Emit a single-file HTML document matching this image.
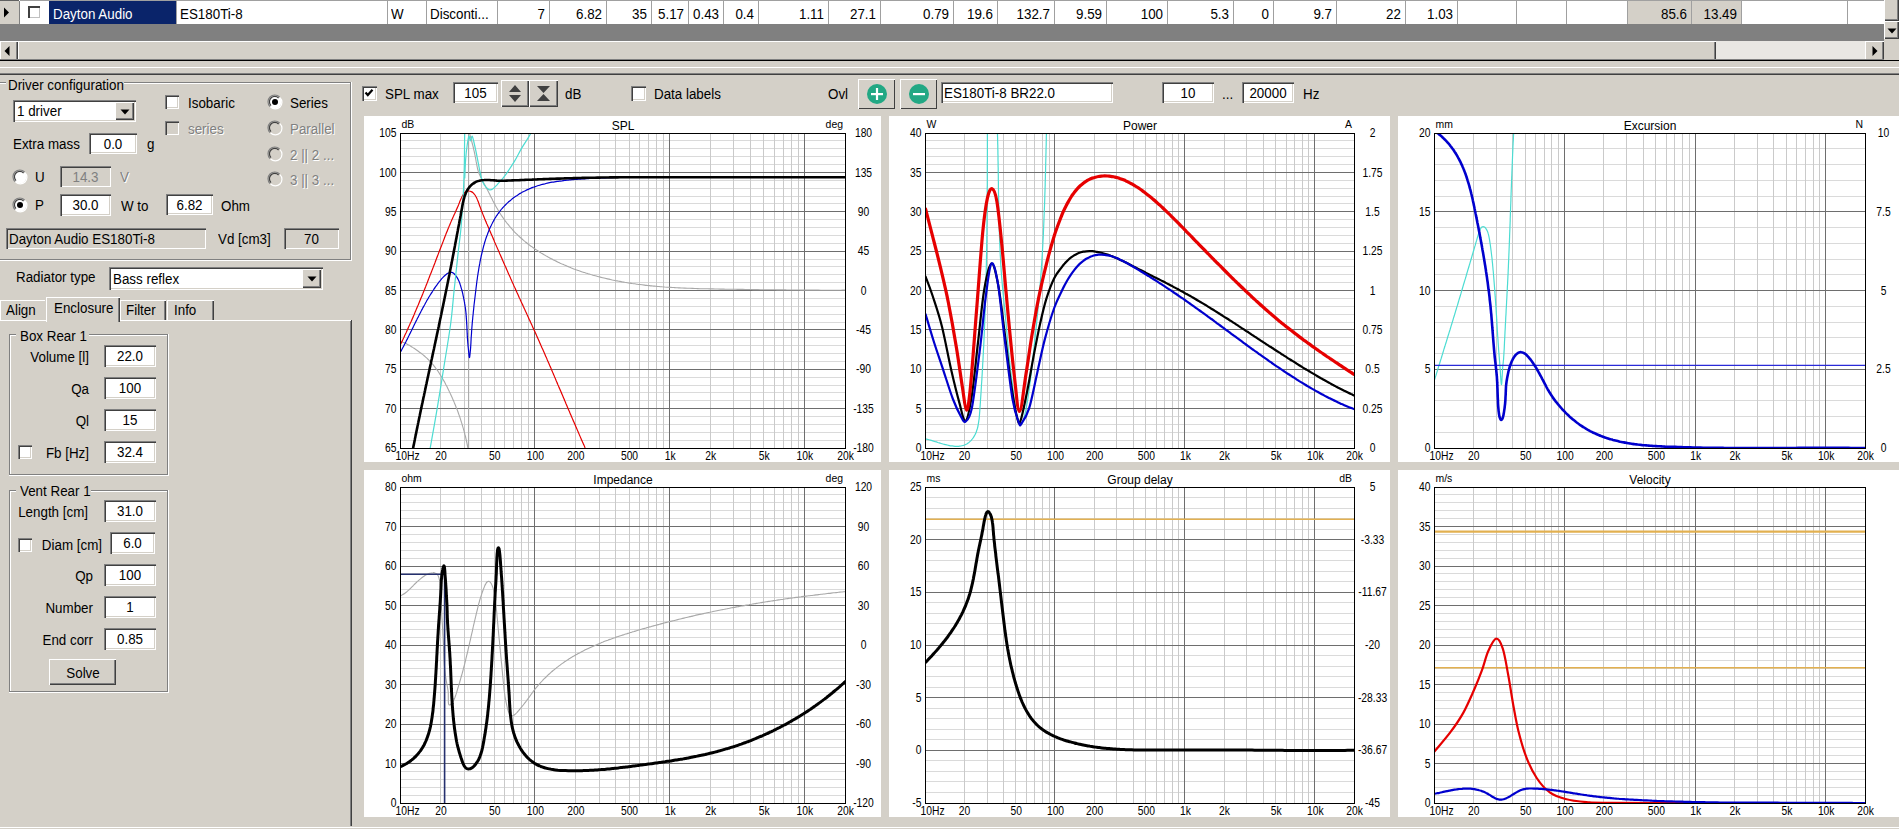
<!DOCTYPE html>
<html><head><meta charset="utf-8"><title>Enclosure</title>
<style>
html,body{margin:0;padding:0;}
body{width:1899px;height:829px;overflow:hidden;position:relative;background:#d4d0c8;font-family:"Liberation Sans",sans-serif;}
.a{position:absolute;box-sizing:border-box;}
.t{position:absolute;white-space:nowrap;font-family:"Liberation Sans",sans-serif;}
svg.a{overflow:visible;}
</style></head><body>
<div class="a" style="left:0px;top:0px;width:1899px;height:24px;background:#fff;"></div>
<div class="a" style="left:0px;top:0px;width:1884px;height:1px;background:#a0a0a0;"></div>
<div class="a" style="left:0px;top:0px;width:20px;height:24px;background:#d4d0c8;box-shadow: inset 0 1px 0 #fff, inset -1px 0 0 #808080;"></div>
<div class="a" style="left:0px;top:0px;width:19px;height:1px;background:#606060;"></div>
<svg class="a" style="left:3px;top:7px" width="8" height="11"><path d="M1 0.5 L6 5.5 L1 10.5 Z" fill="#000"/></svg>
<div class="a" style="left:28px;top:6px;width:12px;height:12px;background:#fff;box-shadow: inset 2px 2px 0 #404040, inset -1px -1px 0 #c0c0c0;"></div>
<div class="a" style="left:49px;top:1px;width:127px;height:23px;background:#0a246a;"></div>
<div class="t" style="left:53px;transform-origin:0 50%;top:5.70px;font-size:14px;line-height:16.10px;color:#fff;transform:scaleX(0.955);">Dayton Audio</div>
<div class="a" style="left:387px;top:1px;width:1px;height:23px;background:#a0a0a0;"></div>
<div class="t" style="left:180px;transform-origin:0 50%;top:5.70px;font-size:14px;line-height:16.10px;color:#000;transform:scaleX(0.955);">ES180Ti-8</div>
<div class="a" style="left:426px;top:1px;width:1px;height:23px;background:#a0a0a0;"></div>
<div class="t" style="left:391px;transform-origin:0 50%;top:5.70px;font-size:14px;line-height:16.10px;color:#000;transform:scaleX(0.955);">W</div>
<div class="a" style="left:497px;top:1px;width:1px;height:23px;background:#a0a0a0;"></div>
<div class="t" style="left:430px;transform-origin:0 50%;top:5.70px;font-size:14px;line-height:16.10px;color:#000;transform:scaleX(0.955);">Disconti...</div>
<div class="a" style="left:549px;top:1px;width:1px;height:23px;background:#a0a0a0;"></div>
<div class="t" style="left:424.5px;width:120px;text-align:right;transform-origin:100% 50%;top:5.70px;font-size:14px;line-height:16.10px;color:#000;transform:scaleX(0.955);">7</div>
<div class="a" style="left:606px;top:1px;width:1px;height:23px;background:#a0a0a0;"></div>
<div class="t" style="left:481.5px;width:120px;text-align:right;transform-origin:100% 50%;top:5.70px;font-size:14px;line-height:16.10px;color:#000;transform:scaleX(0.955);">6.82</div>
<div class="a" style="left:651px;top:1px;width:1px;height:23px;background:#a0a0a0;"></div>
<div class="t" style="left:526.5px;width:120px;text-align:right;transform-origin:100% 50%;top:5.70px;font-size:14px;line-height:16.10px;color:#000;transform:scaleX(0.955);">35</div>
<div class="a" style="left:688px;top:1px;width:1px;height:23px;background:#a0a0a0;"></div>
<div class="t" style="left:563.5px;width:120px;text-align:right;transform-origin:100% 50%;top:5.70px;font-size:14px;line-height:16.10px;color:#000;transform:scaleX(0.955);">5.17</div>
<div class="a" style="left:723px;top:1px;width:1px;height:23px;background:#a0a0a0;"></div>
<div class="t" style="left:598.5px;width:120px;text-align:right;transform-origin:100% 50%;top:5.70px;font-size:14px;line-height:16.10px;color:#000;transform:scaleX(0.955);">0.43</div>
<div class="a" style="left:758px;top:1px;width:1px;height:23px;background:#a0a0a0;"></div>
<div class="t" style="left:633.5px;width:120px;text-align:right;transform-origin:100% 50%;top:5.70px;font-size:14px;line-height:16.10px;color:#000;transform:scaleX(0.955);">0.4</div>
<div class="a" style="left:828px;top:1px;width:1px;height:23px;background:#a0a0a0;"></div>
<div class="t" style="left:703.5px;width:120px;text-align:right;transform-origin:100% 50%;top:5.70px;font-size:14px;line-height:16.10px;color:#000;transform:scaleX(0.955);">1.11</div>
<div class="a" style="left:880px;top:1px;width:1px;height:23px;background:#a0a0a0;"></div>
<div class="t" style="left:755.5px;width:120px;text-align:right;transform-origin:100% 50%;top:5.70px;font-size:14px;line-height:16.10px;color:#000;transform:scaleX(0.955);">27.1</div>
<div class="a" style="left:953px;top:1px;width:1px;height:23px;background:#a0a0a0;"></div>
<div class="t" style="left:828.5px;width:120px;text-align:right;transform-origin:100% 50%;top:5.70px;font-size:14px;line-height:16.10px;color:#000;transform:scaleX(0.955);">0.79</div>
<div class="a" style="left:997px;top:1px;width:1px;height:23px;background:#a0a0a0;"></div>
<div class="t" style="left:872.5px;width:120px;text-align:right;transform-origin:100% 50%;top:5.70px;font-size:14px;line-height:16.10px;color:#000;transform:scaleX(0.955);">19.6</div>
<div class="a" style="left:1054px;top:1px;width:1px;height:23px;background:#a0a0a0;"></div>
<div class="t" style="left:929.5px;width:120px;text-align:right;transform-origin:100% 50%;top:5.70px;font-size:14px;line-height:16.10px;color:#000;transform:scaleX(0.955);">132.7</div>
<div class="a" style="left:1106px;top:1px;width:1px;height:23px;background:#a0a0a0;"></div>
<div class="t" style="left:981.5px;width:120px;text-align:right;transform-origin:100% 50%;top:5.70px;font-size:14px;line-height:16.10px;color:#000;transform:scaleX(0.955);">9.59</div>
<div class="a" style="left:1167px;top:1px;width:1px;height:23px;background:#a0a0a0;"></div>
<div class="t" style="left:1042.5px;width:120px;text-align:right;transform-origin:100% 50%;top:5.70px;font-size:14px;line-height:16.10px;color:#000;transform:scaleX(0.955);">100</div>
<div class="a" style="left:1233px;top:1px;width:1px;height:23px;background:#a0a0a0;"></div>
<div class="t" style="left:1108.5px;width:120px;text-align:right;transform-origin:100% 50%;top:5.70px;font-size:14px;line-height:16.10px;color:#000;transform:scaleX(0.955);">5.3</div>
<div class="a" style="left:1273px;top:1px;width:1px;height:23px;background:#a0a0a0;"></div>
<div class="t" style="left:1148.5px;width:120px;text-align:right;transform-origin:100% 50%;top:5.70px;font-size:14px;line-height:16.10px;color:#000;transform:scaleX(0.955);">0</div>
<div class="a" style="left:1336px;top:1px;width:1px;height:23px;background:#a0a0a0;"></div>
<div class="t" style="left:1211.5px;width:120px;text-align:right;transform-origin:100% 50%;top:5.70px;font-size:14px;line-height:16.10px;color:#000;transform:scaleX(0.955);">9.7</div>
<div class="a" style="left:1405px;top:1px;width:1px;height:23px;background:#a0a0a0;"></div>
<div class="t" style="left:1280.5px;width:120px;text-align:right;transform-origin:100% 50%;top:5.70px;font-size:14px;line-height:16.10px;color:#000;transform:scaleX(0.955);">22</div>
<div class="a" style="left:1457px;top:1px;width:1px;height:23px;background:#a0a0a0;"></div>
<div class="t" style="left:1332.5px;width:120px;text-align:right;transform-origin:100% 50%;top:5.70px;font-size:14px;line-height:16.10px;color:#000;transform:scaleX(0.955);">1.03</div>
<div class="a" style="left:1516px;top:1px;width:1px;height:23px;background:#a0a0a0;"></div>
<div class="a" style="left:1566px;top:1px;width:1px;height:23px;background:#a0a0a0;"></div>
<div class="a" style="left:1627px;top:1px;width:1px;height:23px;background:#a0a0a0;"></div>
<div class="a" style="left:1628px;top:1px;width:63px;height:23px;background:#d4d0c8;"></div>
<div class="a" style="left:1691px;top:1px;width:1px;height:23px;background:#a0a0a0;"></div>
<div class="t" style="left:1566.5px;width:120px;text-align:right;transform-origin:100% 50%;top:5.70px;font-size:14px;line-height:16.10px;color:#000;transform:scaleX(0.955);">85.6</div>
<div class="a" style="left:1692px;top:1px;width:49px;height:23px;background:#d4d0c8;"></div>
<div class="a" style="left:1741px;top:1px;width:1px;height:23px;background:#a0a0a0;"></div>
<div class="t" style="left:1616.5px;width:120px;text-align:right;transform-origin:100% 50%;top:5.70px;font-size:14px;line-height:16.10px;color:#000;transform:scaleX(0.955);">13.49</div>
<div class="a" style="left:1847px;top:1px;width:1px;height:23px;background:#a0a0a0;"></div>
<div class="a" style="left:1884px;top:1px;width:1px;height:23px;background:#a0a0a0;"></div>
<div class="a" style="left:176px;top:1px;width:1px;height:23px;background:#a0a0a0;"></div>
<div class="a" style="left:0px;top:24px;width:1884px;height:17px;background:#808080;"></div>
<div class="a" style="left:1884px;top:0px;width:15px;height:41px;background:#d4d0c8;"></div>
<div class="a" style="left:1884px;top:-2px;width:15px;height:23px;background:#d4d0c8;box-shadow: inset 1px 1px 0 #fff, inset -1px -1px 0 #404040, inset -2px -2px 0 #808080;"></div>
<div class="a" style="left:1884px;top:21px;width:15px;height:18px;background:#d4d0c8;box-shadow: inset 1px 1px 0 #fff, inset -1px -1px 0 #404040, inset -2px -2px 0 #808080;"></div>
<svg class="a" style="left:1887px;top:28px" width="10" height="6"><path d="M0.5 0.5 L9.5 0.5 L5 5.5 Z" fill="#000"/></svg>
<div class="a" style="left:0px;top:41px;width:1884px;height:20px;background:#d4d0c8;"></div>
<div class="a" style="left:0px;top:41px;width:18px;height:20px;background:#d4d0c8;box-shadow: inset 1px 1px 0 #fff, inset -1px -1px 0 #404040, inset -2px -2px 0 #808080;"></div>
<svg class="a" style="left:4px;top:46px" width="6" height="10"><path d="M5.5 0 L0.5 5 L5.5 10 Z" fill="#000"/></svg>
<div class="a" style="left:18px;top:41px;width:1698px;height:20px;background:#d4d0c8;box-shadow: inset 1px 1px 0 #fff, inset -1px -1px 0 #404040, inset -2px -2px 0 #808080;"></div>
<div class="a" style="left:1716px;top:41px;width:149px;height:19px;background-color:#e9e7e3;"></div>
<div class="a" style="left:1865px;top:41px;width:19px;height:20px;background:#d4d0c8;box-shadow: inset 1px 1px 0 #fff, inset -1px -1px 0 #404040, inset -2px -2px 0 #808080;"></div>
<svg class="a" style="left:1872px;top:46px" width="6" height="10"><path d="M0.5 0 L5.5 5 L0.5 10 Z" fill="#000"/></svg>
<div class="a" style="left:1884px;top:41px;width:15px;height:20px;background:#d4d0c8;"></div>
<div class="a" style="left:0px;top:60px;width:1899px;height:1px;background:#000;"></div>
<div class="a" style="left:0px;top:59px;width:1884px;height:1px;background:#808080;"></div>
<div class="a" style="left:0px;top:67px;width:1899px;height:1px;background:#fff;"></div>
<div class="a" style="left:0px;top:73px;width:1899px;height:1px;background:#808080;"></div>
<div class="a" style="left:0px;top:74px;width:1899px;height:1px;background:#404040;"></div>
<div class="a" style="left:-3px;top:82px;width:354px;height:178px;border:1px solid #808080;"></div>
<div class="a" style="left:-2px;top:83px;width:352px;height:1px;background:#fff;"></div>
<div class="a" style="left:-2px;top:83px;width:1px;height:176px;background:#fff;"></div>
<div class="a" style="left:-3px;top:260px;width:355px;height:1px;background:#fff;"></div>
<div class="a" style="left:351px;top:82px;width:1px;height:179px;background:#fff;"></div>
<div class="a" style="left:6px;top:78px;width:118px;height:10px;background:#d4d0c8;"></div>
<div class="t" style="left:8px;transform-origin:0 50%;top:76.70px;font-size:14px;line-height:16.10px;color:#000;transform:scaleX(0.955);">Driver configuration</div>
<div class="a" style="left:13px;top:100px;width:123px;height:22px;background:#fff;box-shadow: inset 1px 1px 0 #808080, inset 2px 2px 0 #404040, inset -1px -1px 0 #fff, inset -2px -2px 0 #d4d0c8;"></div>
<div class="t" style="left:17px;transform-origin:0 50%;top:103.30px;font-size:14px;line-height:16.10px;color:#000;transform:scaleX(0.955);">1 driver</div>
<div class="a" style="left:115px;top:102px;width:19px;height:18px;background:#d4d0c8;box-shadow: inset 1px 1px 0 #fff, inset -1px -1px 0 #404040, inset -2px -2px 0 #808080;"></div>
<svg class="a" style="left:119.5px;top:108.5px" width="10" height="6"><path d="M0.5 0.5 L9.5 0.5 L5 5.5 Z" fill="#000"/></svg>
<div class="t" style="left:13px;transform-origin:0 50%;top:136.20px;font-size:14px;line-height:16.10px;color:#000;transform:scaleX(0.955);">Extra mass</div>
<div class="a" style="left:89px;top:133px;width:48px;height:21px;background:#fff;box-shadow: inset 1px 1px 0 #808080, inset 2px 2px 0 #404040, inset -1px -1px 0 #fff, inset -2px -2px 0 #d4d0c8;"></div>
<div class="t" style="left:89.0px;width:48px;text-align:center;transform-origin:50% 50%;top:135.80px;font-size:14px;line-height:16.10px;color:#000;transform:scaleX(0.955);">0.0</div>
<div class="t" style="left:147px;transform-origin:0 50%;top:136.20px;font-size:14px;line-height:16.10px;color:#000;transform:scaleX(0.955);">g</div>
<div class="a" style="left:165px;top:95px;width:14px;height:14px;background:#fff;box-shadow: inset 1px 1px 0 #808080, inset 2px 2px 0 #404040, inset -1px -1px 0 #fff, inset -2px -2px 0 #d4d0c8;"></div>
<div class="t" style="left:188px;transform-origin:0 50%;top:95.20px;font-size:14px;line-height:16.10px;color:#000;transform:scaleX(0.955);">Isobaric</div>
<div class="a" style="left:165px;top:121px;width:14px;height:14px;background:#d4d0c8;box-shadow: inset 1px 1px 0 #808080, inset 2px 2px 0 #404040, inset -1px -1px 0 #fff, inset -2px -2px 0 #d4d0c8;"></div>
<div class="t" style="left:189px;transform-origin:0 50%;top:122.20px;font-size:14px;line-height:16.10px;color:#fff;transform:scaleX(0.955);">series</div>
<div class="t" style="left:188px;transform-origin:0 50%;top:121.20px;font-size:14px;line-height:16.10px;color:#808080;transform:scaleX(0.955);">series</div>
<svg class="a" style="left:267.2px;top:94px" width="16" height="16"><circle cx="8" cy="8" r="6.5" fill="#fff"/><path d="M3 12.6 A6.6 6.6 0 0 1 12.6 3" stroke="#808080" stroke-width="1.2" fill="none"/><path d="M4 11.6 A5.2 5.2 0 0 1 11.6 4" stroke="#404040" stroke-width="1.2" fill="none"/><path d="M13 3.6 A6.6 6.6 0 0 1 3.6 13" stroke="#fff" stroke-width="1.2" fill="none"/><circle cx="8" cy="8" r="3" fill="#000"/></svg>
<div class="t" style="left:290px;transform-origin:0 50%;top:94.50px;font-size:14px;line-height:16.10px;color:#000;transform:scaleX(0.955);">Series</div>
<svg class="a" style="left:267.2px;top:120px" width="16" height="16"><circle cx="8" cy="8" r="6.5" fill="#d4d0c8"/><path d="M3 12.6 A6.6 6.6 0 0 1 12.6 3" stroke="#808080" stroke-width="1.2" fill="none"/><path d="M4 11.6 A5.2 5.2 0 0 1 11.6 4" stroke="#404040" stroke-width="1.2" fill="none"/><path d="M13 3.6 A6.6 6.6 0 0 1 3.6 13" stroke="#fff" stroke-width="1.2" fill="none"/></svg>
<div class="t" style="left:291px;transform-origin:0 50%;top:121.70px;font-size:14px;line-height:16.10px;color:#fff;transform:scaleX(0.955);">Parallel</div>
<div class="t" style="left:290px;transform-origin:0 50%;top:120.70px;font-size:14px;line-height:16.10px;color:#808080;transform:scaleX(0.955);">Parallel</div>
<svg class="a" style="left:267.2px;top:145.9px" width="16" height="16"><circle cx="8" cy="8" r="6.5" fill="#d4d0c8"/><path d="M3 12.6 A6.6 6.6 0 0 1 12.6 3" stroke="#808080" stroke-width="1.2" fill="none"/><path d="M4 11.6 A5.2 5.2 0 0 1 11.6 4" stroke="#404040" stroke-width="1.2" fill="none"/><path d="M13 3.6 A6.6 6.6 0 0 1 3.6 13" stroke="#fff" stroke-width="1.2" fill="none"/></svg>
<div class="t" style="left:291px;transform-origin:0 50%;top:147.60px;font-size:14px;line-height:16.10px;color:#fff;transform:scaleX(0.955);">2 || 2 ...</div>
<div class="t" style="left:290px;transform-origin:0 50%;top:146.60px;font-size:14px;line-height:16.10px;color:#808080;transform:scaleX(0.955);">2 || 2 ...</div>
<svg class="a" style="left:267.2px;top:171.3px" width="16" height="16"><circle cx="8" cy="8" r="6.5" fill="#d4d0c8"/><path d="M3 12.6 A6.6 6.6 0 0 1 12.6 3" stroke="#808080" stroke-width="1.2" fill="none"/><path d="M4 11.6 A5.2 5.2 0 0 1 11.6 4" stroke="#404040" stroke-width="1.2" fill="none"/><path d="M13 3.6 A6.6 6.6 0 0 1 3.6 13" stroke="#fff" stroke-width="1.2" fill="none"/></svg>
<div class="t" style="left:291px;transform-origin:0 50%;top:173.00px;font-size:14px;line-height:16.10px;color:#fff;transform:scaleX(0.955);">3 || 3 ...</div>
<div class="t" style="left:290px;transform-origin:0 50%;top:172.00px;font-size:14px;line-height:16.10px;color:#808080;transform:scaleX(0.955);">3 || 3 ...</div>
<svg class="a" style="left:12px;top:169px" width="16" height="16"><circle cx="8" cy="8" r="6.5" fill="#fff"/><path d="M3 12.6 A6.6 6.6 0 0 1 12.6 3" stroke="#808080" stroke-width="1.2" fill="none"/><path d="M4 11.6 A5.2 5.2 0 0 1 11.6 4" stroke="#404040" stroke-width="1.2" fill="none"/><path d="M13 3.6 A6.6 6.6 0 0 1 3.6 13" stroke="#fff" stroke-width="1.2" fill="none"/></svg>
<div class="t" style="left:35px;transform-origin:0 50%;top:169.40px;font-size:14px;line-height:16.10px;color:#000;transform:scaleX(0.955);">U</div>
<div class="a" style="left:60px;top:166px;width:51px;height:21px;background:#d4d0c8;box-shadow: inset 1px 1px 0 #808080, inset 2px 2px 0 #404040, inset -1px -1px 0 #fff, inset -2px -2px 0 #d4d0c8;"></div>
<div class="t" style="left:60.0px;width:51px;text-align:center;transform-origin:50% 50%;top:168.80px;font-size:14px;line-height:16.10px;color:#808080;transform:scaleX(0.955);">14.3</div>
<div class="t" style="left:121px;transform-origin:0 50%;top:170.20px;font-size:14px;line-height:16.10px;color:#fff;transform:scaleX(0.955);">V</div>
<div class="t" style="left:120px;transform-origin:0 50%;top:169.20px;font-size:14px;line-height:16.10px;color:#808080;transform:scaleX(0.955);">V</div>
<svg class="a" style="left:12px;top:196.6px" width="16" height="16"><circle cx="8" cy="8" r="6.5" fill="#fff"/><path d="M3 12.6 A6.6 6.6 0 0 1 12.6 3" stroke="#808080" stroke-width="1.2" fill="none"/><path d="M4 11.6 A5.2 5.2 0 0 1 11.6 4" stroke="#404040" stroke-width="1.2" fill="none"/><path d="M13 3.6 A6.6 6.6 0 0 1 3.6 13" stroke="#fff" stroke-width="1.2" fill="none"/><circle cx="8" cy="8" r="3" fill="#000"/></svg>
<div class="t" style="left:35px;transform-origin:0 50%;top:197.20px;font-size:14px;line-height:16.10px;color:#000;transform:scaleX(0.955);">P</div>
<div class="a" style="left:60px;top:194px;width:51px;height:22px;background:#fff;box-shadow: inset 1px 1px 0 #808080, inset 2px 2px 0 #404040, inset -1px -1px 0 #fff, inset -2px -2px 0 #d4d0c8;"></div>
<div class="t" style="left:60.0px;width:51px;text-align:center;transform-origin:50% 50%;top:197.30px;font-size:14px;line-height:16.10px;color:#000;transform:scaleX(0.955);">30.0</div>
<div class="t" style="left:120.5px;transform-origin:0 50%;top:197.70px;font-size:14px;line-height:16.10px;color:#000;transform:scaleX(0.955);">W to</div>
<div class="a" style="left:166px;top:194px;width:47px;height:21px;background:#fff;box-shadow: inset 1px 1px 0 #808080, inset 2px 2px 0 #404040, inset -1px -1px 0 #fff, inset -2px -2px 0 #d4d0c8;"></div>
<div class="t" style="left:166.0px;width:47px;text-align:center;transform-origin:50% 50%;top:196.80px;font-size:14px;line-height:16.10px;color:#000;transform:scaleX(0.955);">6.82</div>
<div class="t" style="left:220.5px;transform-origin:0 50%;top:197.70px;font-size:14px;line-height:16.10px;color:#000;transform:scaleX(0.955);">Ohm</div>
<div class="a" style="left:6px;top:228px;width:200px;height:21px;background:#d4d0c8;box-shadow: inset 1px 1px 0 #808080, inset 2px 2px 0 #404040, inset -1px -1px 0 #fff, inset -2px -2px 0 #d4d0c8;"></div>
<div class="t" style="left:9px;transform-origin:0 50%;top:230.80px;font-size:14px;line-height:16.10px;color:#000;transform:scaleX(0.955);">Dayton Audio ES180Ti-8</div>
<div class="t" style="left:217.5px;transform-origin:0 50%;top:231.20px;font-size:14px;line-height:16.10px;color:#000;transform:scaleX(0.955);">Vd [cm3]</div>
<div class="a" style="left:284px;top:228px;width:55px;height:21px;background:#d4d0c8;box-shadow: inset 1px 1px 0 #808080, inset 2px 2px 0 #404040, inset -1px -1px 0 #fff, inset -2px -2px 0 #d4d0c8;"></div>
<div class="t" style="left:284.0px;width:55px;text-align:center;transform-origin:50% 50%;top:230.80px;font-size:14px;line-height:16.10px;color:#000;transform:scaleX(0.955);">70</div>
<div class="t" style="left:15.5px;transform-origin:0 50%;top:269.20px;font-size:14px;line-height:16.10px;color:#000;transform:scaleX(0.955);">Radiator type</div>
<div class="a" style="left:109px;top:267px;width:214px;height:23px;background:#fff;box-shadow: inset 1px 1px 0 #808080, inset 2px 2px 0 #404040, inset -1px -1px 0 #fff, inset -2px -2px 0 #d4d0c8;"></div>
<div class="t" style="left:113px;transform-origin:0 50%;top:270.80px;font-size:14px;line-height:16.10px;color:#000;transform:scaleX(0.955);">Bass reflex</div>
<div class="a" style="left:302px;top:269px;width:19px;height:19px;background:#d4d0c8;box-shadow: inset 1px 1px 0 #fff, inset -1px -1px 0 #404040, inset -2px -2px 0 #808080;"></div>
<svg class="a" style="left:306.5px;top:276.0px" width="10" height="6"><path d="M0.5 0.5 L9.5 0.5 L5 5.5 Z" fill="#000"/></svg>
<div class="a" style="left:0px;top:320px;width:351px;height:1px;background:#fff;"></div>
<div class="a" style="left:351px;top:320px;width:1px;height:506px;background:#404040;"></div>
<div class="a" style="left:350px;top:321px;width:1px;height:505px;background:#808080;"></div>
<div class="a" style="left:0px;top:300px;width:45px;height:20px;background:#d4d0c8;box-shadow: inset 1px 1px 0 #fff;"></div>
<div class="t" style="left:5.5px;transform-origin:0 50%;top:301.70px;font-size:14px;line-height:16.10px;color:#000;transform:scaleX(0.955);">Align</div>
<div class="a" style="left:120px;top:300px;width:46px;height:20px;background:#d4d0c8;box-shadow: inset 1px 1px 0 #fff, inset -1px 0 0 #404040, inset -2px 0 0 #808080;"></div>
<div class="t" style="left:125.5px;transform-origin:0 50%;top:301.70px;font-size:14px;line-height:16.10px;color:#000;transform:scaleX(0.955);">Filter</div>
<div class="a" style="left:167px;top:300px;width:47px;height:20px;background:#d4d0c8;box-shadow: inset 1px 1px 0 #fff, inset -1px 0 0 #404040, inset -2px 0 0 #808080;"></div>
<div class="t" style="left:173.5px;transform-origin:0 50%;top:301.70px;font-size:14px;line-height:16.10px;color:#000;transform:scaleX(0.955);">Info</div>
<div class="a" style="left:46px;top:297px;width:74px;height:25px;background:#d4d0c8;box-shadow: inset 1px 1px 0 #fff, inset -1px 0 0 #404040, inset -2px 0 0 #808080;"></div>
<div class="t" style="left:53.5px;transform-origin:0 50%;top:299.70px;font-size:14px;line-height:16.10px;color:#000;transform:scaleX(0.955);">Enclosure</div>
<div class="a" style="left:9px;top:334px;width:159px;height:141px;border:1px solid #808080;"></div>
<div class="a" style="left:10px;top:335px;width:157px;height:1px;background:#fff;"></div>
<div class="a" style="left:10px;top:335px;width:1px;height:139px;background:#fff;"></div>
<div class="a" style="left:9px;top:475px;width:160px;height:1px;background:#fff;"></div>
<div class="a" style="left:168px;top:334px;width:1px;height:142px;background:#fff;"></div>
<div class="a" style="left:16px;top:330px;width:73px;height:10px;background:#d4d0c8;"></div>
<div class="t" style="left:20.3px;transform-origin:0 50%;top:328.20px;font-size:14px;line-height:16.10px;color:#000;transform:scaleX(0.955);">Box Rear 1</div>
<div class="a" style="left:104px;top:345px;width:52px;height:22px;background:#fff;box-shadow: inset 1px 1px 0 #808080, inset 2px 2px 0 #404040, inset -1px -1px 0 #fff, inset -2px -2px 0 #d4d0c8;"></div>
<div class="t" style="left:104.0px;width:52px;text-align:center;transform-origin:50% 50%;top:348.30px;font-size:14px;line-height:16.10px;color:#000;transform:scaleX(0.955);">22.0</div>
<div class="t" style="left:9px;width:80px;text-align:right;transform-origin:100% 50%;top:349.20px;font-size:14px;line-height:16.10px;color:#000;transform:scaleX(0.955);">Volume [l]</div>
<div class="a" style="left:104px;top:377px;width:52px;height:22px;background:#fff;box-shadow: inset 1px 1px 0 #808080, inset 2px 2px 0 #404040, inset -1px -1px 0 #fff, inset -2px -2px 0 #d4d0c8;"></div>
<div class="t" style="left:104.0px;width:52px;text-align:center;transform-origin:50% 50%;top:380.30px;font-size:14px;line-height:16.10px;color:#000;transform:scaleX(0.955);">100</div>
<div class="t" style="left:9px;width:80px;text-align:right;transform-origin:100% 50%;top:381.20px;font-size:14px;line-height:16.10px;color:#000;transform:scaleX(0.955);">Qa</div>
<div class="a" style="left:104px;top:409px;width:52px;height:22px;background:#fff;box-shadow: inset 1px 1px 0 #808080, inset 2px 2px 0 #404040, inset -1px -1px 0 #fff, inset -2px -2px 0 #d4d0c8;"></div>
<div class="t" style="left:104.0px;width:52px;text-align:center;transform-origin:50% 50%;top:412.30px;font-size:14px;line-height:16.10px;color:#000;transform:scaleX(0.955);">15</div>
<div class="t" style="left:9px;width:80px;text-align:right;transform-origin:100% 50%;top:413.20px;font-size:14px;line-height:16.10px;color:#000;transform:scaleX(0.955);">Ql</div>
<div class="a" style="left:104px;top:441px;width:52px;height:22px;background:#fff;box-shadow: inset 1px 1px 0 #808080, inset 2px 2px 0 #404040, inset -1px -1px 0 #fff, inset -2px -2px 0 #d4d0c8;"></div>
<div class="t" style="left:104.0px;width:52px;text-align:center;transform-origin:50% 50%;top:444.30px;font-size:14px;line-height:16.10px;color:#000;transform:scaleX(0.955);">32.4</div>
<div class="t" style="left:9px;width:80px;text-align:right;transform-origin:100% 50%;top:445.20px;font-size:14px;line-height:16.10px;color:#000;transform:scaleX(0.955);">Fb [Hz]</div>
<div class="a" style="left:18px;top:444.5px;width:14px;height:14px;background:#fff;box-shadow: inset 1px 1px 0 #808080, inset 2px 2px 0 #404040, inset -1px -1px 0 #fff, inset -2px -2px 0 #d4d0c8;"></div>
<div class="a" style="left:9px;top:490px;width:159px;height:202px;border:1px solid #808080;"></div>
<div class="a" style="left:10px;top:491px;width:157px;height:1px;background:#fff;"></div>
<div class="a" style="left:10px;top:491px;width:1px;height:200px;background:#fff;"></div>
<div class="a" style="left:9px;top:692px;width:160px;height:1px;background:#fff;"></div>
<div class="a" style="left:168px;top:490px;width:1px;height:203px;background:#fff;"></div>
<div class="a" style="left:16px;top:486px;width:75px;height:10px;background:#d4d0c8;"></div>
<div class="t" style="left:20px;transform-origin:0 50%;top:483.20px;font-size:14px;line-height:16.10px;color:#000;transform:scaleX(0.955);">Vent Rear 1</div>
<div class="a" style="left:104px;top:500px;width:52px;height:22px;background:#fff;box-shadow: inset 1px 1px 0 #808080, inset 2px 2px 0 #404040, inset -1px -1px 0 #fff, inset -2px -2px 0 #d4d0c8;"></div>
<div class="t" style="left:104.0px;width:52px;text-align:center;transform-origin:50% 50%;top:503.30px;font-size:14px;line-height:16.10px;color:#000;transform:scaleX(0.955);">31.0</div>
<div class="t" style="left:7.5px;width:80px;text-align:right;transform-origin:100% 50%;top:503.70px;font-size:14px;line-height:16.10px;color:#000;transform:scaleX(0.955);">Length [cm]</div>
<div class="a" style="left:18px;top:537.5px;width:14px;height:14px;background:#fff;box-shadow: inset 1px 1px 0 #808080, inset 2px 2px 0 #404040, inset -1px -1px 0 #fff, inset -2px -2px 0 #d4d0c8;"></div>
<div class="a" style="left:110px;top:532px;width:45px;height:22px;background:#fff;box-shadow: inset 1px 1px 0 #808080, inset 2px 2px 0 #404040, inset -1px -1px 0 #fff, inset -2px -2px 0 #d4d0c8;"></div>
<div class="t" style="left:110.0px;width:45px;text-align:center;transform-origin:50% 50%;top:535.30px;font-size:14px;line-height:16.10px;color:#000;transform:scaleX(0.955);">6.0</div>
<div class="t" style="left:21.5px;width:80px;text-align:right;transform-origin:100% 50%;top:536.70px;font-size:14px;line-height:16.10px;color:#000;transform:scaleX(0.955);">Diam [cm]</div>
<div class="a" style="left:104px;top:564px;width:52px;height:22px;background:#fff;box-shadow: inset 1px 1px 0 #808080, inset 2px 2px 0 #404040, inset -1px -1px 0 #fff, inset -2px -2px 0 #d4d0c8;"></div>
<div class="t" style="left:104.0px;width:52px;text-align:center;transform-origin:50% 50%;top:567.30px;font-size:14px;line-height:16.10px;color:#000;transform:scaleX(0.955);">100</div>
<div class="t" style="left:12.5px;width:80px;text-align:right;transform-origin:100% 50%;top:567.50px;font-size:14px;line-height:16.10px;color:#000;transform:scaleX(0.955);">Qp</div>
<div class="a" style="left:104px;top:596px;width:52px;height:22px;background:#fff;box-shadow: inset 1px 1px 0 #808080, inset 2px 2px 0 #404040, inset -1px -1px 0 #fff, inset -2px -2px 0 #d4d0c8;"></div>
<div class="t" style="left:104.0px;width:52px;text-align:center;transform-origin:50% 50%;top:599.30px;font-size:14px;line-height:16.10px;color:#000;transform:scaleX(0.955);">1</div>
<div class="t" style="left:12.5px;width:80px;text-align:right;transform-origin:100% 50%;top:599.50px;font-size:14px;line-height:16.10px;color:#000;transform:scaleX(0.955);">Number</div>
<div class="a" style="left:104px;top:628px;width:52px;height:22px;background:#fff;box-shadow: inset 1px 1px 0 #808080, inset 2px 2px 0 #404040, inset -1px -1px 0 #fff, inset -2px -2px 0 #d4d0c8;"></div>
<div class="t" style="left:104.0px;width:52px;text-align:center;transform-origin:50% 50%;top:631.30px;font-size:14px;line-height:16.10px;color:#000;transform:scaleX(0.955);">0.85</div>
<div class="t" style="left:12.5px;width:80px;text-align:right;transform-origin:100% 50%;top:631.50px;font-size:14px;line-height:16.10px;color:#000;transform:scaleX(0.955);">End corr</div>
<div class="a" style="left:49px;top:659px;width:67px;height:26px;background:#d4d0c8;box-shadow: inset 1px 1px 0 #fff, inset -1px -1px 0 #404040, inset -2px -2px 0 #808080;"></div>
<div class="t" style="left:52.5px;width:60px;text-align:center;transform-origin:50% 50%;top:665.20px;font-size:14px;line-height:16.10px;color:#000;transform:scaleX(0.955);">Solve</div>
<div class="a" style="left:0px;top:827px;width:1899px;height:1px;background:#fff;"></div>
<div class="a" style="left:361.5px;top:85.5px;width:15px;height:15px;background:#fff;box-shadow: inset 1px 1px 0 #808080, inset 2px 2px 0 #404040, inset -1px -1px 0 #fff, inset -2px -2px 0 #d4d0c8;"></div>
<svg class="a" style="left:361.5px;top:85.5px" width="15" height="15"><path d="M3.5 6.5 L5.8 9 L10.5 3.8" stroke="#000" stroke-width="2.2" fill="none"/></svg>
<div class="t" style="left:384.5px;transform-origin:0 50%;top:86.20px;font-size:14px;line-height:16.10px;color:#000;transform:scaleX(0.955);">SPL max</div>
<div class="a" style="left:453px;top:82px;width:45px;height:21px;background:#fff;box-shadow: inset 1px 1px 0 #808080, inset 2px 2px 0 #404040, inset -1px -1px 0 #fff, inset -2px -2px 0 #d4d0c8;"></div>
<div class="t" style="left:453.0px;width:45px;text-align:center;transform-origin:50% 50%;top:84.80px;font-size:14px;line-height:16.10px;color:#000;transform:scaleX(0.955);">105</div>
<div class="a" style="left:501px;top:80px;width:28px;height:27px;background:#d4d0c8;box-shadow: inset 1px 1px 0 #fff, inset -1px -1px 0 #404040, inset -2px -2px 0 #808080;"></div>
<svg class="a" style="left:501px;top:80px" width="28" height="27"><path d="M8 12 L14 5 L20 12 Z M8 15 L20 15 L14 22 Z" fill="#404040"/></svg>
<div class="a" style="left:529px;top:80px;width:29px;height:27px;background:#d4d0c8;box-shadow: inset 1px 1px 0 #fff, inset -1px -1px 0 #404040, inset -2px -2px 0 #808080;"></div>
<svg class="a" style="left:529px;top:80px" width="29" height="27"><path d="M8 6 L21 6 L14.5 13 Z M14.5 14 L21 21 L8 21 Z" fill="#404040"/></svg>
<div class="t" style="left:564.5px;transform-origin:0 50%;top:86.20px;font-size:14px;line-height:16.10px;color:#000;transform:scaleX(0.955);">dB</div>
<div class="a" style="left:630.5px;top:85.5px;width:15px;height:15px;background:#fff;box-shadow: inset 1px 1px 0 #808080, inset 2px 2px 0 #404040, inset -1px -1px 0 #fff, inset -2px -2px 0 #d4d0c8;"></div>
<div class="t" style="left:653.5px;transform-origin:0 50%;top:86.20px;font-size:14px;line-height:16.10px;color:#000;transform:scaleX(0.955);">Data labels</div>
<div class="t" style="left:828px;transform-origin:0 50%;top:85.70px;font-size:14px;line-height:16.10px;color:#000;transform:scaleX(0.955);">Ovl</div>
<div class="a" style="left:858px;top:79px;width:37px;height:30px;background:#d4d0c8;box-shadow: inset 1px 1px 0 #fff, inset -1px -1px 0 #404040;"></div>
<svg class="a" style="left:858px;top:79px" width="37" height="30"><circle cx="19" cy="15" r="10" fill="#22a884"/><rect x="13" y="14" width="12" height="2.2" fill="#fff"/><rect x="17.9" y="9" width="2.2" height="12" fill="#fff"/></svg>
<div class="a" style="left:900px;top:79px;width:37px;height:30px;background:#d4d0c8;box-shadow: inset 1px 1px 0 #fff, inset -1px -1px 0 #404040;"></div>
<svg class="a" style="left:900px;top:79px" width="37" height="30"><circle cx="19" cy="15" r="10" fill="#22a884"/><rect x="13" y="14" width="12" height="2.2" fill="#fff"/></svg>
<div class="a" style="left:941px;top:82px;width:172px;height:21px;background:#fff;box-shadow: inset 1px 1px 0 #808080, inset 2px 2px 0 #404040, inset -1px -1px 0 #fff, inset -2px -2px 0 #d4d0c8;"></div>
<div class="t" style="left:944px;transform-origin:0 50%;top:84.80px;font-size:14px;line-height:16.10px;color:#000;transform:scaleX(0.955);">ES180Ti-8 BR22.0</div>
<div class="a" style="left:1162px;top:82px;width:52px;height:21px;background:#fff;box-shadow: inset 1px 1px 0 #808080, inset 2px 2px 0 #404040, inset -1px -1px 0 #fff, inset -2px -2px 0 #d4d0c8;"></div>
<div class="t" style="left:1162.0px;width:52px;text-align:center;transform-origin:50% 50%;top:84.80px;font-size:14px;line-height:16.10px;color:#000;transform:scaleX(0.955);">10</div>
<div class="t" style="left:1221.5px;transform-origin:0 50%;top:86.20px;font-size:14px;line-height:16.10px;color:#000;transform:scaleX(0.955);">...</div>
<div class="a" style="left:1242px;top:82px;width:52px;height:21px;background:#fff;box-shadow: inset 1px 1px 0 #808080, inset 2px 2px 0 #404040, inset -1px -1px 0 #fff, inset -2px -2px 0 #d4d0c8;"></div>
<div class="t" style="left:1242.0px;width:52px;text-align:center;transform-origin:50% 50%;top:84.80px;font-size:14px;line-height:16.10px;color:#000;transform:scaleX(0.955);">20000</div>
<div class="t" style="left:1303px;transform-origin:0 50%;top:86.20px;font-size:14px;line-height:16.10px;color:#000;transform:scaleX(0.955);">Hz</div>

<svg class="a" style="left:0;top:0" width="1899" height="829" font-family="Liberation Sans, sans-serif">
<rect x="364" y="116" width="517" height="346" fill="#fff"/>
<rect x="364" y="470" width="517" height="347" fill="#fff"/>
<rect x="889" y="116" width="501" height="346" fill="#fff"/>
<rect x="889" y="470" width="501" height="347" fill="#fff"/>
<rect x="1398" y="116" width="501" height="346" fill="#fff"/>
<rect x="1398" y="470" width="501" height="347" fill="#fff"/>
<line x1="401" y1="440.5" x2="845" y2="440.5" stroke="#dadada" stroke-width="1"/>
<line x1="401" y1="432.5" x2="845" y2="432.5" stroke="#dadada" stroke-width="1"/>
<line x1="401" y1="424.5" x2="845" y2="424.5" stroke="#dadada" stroke-width="1"/>
<line x1="401" y1="416.5" x2="845" y2="416.5" stroke="#dadada" stroke-width="1"/>
<line x1="401" y1="400.5" x2="845" y2="400.5" stroke="#dadada" stroke-width="1"/>
<line x1="401" y1="392.5" x2="845" y2="392.5" stroke="#dadada" stroke-width="1"/>
<line x1="401" y1="385.5" x2="845" y2="385.5" stroke="#dadada" stroke-width="1"/>
<line x1="401" y1="377.5" x2="845" y2="377.5" stroke="#dadada" stroke-width="1"/>
<line x1="401" y1="361.5" x2="845" y2="361.5" stroke="#dadada" stroke-width="1"/>
<line x1="401" y1="353.5" x2="845" y2="353.5" stroke="#dadada" stroke-width="1"/>
<line x1="401" y1="345.5" x2="845" y2="345.5" stroke="#dadada" stroke-width="1"/>
<line x1="401" y1="337.5" x2="845" y2="337.5" stroke="#dadada" stroke-width="1"/>
<line x1="401" y1="322.5" x2="845" y2="322.5" stroke="#dadada" stroke-width="1"/>
<line x1="401" y1="314.5" x2="845" y2="314.5" stroke="#dadada" stroke-width="1"/>
<line x1="401" y1="306.5" x2="845" y2="306.5" stroke="#dadada" stroke-width="1"/>
<line x1="401" y1="298.5" x2="845" y2="298.5" stroke="#dadada" stroke-width="1"/>
<line x1="401" y1="282.5" x2="845" y2="282.5" stroke="#dadada" stroke-width="1"/>
<line x1="401" y1="274.5" x2="845" y2="274.5" stroke="#dadada" stroke-width="1"/>
<line x1="401" y1="266.5" x2="845" y2="266.5" stroke="#dadada" stroke-width="1"/>
<line x1="401" y1="259.5" x2="845" y2="259.5" stroke="#dadada" stroke-width="1"/>
<line x1="401" y1="243.5" x2="845" y2="243.5" stroke="#dadada" stroke-width="1"/>
<line x1="401" y1="235.5" x2="845" y2="235.5" stroke="#dadada" stroke-width="1"/>
<line x1="401" y1="227.5" x2="845" y2="227.5" stroke="#dadada" stroke-width="1"/>
<line x1="401" y1="219.5" x2="845" y2="219.5" stroke="#dadada" stroke-width="1"/>
<line x1="401" y1="203.5" x2="845" y2="203.5" stroke="#dadada" stroke-width="1"/>
<line x1="401" y1="196.5" x2="845" y2="196.5" stroke="#dadada" stroke-width="1"/>
<line x1="401" y1="188.5" x2="845" y2="188.5" stroke="#dadada" stroke-width="1"/>
<line x1="401" y1="180.5" x2="845" y2="180.5" stroke="#dadada" stroke-width="1"/>
<line x1="401" y1="164.5" x2="845" y2="164.5" stroke="#dadada" stroke-width="1"/>
<line x1="401" y1="156.5" x2="845" y2="156.5" stroke="#dadada" stroke-width="1"/>
<line x1="401" y1="148.5" x2="845" y2="148.5" stroke="#dadada" stroke-width="1"/>
<line x1="401" y1="140.5" x2="845" y2="140.5" stroke="#dadada" stroke-width="1"/>
<line x1="440.5" y1="134" x2="440.5" y2="448" stroke="#cacaca" stroke-width="1"/>
<line x1="464.5" y1="134" x2="464.5" y2="448" stroke="#cacaca" stroke-width="1"/>
<line x1="481.5" y1="134" x2="481.5" y2="448" stroke="#cacaca" stroke-width="1"/>
<line x1="494.5" y1="134" x2="494.5" y2="448" stroke="#cacaca" stroke-width="1"/>
<line x1="504.5" y1="134" x2="504.5" y2="448" stroke="#cacaca" stroke-width="1"/>
<line x1="513.5" y1="134" x2="513.5" y2="448" stroke="#cacaca" stroke-width="1"/>
<line x1="521.5" y1="134" x2="521.5" y2="448" stroke="#cacaca" stroke-width="1"/>
<line x1="528.5" y1="134" x2="528.5" y2="448" stroke="#cacaca" stroke-width="1"/>
<line x1="575.5" y1="134" x2="575.5" y2="448" stroke="#cacaca" stroke-width="1"/>
<line x1="599.5" y1="134" x2="599.5" y2="448" stroke="#cacaca" stroke-width="1"/>
<line x1="615.5" y1="134" x2="615.5" y2="448" stroke="#cacaca" stroke-width="1"/>
<line x1="629.5" y1="134" x2="629.5" y2="448" stroke="#cacaca" stroke-width="1"/>
<line x1="639.5" y1="134" x2="639.5" y2="448" stroke="#cacaca" stroke-width="1"/>
<line x1="648.5" y1="134" x2="648.5" y2="448" stroke="#cacaca" stroke-width="1"/>
<line x1="656.5" y1="134" x2="656.5" y2="448" stroke="#cacaca" stroke-width="1"/>
<line x1="663.5" y1="134" x2="663.5" y2="448" stroke="#cacaca" stroke-width="1"/>
<line x1="710.5" y1="134" x2="710.5" y2="448" stroke="#cacaca" stroke-width="1"/>
<line x1="733.5" y1="134" x2="733.5" y2="448" stroke="#cacaca" stroke-width="1"/>
<line x1="750.5" y1="134" x2="750.5" y2="448" stroke="#cacaca" stroke-width="1"/>
<line x1="763.5" y1="134" x2="763.5" y2="448" stroke="#cacaca" stroke-width="1"/>
<line x1="774.5" y1="134" x2="774.5" y2="448" stroke="#cacaca" stroke-width="1"/>
<line x1="783.5" y1="134" x2="783.5" y2="448" stroke="#cacaca" stroke-width="1"/>
<line x1="791.5" y1="134" x2="791.5" y2="448" stroke="#cacaca" stroke-width="1"/>
<line x1="798.5" y1="134" x2="798.5" y2="448" stroke="#cacaca" stroke-width="1"/>
<line x1="401" y1="408.5" x2="845" y2="408.5" stroke="#6e6e6e" stroke-width="1"/>
<line x1="401" y1="369.5" x2="845" y2="369.5" stroke="#6e6e6e" stroke-width="1"/>
<line x1="401" y1="329.5" x2="845" y2="329.5" stroke="#6e6e6e" stroke-width="1"/>
<line x1="401" y1="290.5" x2="845" y2="290.5" stroke="#6e6e6e" stroke-width="1"/>
<line x1="401" y1="251.5" x2="845" y2="251.5" stroke="#6e6e6e" stroke-width="1"/>
<line x1="401" y1="211.5" x2="845" y2="211.5" stroke="#6e6e6e" stroke-width="1"/>
<line x1="401" y1="172.5" x2="845" y2="172.5" stroke="#6e6e6e" stroke-width="1"/>
<line x1="534.5" y1="134" x2="534.5" y2="448" stroke="#6e6e6e" stroke-width="1"/>
<line x1="669.5" y1="134" x2="669.5" y2="448" stroke="#6e6e6e" stroke-width="1"/>
<line x1="804.5" y1="134" x2="804.5" y2="448" stroke="#6e6e6e" stroke-width="1"/>
<clipPath id="clip00"><rect x="401" y="134" width="444" height="314"/></clipPath>
<g clip-path="url(#clip00)">
<path d="M400.6,341.3 C401.0,341.5 402.2,341.9 402.9,342.3 C403.7,342.6 404.5,342.9 405.2,343.3 C406.0,343.6 406.7,344.0 407.5,344.4 C408.2,344.8 409.0,345.2 409.7,345.6 C410.4,346.0 411.2,346.5 411.9,346.9 C412.6,347.4 413.4,347.8 414.1,348.3 C414.8,348.8 415.5,349.2 416.2,349.7 C416.9,350.2 417.6,350.7 418.3,351.2 C419.0,351.7 419.7,352.2 420.4,352.8 C421.1,353.3 421.8,353.8 422.4,354.4 C423.1,354.9 423.8,355.5 424.4,356.0 C425.1,356.6 425.7,357.2 426.3,357.7 C427.0,358.3 427.6,358.9 428.2,359.5 C428.8,360.1 429.4,360.7 430.0,361.3 C430.6,362.0 431.1,362.6 431.7,363.2 C432.3,363.9 432.8,364.5 433.4,365.2 C433.9,365.8 434.4,366.5 434.9,367.1 C435.5,367.8 436.0,368.5 436.5,369.2 C437.0,369.9 437.5,370.5 438.0,371.2 C438.4,371.9 438.9,372.6 439.4,373.4 C439.8,374.1 440.3,374.8 440.7,375.5 C441.2,376.2 441.6,376.9 442.1,377.7 C442.5,378.4 442.9,379.1 443.3,379.9 C443.8,380.6 444.2,381.4 444.6,382.1 C445.0,382.9 445.4,383.6 445.8,384.4 C446.2,385.1 446.6,385.9 447.0,386.6 C447.3,387.4 447.7,388.2 448.1,388.9 C448.5,389.7 448.9,390.5 449.2,391.2 C449.6,392.0 450.0,392.8 450.3,393.5 C450.7,394.3 451.0,395.1 451.4,395.9 C451.7,396.7 452.1,397.4 452.4,398.2 C452.8,399.0 453.1,399.8 453.4,400.6 C453.8,401.4 454.1,402.1 454.4,402.9 C454.8,403.7 455.1,404.5 455.4,405.3 C455.7,406.1 456.0,406.9 456.3,407.7 C456.7,408.5 457.0,409.3 457.3,410.1 C457.6,410.9 457.9,411.7 458.2,412.5 C458.4,413.3 458.7,414.1 459.0,414.9 C459.3,415.7 459.6,416.5 459.9,417.3 C460.1,418.1 460.4,418.9 460.7,419.8 C460.9,420.6 461.2,421.4 461.4,422.2 C461.7,423.0 462.0,423.8 462.2,424.6 C462.4,425.5 462.7,426.3 462.9,427.1 C463.2,427.9 463.4,428.7 463.6,429.6 C463.9,430.4 464.1,431.2 464.3,432.0 C464.5,432.8 464.7,433.7 464.9,434.5 C465.2,435.3 465.4,436.1 465.6,437.0 C465.8,437.8 466.0,438.6 466.1,439.5 C466.3,440.3 466.5,441.1 466.7,442.0 C466.9,442.8 467.1,443.6 467.2,444.5 C467.4,445.3 467.6,446.1 467.7,447.0 C467.9,447.8 468.1,448.6 468.2,449.5 C468.4,450.3 468.6,451.6 468.7,452.0" stroke="#a8a8a8" stroke-width="1.1" fill="none" stroke-linejoin="round" stroke-linecap="round"/>
<path d="M468.6,452.0 L468.6,130.0" stroke="#a8a8a8" stroke-width="1.1" fill="none" stroke-linejoin="round" stroke-linecap="round"/>
<path d="M468.6,130.0 C468.7,130.4 469.1,131.6 469.3,132.4 C469.5,133.2 469.7,134.0 470.0,134.9 C470.2,135.7 470.4,136.5 470.6,137.3 C470.9,138.1 471.1,138.9 471.3,139.7 C471.5,140.5 471.7,141.3 471.9,142.1 C472.1,142.9 472.3,143.8 472.6,144.6 C472.8,145.4 473.0,146.2 473.2,147.0 C473.4,147.8 473.6,148.6 473.7,149.4 C473.9,150.3 474.1,151.1 474.3,151.9 C474.5,152.7 474.7,153.5 474.8,154.4 C475.0,155.2 475.2,156.0 475.3,156.9 C475.5,157.7 475.6,158.5 475.8,159.4 C475.9,160.2 476.1,161.0 476.2,161.9 C476.4,162.7 476.5,163.5 476.7,164.4 C476.8,165.2 477.0,166.0 477.2,166.9 C477.3,167.7 477.5,168.5 477.7,169.3 C478.0,170.1 478.2,170.9 478.4,171.7 C478.7,172.5 479.0,173.3 479.3,174.1 C479.6,174.8 479.9,175.6 480.3,176.3 C480.6,177.1 481.0,177.8 481.4,178.6 C481.7,179.3 482.1,180.1 482.5,180.8 C482.9,181.5 483.3,182.3 483.7,183.0 C484.1,183.7 484.6,184.5 485.0,185.2 C485.4,185.9 485.8,186.7 486.1,187.4 C486.5,188.1 486.9,188.9 487.3,189.6 C487.7,190.4 488.1,191.1 488.5,191.9 C488.8,192.6 489.2,193.4 489.6,194.1 C490.0,194.9 490.4,195.6 490.7,196.4 C491.1,197.1 491.5,197.9 491.9,198.6 C492.3,199.4 492.6,200.1 493.0,200.9 C493.4,201.6 493.8,202.4 494.2,203.1 C494.6,203.9 495.0,204.6 495.4,205.4 C495.8,206.1 496.2,206.8 496.6,207.6 C497.0,208.3 497.4,209.0 497.9,209.8 C498.3,210.5 498.7,211.2 499.2,211.9 C499.6,212.6 500.0,213.3 500.5,214.0 C501.0,214.8 501.4,215.5 501.9,216.1 C502.4,216.8 502.8,217.5 503.3,218.2 C503.8,218.9 504.3,219.6 504.8,220.3 C505.3,220.9 505.8,221.6 506.3,222.3 C506.8,222.9 507.3,223.6 507.8,224.2 C508.4,224.9 508.9,225.5 509.4,226.2 C510.0,226.8 510.5,227.5 511.1,228.1 C511.6,228.7 512.2,229.3 512.7,230.0 C513.3,230.6 513.9,231.2 514.4,231.8 C515.0,232.4 515.6,233.0 516.2,233.6 C516.8,234.2 517.4,234.7 518.0,235.3 C518.6,235.9 519.2,236.5 519.8,237.0 C520.4,237.6 521.0,238.2 521.7,238.7 C522.3,239.3 522.9,239.8 523.6,240.4 C524.2,240.9 524.9,241.4 525.5,242.0 C526.1,242.5 526.8,243.0 527.5,243.5 C528.1,244.0 528.8,244.6 529.5,245.1 C530.1,245.6 530.8,246.1 531.5,246.6 C532.2,247.0 532.8,247.5 533.5,248.0 C534.2,248.5 534.9,249.0 535.6,249.4 C536.3,249.9 537.0,250.4 537.7,250.8 C538.4,251.3 539.1,251.8 539.8,252.2 C540.5,252.6 541.3,253.1 542.0,253.5 C542.7,254.0 543.4,254.4 544.1,254.8 C544.9,255.2 545.6,255.7 546.3,256.1 C547.1,256.5 547.8,256.9 548.5,257.3 C549.3,257.7 550.0,258.1 550.8,258.5 C551.5,258.9 552.3,259.3 553.0,259.7 C553.8,260.1 554.5,260.4 555.3,260.8 C556.0,261.2 556.8,261.6 557.6,261.9 C558.3,262.3 559.1,262.6 559.8,263.0 C560.6,263.4 561.4,263.7 562.1,264.1 C562.9,264.4 563.7,264.7 564.4,265.1 C565.2,265.4 566.0,265.7 566.8,266.1 C567.5,266.4 568.3,266.7 569.1,267.0 C569.9,267.3 570.7,267.6 571.4,268.0 C572.2,268.3 573.0,268.6 573.8,268.9 C574.6,269.2 575.4,269.4 576.1,269.7 C576.9,270.0 577.7,270.3 578.5,270.6 C579.3,270.9 580.1,271.1 580.9,271.4 C581.7,271.7 582.5,272.0 583.3,272.2 C584.1,272.5 584.9,272.7 585.7,273.0 C586.5,273.2 587.3,273.5 588.1,273.7 C588.9,274.0 589.7,274.2 590.5,274.5 C591.3,274.7 592.1,274.9 592.9,275.2 C593.7,275.4 594.5,275.6 595.3,275.8 C596.1,276.1 596.9,276.3 597.7,276.5 C598.5,276.7 599.4,276.9 600.2,277.1 C601.0,277.3 601.8,277.5 602.6,277.7 C603.4,277.9 604.2,278.1 605.1,278.3 C605.9,278.5 606.7,278.7 607.5,278.9 C608.3,279.1 609.1,279.3 610.0,279.4 C610.8,279.6 611.6,279.8 612.4,280.0 C613.2,280.1 614.1,280.3 614.9,280.5 C615.7,280.6 616.5,280.8 617.3,280.9 C618.2,281.1 619.0,281.3 619.8,281.4 C620.6,281.6 621.5,281.7 622.3,281.9 C623.1,282.0 623.9,282.1 624.7,282.3 C625.6,282.4 626.4,282.6 627.2,282.7 C628.1,282.8 628.9,283.0 629.7,283.1 C630.5,283.2 631.4,283.3 632.2,283.5 C633.0,283.6 633.8,283.7 634.7,283.8 C635.5,283.9 636.3,284.1 637.2,284.2 C638.0,284.3 638.8,284.4 639.7,284.5 C640.5,284.6 641.3,284.7 642.1,284.8 C643.0,284.9 643.8,285.0 644.6,285.1 C645.5,285.2 646.3,285.3 647.1,285.4 C648.0,285.5 648.8,285.6 649.6,285.6 C650.5,285.7 651.3,285.8 652.1,285.9 C653.0,286.0 653.8,286.1 654.6,286.1 C655.5,286.2 656.3,286.3 657.2,286.4 C658.0,286.4 658.8,286.5 659.7,286.6 C660.5,286.6 661.3,286.7 662.2,286.8 C663.0,286.8 663.8,286.9 664.7,287.0 C665.5,287.0 666.4,287.1 667.2,287.2 C668.0,287.2 668.9,287.3 669.7,287.3 C670.5,287.4 671.4,287.4 672.2,287.5 C673.1,287.5 673.9,287.6 674.7,287.6 C675.6,287.7 676.4,287.7 677.3,287.8 C678.1,287.8 678.9,287.9 679.8,287.9 C680.6,287.9 681.5,288.0 682.3,288.0 C683.1,288.1 684.0,288.1 684.8,288.1 C685.7,288.2 686.5,288.2 687.3,288.2 C688.2,288.3 689.0,288.3 689.9,288.3 C690.7,288.4 691.5,288.4 692.4,288.4 C693.2,288.5 694.1,288.5 694.9,288.5 C695.8,288.5 696.6,288.6 697.4,288.6 C698.3,288.6 699.1,288.6 700.0,288.7 C700.8,288.7 701.6,288.7 702.5,288.7 C703.3,288.7 704.2,288.8 705.0,288.8 C705.9,288.8 706.7,288.8 707.5,288.8 C708.4,288.9 709.2,288.9 710.1,288.9 C710.9,288.9 711.7,288.9 712.6,288.9 C713.4,289.0 714.3,289.0 715.1,289.0 C716.0,289.0 716.8,289.0 717.6,289.0 C718.5,289.1 719.3,289.1 720.2,289.1 C721.0,289.1 721.8,289.1 722.7,289.1 C723.5,289.1 724.4,289.2 725.2,289.2 C726.0,289.2 726.9,289.2 727.7,289.2 C728.6,289.2 729.4,289.2 730.2,289.2 C731.1,289.3 731.9,289.3 732.8,289.3 C733.6,289.3 734.4,289.3 735.3,289.3 C736.1,289.3 737.0,289.3 737.8,289.4 C738.6,289.4 739.5,289.4 740.3,289.4 C741.2,289.4 742.0,289.4 742.8,289.4 C743.7,289.4 744.5,289.4 745.3,289.5 C746.2,289.5 747.0,289.5 747.9,289.5 C748.7,289.5 749.5,289.5 750.4,289.5 C751.2,289.5 752.1,289.6 752.9,289.6 C753.7,289.6 754.6,289.6 755.4,289.6 C756.2,289.6 757.1,289.6 757.9,289.6 C758.8,289.6 759.6,289.6 760.4,289.7 C761.3,289.7 762.1,289.7 762.9,289.7 C763.8,289.7 764.6,289.7 765.5,289.7 C766.3,289.7 767.1,289.7 768.0,289.8 C768.8,289.8 769.6,289.8 770.5,289.8 C771.3,289.8 772.2,289.8 773.0,289.8 C773.8,289.8 774.7,289.8 775.5,289.8 C776.3,289.8 777.2,289.9 778.0,289.9 C778.9,289.9 779.7,289.9 780.5,289.9 C781.4,289.9 782.2,289.9 783.0,289.9 C783.9,289.9 784.7,289.9 785.6,289.9 C786.4,289.9 787.2,290.0 788.1,290.0 C788.9,290.0 789.7,290.0 790.6,290.0 C791.4,290.0 792.3,290.0 793.1,290.0 C793.9,290.0 794.8,290.0 795.6,290.0 C796.4,290.0 797.3,290.0 798.1,290.0 C799.0,290.0 799.8,290.1 800.6,290.1 C801.5,290.1 802.3,290.1 803.2,290.1 C804.0,290.1 804.8,290.1 805.7,290.1 C806.5,290.1 807.3,290.1 808.2,290.1 C809.0,290.1 809.9,290.1 810.7,290.1 C811.5,290.1 812.4,290.1 813.2,290.1 C814.1,290.1 814.9,290.1 815.7,290.1 C816.6,290.1 817.4,290.1 818.3,290.1 C819.1,290.1 819.9,290.1 820.8,290.2 C821.6,290.2 822.5,290.2 823.3,290.2 C824.1,290.2 825.0,290.2 825.8,290.2 C826.7,290.2 827.5,290.2 828.3,290.2 C829.2,290.2 830.0,290.2 830.9,290.2 C831.7,290.2 832.6,290.2 833.4,290.2 C834.2,290.2 835.1,290.2 835.9,290.2 C836.8,290.2 837.6,290.2 838.4,290.2 C839.3,290.2 840.1,290.2 841.0,290.2 C841.8,290.2 842.7,290.1 843.5,290.1 C844.4,290.1 845.6,290.1 846.0,290.1" stroke="#a8a8a8" stroke-width="1.1" fill="none" stroke-linejoin="round" stroke-linecap="round"/>
<path d="M396.2,353.1 C396.4,352.8 397.0,351.6 397.3,350.9 C397.7,350.1 398.1,349.4 398.5,348.6 C398.8,347.9 399.2,347.1 399.6,346.3 C400.0,345.6 400.3,344.8 400.7,344.1 C401.1,343.3 401.4,342.6 401.8,341.8 C402.2,341.0 402.5,340.3 402.9,339.5 C403.2,338.8 403.6,338.0 404.0,337.2 C404.3,336.5 404.7,335.7 405.0,334.9 C405.4,334.2 405.7,333.4 406.1,332.7 C406.4,331.9 406.8,331.1 407.1,330.4 C407.5,329.6 407.8,328.8 408.2,328.1 C408.5,327.3 408.9,326.5 409.2,325.8 C409.6,325.0 409.9,324.2 410.2,323.5 C410.6,322.7 410.9,321.9 411.3,321.2 C411.6,320.4 411.9,319.6 412.3,318.9 C412.6,318.1 412.9,317.3 413.3,316.6 C413.6,315.8 413.9,315.0 414.3,314.3 C414.6,313.5 414.9,312.7 415.2,311.9 C415.6,311.2 415.9,310.4 416.2,309.6 C416.5,308.9 416.9,308.1 417.2,307.3 C417.5,306.5 417.8,305.8 418.2,305.0 C418.5,304.2 418.8,303.4 419.1,302.7 C419.5,301.9 419.8,301.1 420.1,300.3 C420.4,299.6 420.7,298.8 421.0,298.0 C421.4,297.2 421.7,296.5 422.0,295.7 C422.3,294.9 422.6,294.1 422.9,293.4 C423.2,292.6 423.6,291.8 423.9,291.0 C424.2,290.2 424.5,289.5 424.8,288.7 C425.1,287.9 425.4,287.1 425.7,286.4 C426.0,285.6 426.4,284.8 426.7,284.0 C427.0,283.2 427.3,282.5 427.6,281.7 C427.9,280.9 428.2,280.1 428.5,279.3 C428.8,278.5 429.1,277.8 429.4,277.0 C429.7,276.2 430.0,275.4 430.3,274.6 C430.7,273.8 431.0,273.1 431.3,272.3 C431.6,271.5 431.9,270.7 432.2,269.9 C432.5,269.1 432.8,268.4 433.1,267.6 C433.4,266.8 433.7,266.0 434.0,265.2 C434.3,264.4 434.6,263.6 434.9,262.9 C435.2,262.1 435.5,261.3 435.8,260.5 C436.1,259.7 436.4,258.9 436.7,258.1 C437.0,257.4 437.3,256.6 437.6,255.8 C437.9,255.0 438.2,254.2 438.5,253.4 C438.8,252.6 439.1,251.8 439.4,251.0 C439.7,250.3 440.0,249.5 440.3,248.7 C440.6,247.9 441.0,247.1 441.3,246.3 C441.6,245.5 441.9,244.7 442.2,243.9 C442.5,243.1 442.8,242.4 443.1,241.6 C443.4,240.8 443.7,240.0 444.0,239.2 C444.3,238.4 444.6,237.6 444.9,236.8 C445.2,236.0 445.5,235.2 445.8,234.5 C446.1,233.7 446.4,232.9 446.8,232.1 C447.1,231.3 447.4,230.6 447.7,229.8 C448.0,229.0 448.3,228.2 448.6,227.5 C448.9,226.7 449.3,225.9 449.6,225.2 C449.9,224.4 450.2,223.6 450.5,222.9 C450.9,222.1 451.2,221.4 451.5,220.6 C451.8,219.9 452.2,219.1 452.5,218.4 C452.8,217.7 453.1,216.9 453.5,216.2 C453.8,215.5 454.1,214.7 454.5,214.0 C454.8,213.3 455.2,212.5 455.5,211.8 C455.8,211.0 456.2,210.3 456.5,209.5 C456.9,208.8 457.2,208.0 457.5,207.2 C457.9,206.4 458.2,205.6 458.6,204.7 C458.9,203.9 459.3,203.0 459.6,202.1 C460.0,201.2 460.3,200.3 460.7,199.4 C461.1,198.5 461.5,197.6 462.0,196.7 C462.5,195.9 462.9,195.0 463.5,194.2 C464.0,193.5 464.6,192.8 465.2,192.2 C465.8,191.7 466.4,191.4 467.1,191.2 C467.8,191.0 468.5,190.9 469.1,191.0 C469.8,191.1 470.5,191.3 471.2,191.6 C471.8,191.9 472.5,192.3 473.1,192.8 C473.6,193.3 474.2,193.9 474.7,194.6 C475.2,195.2 475.6,196.0 476.0,196.7 C476.5,197.5 476.8,198.3 477.2,199.2 C477.6,200.0 477.9,200.9 478.3,201.8 C478.6,202.7 478.9,203.6 479.2,204.5 C479.5,205.4 479.9,206.3 480.2,207.1 C480.5,208.0 480.8,208.9 481.1,209.7 C481.4,210.5 481.8,211.4 482.1,212.2 C482.4,213.0 482.7,213.8 483.0,214.6 C483.3,215.4 483.7,216.2 484.0,217.0 C484.3,217.8 484.6,218.5 484.9,219.3 C485.2,220.1 485.6,220.8 485.9,221.6 C486.2,222.3 486.5,223.1 486.8,223.8 C487.2,224.6 487.5,225.3 487.8,226.1 C488.1,226.8 488.4,227.6 488.8,228.3 C489.1,229.1 489.4,229.8 489.7,230.6 C490.1,231.3 490.4,232.1 490.7,232.8 C491.0,233.6 491.4,234.3 491.7,235.1 C492.0,235.8 492.3,236.6 492.7,237.3 C493.0,238.1 493.3,238.9 493.7,239.6 C494.0,240.4 494.3,241.1 494.6,241.9 C495.0,242.7 495.3,243.4 495.6,244.2 C496.0,245.0 496.3,245.7 496.6,246.5 C497.0,247.3 497.3,248.0 497.6,248.8 C498.0,249.6 498.3,250.3 498.6,251.1 C499.0,251.9 499.3,252.6 499.6,253.4 C500.0,254.2 500.3,254.9 500.7,255.7 C501.0,256.5 501.3,257.3 501.7,258.0 C502.0,258.8 502.3,259.6 502.7,260.4 C503.0,261.1 503.4,261.9 503.7,262.7 C504.0,263.5 504.4,264.2 504.7,265.0 C505.1,265.8 505.4,266.6 505.8,267.3 C506.1,268.1 506.4,268.9 506.8,269.7 C507.1,270.4 507.5,271.2 507.8,272.0 C508.1,272.8 508.5,273.5 508.8,274.3 C509.2,275.1 509.5,275.9 509.9,276.6 C510.2,277.4 510.6,278.2 510.9,279.0 C511.2,279.7 511.6,280.5 511.9,281.3 C512.3,282.1 512.6,282.8 513.0,283.6 C513.3,284.4 513.7,285.1 514.0,285.9 C514.4,286.7 514.7,287.5 515.1,288.2 C515.4,289.0 515.8,289.8 516.1,290.5 C516.4,291.3 516.8,292.1 517.1,292.8 C517.5,293.6 517.8,294.4 518.2,295.1 C518.5,295.9 518.9,296.7 519.2,297.4 C519.6,298.2 519.9,299.0 520.3,299.7 C520.6,300.5 521.0,301.3 521.3,302.0 C521.7,302.8 522.0,303.6 522.4,304.3 C522.7,305.1 523.1,305.9 523.4,306.6 C523.8,307.4 524.1,308.1 524.5,308.9 C524.8,309.7 525.2,310.4 525.5,311.2 C525.9,312.0 526.2,312.7 526.6,313.5 C526.9,314.2 527.2,315.0 527.6,315.8 C527.9,316.5 528.3,317.3 528.6,318.1 C529.0,318.8 529.3,319.6 529.7,320.3 C530.0,321.1 530.4,321.9 530.7,322.6 C531.1,323.4 531.4,324.2 531.8,324.9 C532.1,325.7 532.5,326.4 532.8,327.2 C533.1,328.0 533.5,328.7 533.8,329.5 C534.2,330.2 534.5,331.0 534.9,331.8 C535.2,332.5 535.6,333.3 535.9,334.1 C536.2,334.8 536.6,335.6 536.9,336.4 C537.3,337.1 537.6,337.9 538.0,338.6 C538.3,339.4 538.6,340.2 539.0,340.9 C539.3,341.7 539.7,342.5 540.0,343.2 C540.3,344.0 540.7,344.8 541.0,345.5 C541.4,346.3 541.7,347.1 542.0,347.8 C542.4,348.6 542.7,349.4 543.1,350.1 C543.4,350.9 543.7,351.7 544.1,352.4 C544.4,353.2 544.7,354.0 545.1,354.8 C545.4,355.5 545.7,356.3 546.1,357.1 C546.4,357.8 546.8,358.6 547.1,359.4 C547.4,360.1 547.8,360.9 548.1,361.7 C548.4,362.5 548.8,363.2 549.1,364.0 C549.4,364.8 549.8,365.5 550.1,366.3 C550.4,367.1 550.8,367.9 551.1,368.6 C551.4,369.4 551.7,370.2 552.1,371.0 C552.4,371.7 552.7,372.5 553.1,373.3 C553.4,374.0 553.7,374.8 554.1,375.6 C554.4,376.4 554.7,377.1 555.1,377.9 C555.4,378.7 555.7,379.5 556.0,380.2 C556.4,381.0 556.7,381.8 557.0,382.6 C557.4,383.3 557.7,384.1 558.0,384.9 C558.4,385.7 558.7,386.4 559.0,387.2 C559.3,388.0 559.7,388.8 560.0,389.5 C560.3,390.3 560.7,391.1 561.0,391.8 C561.3,392.6 561.6,393.4 562.0,394.2 C562.3,394.9 562.6,395.7 563.0,396.5 C563.3,397.3 563.6,398.0 564.0,398.8 C564.3,399.6 564.6,400.4 564.9,401.1 C565.3,401.9 565.6,402.7 565.9,403.5 C566.3,404.2 566.6,405.0 566.9,405.8 C567.2,406.6 567.6,407.3 567.9,408.1 C568.2,408.9 568.6,409.7 568.9,410.4 C569.2,411.2 569.6,412.0 569.9,412.8 C570.2,413.5 570.5,414.3 570.9,415.1 C571.2,415.8 571.5,416.6 571.9,417.4 C572.2,418.2 572.5,418.9 572.9,419.7 C573.2,420.5 573.5,421.3 573.9,422.0 C574.2,422.8 574.5,423.6 574.9,424.3 C575.2,425.1 575.5,425.9 575.9,426.7 C576.2,427.4 576.5,428.2 576.9,429.0 C577.2,429.7 577.5,430.5 577.9,431.3 C578.2,432.0 578.5,432.8 578.9,433.6 C579.2,434.4 579.5,435.1 579.9,435.9 C580.2,436.7 580.5,437.4 580.9,438.2 C581.2,439.0 581.5,439.7 581.9,440.5 C582.2,441.3 582.6,442.0 582.9,442.8 C583.2,443.6 583.6,444.3 583.9,445.1 C584.3,445.9 584.6,446.6 584.9,447.4 C585.3,448.2 585.6,448.9 586.0,449.7 C586.3,450.5 586.8,451.6 587.0,452.0" stroke="#e60000" stroke-width="1.2" fill="none" stroke-linejoin="round" stroke-linecap="round"/>
<path d="M395.9,359.9 C396.2,359.6 396.8,358.5 397.2,357.8 C397.6,357.1 398.1,356.3 398.5,355.6 C398.9,354.9 399.3,354.2 399.7,353.4 C400.1,352.7 400.5,352.0 400.9,351.3 C401.3,350.5 401.7,349.8 402.1,349.0 C402.5,348.3 402.9,347.6 403.3,346.8 C403.7,346.1 404.0,345.3 404.4,344.6 C404.8,343.9 405.2,343.1 405.6,342.4 C406.0,341.6 406.3,340.9 406.7,340.1 C407.1,339.4 407.5,338.6 407.8,337.9 C408.2,337.1 408.6,336.4 409.0,335.6 C409.3,334.9 409.7,334.1 410.1,333.4 C410.5,332.6 410.8,331.8 411.2,331.1 C411.6,330.3 411.9,329.6 412.3,328.8 C412.7,328.1 413.0,327.3 413.4,326.6 C413.8,325.8 414.2,325.0 414.5,324.3 C414.9,323.5 415.3,322.8 415.6,322.0 C416.0,321.3 416.4,320.5 416.8,319.8 C417.1,319.0 417.5,318.3 417.9,317.5 C418.3,316.8 418.6,316.0 419.0,315.3 C419.4,314.5 419.8,313.8 420.2,313.0 C420.6,312.3 420.9,311.5 421.3,310.8 C421.7,310.0 422.1,309.3 422.5,308.6 C422.9,307.8 423.3,307.1 423.7,306.4 C424.1,305.6 424.5,304.9 424.9,304.2 C425.3,303.4 425.7,302.7 426.1,302.0 C426.5,301.2 426.9,300.5 427.3,299.8 C427.8,299.1 428.2,298.3 428.6,297.6 C429.0,296.9 429.5,296.2 429.9,295.5 C430.3,294.8 430.8,294.1 431.2,293.4 C431.7,292.7 432.1,292.0 432.6,291.3 C433.0,290.6 433.5,289.9 433.9,289.2 C434.4,288.5 434.9,287.8 435.3,287.1 C435.8,286.4 436.3,285.8 436.8,285.1 C437.2,284.4 437.7,283.7 438.2,283.1 C438.7,282.4 439.2,281.7 439.8,281.1 C440.3,280.4 440.9,279.8 441.4,279.1 C442.0,278.5 442.6,277.8 443.2,277.2 C443.9,276.5 444.5,275.9 445.2,275.3 C445.9,274.7 446.6,274.1 447.3,273.6 C448.0,273.2 448.8,272.8 449.5,272.6 C450.2,272.4 450.9,272.3 451.6,272.4 C452.3,272.5 453.0,272.9 453.6,273.3 C454.2,273.8 454.8,274.5 455.4,275.1 C456.0,275.8 456.5,276.6 457.0,277.4 C457.5,278.2 457.9,279.0 458.3,279.8 C458.7,280.6 459.0,281.4 459.4,282.1 C459.7,282.9 459.9,283.7 460.2,284.5 C460.5,285.2 460.7,286.0 460.9,286.8 C461.1,287.6 461.3,288.3 461.6,289.1 C461.8,289.9 462.0,290.7 462.2,291.5 C462.4,292.3 462.6,293.1 462.8,293.9 C463.0,294.8 463.1,295.6 463.3,296.4 C463.5,297.2 463.7,298.0 463.8,298.9 C464.0,299.7 464.2,300.5 464.3,301.4 C464.5,302.2 464.6,303.0 464.7,303.9 C464.9,304.7 465.0,305.5 465.1,306.4 C465.3,307.2 465.4,308.0 465.5,308.9 C465.6,309.7 465.7,310.5 465.8,311.4 C465.9,312.2 466.0,313.1 466.0,313.9 C466.1,314.7 466.2,315.6 466.2,316.4 C466.3,317.2 466.4,318.1 466.4,318.9 C466.5,319.7 466.5,320.6 466.6,321.4 C466.6,322.2 466.7,323.1 466.7,323.9 C466.8,324.7 466.8,325.6 466.9,326.4 C466.9,327.2 466.9,328.1 467.0,328.9 C467.0,329.7 467.1,330.6 467.1,331.4 C467.1,332.2 467.2,333.1 467.2,333.9 C467.3,334.7 467.3,335.6 467.3,336.4 C467.4,337.2 467.4,338.1 467.5,338.9 C467.6,339.7 467.6,340.6 467.7,341.4 C467.7,342.2 467.8,343.1 467.9,343.9 C468.0,344.7 468.0,345.5 468.1,346.4 C468.2,347.3 468.3,348.1 468.4,349.1 C468.5,350.1 468.6,351.2 468.7,352.2 C468.8,353.2 468.9,354.4 469.0,355.3 C469.1,356.1 469.2,357.0 469.3,357.3 C469.4,357.6 469.5,357.6 469.6,357.3 C469.7,356.9 469.8,356.1 469.9,355.2 C470.0,354.4 470.1,353.2 470.2,352.2 C470.3,351.1 470.4,350.1 470.5,349.1 C470.6,348.1 470.7,347.2 470.7,346.2 C470.8,345.3 470.8,344.5 470.9,343.6 C470.9,342.8 471.0,341.9 471.0,341.1 C471.1,340.3 471.1,339.5 471.1,338.6 C471.2,337.8 471.2,337.0 471.3,336.2 C471.3,335.3 471.4,334.5 471.5,333.7 C471.5,332.9 471.6,332.0 471.6,331.2 C471.7,330.4 471.7,329.5 471.8,328.7 C471.9,327.9 471.9,327.1 472.0,326.2 C472.1,325.4 472.1,324.6 472.2,323.7 C472.3,322.9 472.4,322.1 472.4,321.2 C472.5,320.4 472.6,319.6 472.7,318.7 C472.7,317.9 472.8,317.1 472.9,316.2 C473.0,315.4 473.1,314.6 473.2,313.7 C473.2,312.9 473.3,312.0 473.4,311.2 C473.5,310.4 473.6,309.5 473.7,308.7 C473.8,307.9 473.9,307.0 473.9,306.2 C474.0,305.4 474.1,304.5 474.2,303.7 C474.3,302.9 474.4,302.0 474.5,301.2 C474.6,300.4 474.7,299.5 474.8,298.7 C474.9,297.8 475.0,297.0 475.1,296.2 C475.2,295.3 475.3,294.5 475.4,293.7 C475.5,292.8 475.6,292.0 475.7,291.2 C475.8,290.3 475.9,289.5 476.0,288.7 C476.1,287.8 476.2,287.0 476.3,286.2 C476.4,285.4 476.5,284.5 476.6,283.7 C476.7,282.9 476.8,282.0 476.9,281.2 C477.1,280.4 477.2,279.5 477.3,278.7 C477.4,277.9 477.5,277.1 477.6,276.2 C477.8,275.4 477.9,274.6 478.0,273.8 C478.1,272.9 478.3,272.1 478.4,271.3 C478.5,270.5 478.7,269.6 478.8,268.8 C478.9,268.0 479.1,267.2 479.2,266.3 C479.4,265.5 479.5,264.7 479.7,263.9 C479.8,263.0 480.0,262.2 480.1,261.4 C480.3,260.6 480.5,259.8 480.6,258.9 C480.8,258.1 481.0,257.3 481.1,256.5 C481.3,255.7 481.5,254.8 481.7,254.0 C481.9,253.2 482.1,252.4 482.3,251.6 C482.5,250.8 482.7,249.9 482.9,249.1 C483.1,248.3 483.3,247.5 483.5,246.7 C483.7,245.9 483.9,245.1 484.2,244.2 C484.4,243.4 484.6,242.6 484.9,241.8 C485.1,241.0 485.4,240.2 485.6,239.4 C485.9,238.6 486.2,237.8 486.4,237.0 C486.7,236.2 487.0,235.4 487.3,234.7 C487.6,233.9 487.9,233.1 488.2,232.3 C488.5,231.5 488.8,230.8 489.1,230.0 C489.5,229.2 489.8,228.4 490.1,227.7 C490.5,226.9 490.8,226.2 491.2,225.4 C491.5,224.7 491.9,223.9 492.3,223.2 C492.7,222.4 493.1,221.7 493.5,221.0 C493.9,220.3 494.3,219.5 494.7,218.8 C495.1,218.1 495.6,217.4 496.0,216.7 C496.5,216.0 496.9,215.3 497.4,214.6 C497.9,213.9 498.4,213.3 498.8,212.6 C499.3,211.9 499.8,211.3 500.4,210.6 C500.9,209.9 501.4,209.3 502.0,208.7 C502.5,208.0 503.1,207.4 503.6,206.8 C504.2,206.2 504.8,205.6 505.4,205.0 C506.0,204.4 506.6,203.8 507.2,203.2 C507.8,202.6 508.4,202.1 509.0,201.5 C509.7,200.9 510.3,200.4 511.0,199.9 C511.6,199.3 512.3,198.8 512.9,198.3 C513.6,197.8 514.3,197.3 515.0,196.8 C515.7,196.3 516.4,195.8 517.1,195.4 C517.8,194.9 518.5,194.5 519.2,194.0 C519.9,193.6 520.7,193.2 521.4,192.8 C522.1,192.3 522.9,191.9 523.6,191.5 C524.4,191.2 525.1,190.8 525.9,190.4 C526.6,190.0 527.4,189.7 528.2,189.4 C528.9,189.0 529.7,188.7 530.5,188.4 C531.2,188.0 532.0,187.7 532.8,187.4 C533.6,187.1 534.4,186.9 535.2,186.6 C536.0,186.3 536.7,186.1 537.5,185.8 C538.3,185.5 539.1,185.3 539.9,185.1 C540.7,184.8 541.5,184.6 542.3,184.4 C543.1,184.2 543.9,184.0 544.8,183.8 C545.6,183.6 546.4,183.4 547.2,183.2 C548.0,183.0 548.8,182.9 549.6,182.7 C550.5,182.6 551.3,182.4 552.1,182.2 C552.9,182.1 553.7,182.0 554.6,181.8 C555.4,181.7 556.2,181.6 557.0,181.4 C557.9,181.3 558.7,181.2 559.5,181.1 C560.4,181.0 561.2,180.9 562.0,180.8 C562.9,180.6 563.7,180.6 564.5,180.5 C565.4,180.4 566.2,180.3 567.0,180.2 C567.9,180.1 568.7,180.0 569.5,179.9 C570.4,179.9 571.2,179.8 572.0,179.7 C572.9,179.6 573.7,179.6 574.6,179.5 C575.4,179.4 576.2,179.4 577.1,179.3 C577.9,179.2 578.7,179.2 579.6,179.1 C580.4,179.1 581.2,179.0 582.1,178.9 C582.9,178.9 583.8,178.8 584.6,178.8 C585.4,178.7 586.3,178.7 587.1,178.6 C587.9,178.6 588.8,178.5 589.6,178.5 C590.5,178.4 591.3,178.4 592.1,178.3 C593.0,178.3 593.8,178.3 594.6,178.2 C595.5,178.2 596.3,178.1 597.2,178.1 C598.0,178.1 598.8,178.0 599.7,178.0 C600.5,178.0 601.3,177.9 602.2,177.9 C603.0,177.9 603.9,177.8 604.7,177.8 C605.5,177.8 606.4,177.8 607.2,177.7 C608.0,177.7 608.9,177.7 609.7,177.7 C610.6,177.6 611.4,177.6 612.2,177.6 C613.1,177.6 613.9,177.6 614.7,177.5 C615.6,177.5 616.4,177.5 617.3,177.5 C618.1,177.5 618.9,177.5 619.8,177.4 C620.6,177.4 621.4,177.4 622.3,177.4 C623.1,177.4 624.0,177.4 624.8,177.4 C625.6,177.4 626.5,177.4 627.3,177.3 C628.1,177.3 629.0,177.3 629.8,177.3 C630.7,177.3 631.5,177.3 632.3,177.3 C633.2,177.3 634.0,177.3 634.8,177.3 C635.7,177.3 636.5,177.3 637.4,177.3 C638.2,177.3 639.0,177.3 639.9,177.3 C640.7,177.3 641.5,177.3 642.4,177.3 C643.2,177.3 644.1,177.3 644.9,177.3 C645.7,177.3 646.6,177.3 647.4,177.3 C648.2,177.3 649.1,177.3 649.9,177.3 C650.8,177.3 651.6,177.3 652.4,177.3 C653.3,177.3 654.1,177.3 655.0,177.3 C655.8,177.3 656.6,177.3 657.5,177.3 C658.3,177.3 659.1,177.3 660.0,177.3 C660.8,177.3 661.7,177.3 662.5,177.3 C663.3,177.3 664.2,177.3 665.0,177.3 C665.8,177.3 666.7,177.3 667.5,177.3 C668.4,177.3 669.2,177.3 670.0,177.3 C670.9,177.3 671.7,177.3 672.5,177.3 C673.4,177.3 674.2,177.3 675.1,177.3 C675.9,177.3 676.7,177.3 677.6,177.3 C678.4,177.3 679.2,177.3 680.1,177.3 C680.9,177.3 681.8,177.3 682.6,177.3 C683.4,177.3 684.3,177.3 685.1,177.3 C686.0,177.3 686.8,177.3 687.6,177.3 C688.5,177.3 689.3,177.3 690.1,177.3 C691.0,177.3 691.8,177.3 692.7,177.3 C693.5,177.3 694.3,177.3 695.2,177.3 C696.0,177.3 696.8,177.3 697.7,177.3 C698.5,177.3 699.4,177.3 700.2,177.3 C701.0,177.3 701.9,177.3 702.7,177.3 C703.5,177.3 704.4,177.3 705.2,177.3 C706.1,177.3 706.9,177.3 707.7,177.3 C708.6,177.3 709.4,177.3 710.3,177.3 C711.1,177.3 711.9,177.3 712.8,177.3 C713.6,177.3 714.4,177.3 715.3,177.3 C716.1,177.3 717.0,177.3 717.8,177.3 C718.6,177.3 719.5,177.3 720.3,177.2 C721.1,177.2 722.0,177.2 722.8,177.2 C723.7,177.2 724.5,177.2 725.3,177.2 C726.2,177.2 727.0,177.2 727.9,177.2 C728.7,177.2 729.5,177.2 730.4,177.2 C731.2,177.2 732.0,177.2 732.9,177.2 C733.7,177.2 734.6,177.2 735.4,177.2 C736.2,177.2 737.1,177.2 737.9,177.2 C738.7,177.2 739.6,177.2 740.4,177.2 C741.3,177.2 742.1,177.2 742.9,177.2 C743.8,177.2 744.6,177.2 745.4,177.2 C746.3,177.2 747.1,177.2 748.0,177.2 C748.8,177.2 749.6,177.2 750.5,177.2 C751.3,177.2 752.2,177.2 753.0,177.2 C753.8,177.2 754.7,177.2 755.5,177.2 C756.3,177.2 757.2,177.2 758.0,177.2 C758.9,177.2 759.7,177.2 760.5,177.2 C761.4,177.2 762.2,177.2 763.0,177.2 C763.9,177.2 764.7,177.2 765.6,177.2 C766.4,177.2 767.2,177.2 768.1,177.2 C768.9,177.2 769.7,177.2 770.6,177.2 C771.4,177.2 772.3,177.2 773.1,177.2 C773.9,177.2 774.8,177.2 775.6,177.2 C776.5,177.2 777.3,177.2 778.1,177.2 C779.0,177.2 779.8,177.2 780.6,177.2 C781.5,177.2 782.3,177.2 783.2,177.2 C784.0,177.2 784.8,177.2 785.7,177.2 C786.5,177.2 787.3,177.2 788.2,177.2 C789.0,177.2 789.9,177.2 790.7,177.2 C791.5,177.2 792.4,177.2 793.2,177.2 C794.1,177.2 794.9,177.2 795.7,177.2 C796.6,177.2 797.4,177.2 798.2,177.2 C799.1,177.2 799.9,177.2 800.8,177.2 C801.6,177.2 802.4,177.2 803.3,177.2 C804.1,177.2 804.9,177.2 805.8,177.2 C806.6,177.2 807.5,177.2 808.3,177.2 C809.1,177.2 810.0,177.2 810.8,177.2 C811.6,177.2 812.5,177.2 813.3,177.2 C814.2,177.2 815.0,177.2 815.8,177.2 C816.7,177.2 817.5,177.2 818.3,177.2 C819.2,177.2 820.0,177.2 820.9,177.2 C821.7,177.2 822.5,177.2 823.4,177.2 C824.2,177.2 825.1,177.2 825.9,177.2 C826.7,177.2 827.6,177.2 828.4,177.2 C829.2,177.2 830.1,177.2 830.9,177.2 C831.8,177.2 832.6,177.2 833.4,177.2 C834.3,177.2 835.1,177.2 835.9,177.2 C836.8,177.2 837.6,177.2 838.5,177.2 C839.3,177.2 840.1,177.2 841.0,177.2 C841.8,177.2 842.6,177.2 843.5,177.2 C844.3,177.2 845.6,177.2 846.0,177.2" stroke="#0000cd" stroke-width="1.2" fill="none" stroke-linejoin="round" stroke-linecap="round"/>
<path d="M429.3,452.0 C429.4,451.4 428.8,455.9 430.1,448.6 C431.4,441.3 435.0,421.5 437.2,408.3 C439.4,395.1 441.3,383.3 443.5,369.4 C445.7,355.5 448.7,338.1 450.5,325.0 C452.3,311.9 452.8,302.8 454.1,290.5 C455.4,278.2 457.2,261.4 458.3,251.3 C459.4,241.2 460.0,238.6 460.8,230.0 C461.6,221.4 462.4,210.0 463.0,200.0 C463.6,190.0 463.9,180.0 464.2,170.0 C464.5,160.0 464.5,147.0 464.6,140.0 C464.7,133.0 464.7,130.0 464.7,128.0" stroke="#4cdcd2" stroke-width="1.2" fill="none" stroke-linejoin="round" stroke-linecap="round"/>
<path d="M464.8,178.0 C464.9,175.0 465.2,165.5 465.6,160.0 C466.0,154.5 466.6,149.0 467.2,145.0 C467.8,141.0 468.4,136.9 468.9,136.2 C469.4,135.5 469.9,141.0 470.4,141.0 C470.9,141.0 471.4,136.4 471.9,136.2 C472.4,136.0 472.6,137.0 473.4,140.0 C474.2,143.0 475.2,147.9 476.5,154.0 C477.8,160.1 479.7,171.3 481.0,176.5 C482.3,181.7 482.9,182.8 484.3,185.0 C485.7,187.2 487.7,189.0 489.1,189.7 C490.5,190.4 491.3,190.0 492.7,189.1 C494.1,188.2 495.5,186.5 497.5,184.3 C499.5,182.1 502.0,179.6 504.8,175.8 C507.6,172.0 511.6,166.0 514.4,161.4 C517.2,156.8 519.1,152.5 521.7,148.1 C524.3,143.7 528.5,137.8 530.0,134.8 C531.5,131.8 530.8,130.8 531.0,130.0" stroke="#4cdcd2" stroke-width="1.2" fill="none" stroke-linejoin="round" stroke-linecap="round"/>
<path d="M412.3,452.0 C412.4,451.6 412.7,450.3 412.8,449.5 C413.0,448.7 413.2,447.9 413.3,447.1 C413.5,446.3 413.6,445.4 413.8,444.6 C414.0,443.8 414.1,443.0 414.3,442.2 C414.5,441.4 414.6,440.5 414.8,439.7 C414.9,438.9 415.1,438.1 415.3,437.3 C415.4,436.4 415.6,435.6 415.8,434.8 C415.9,434.0 416.1,433.2 416.3,432.4 C416.4,431.5 416.6,430.7 416.8,429.9 C416.9,429.1 417.1,428.3 417.3,427.4 C417.4,426.6 417.6,425.8 417.8,425.0 C417.9,424.2 418.1,423.3 418.3,422.5 C418.4,421.7 418.6,420.9 418.8,420.1 C419.0,419.3 419.1,418.4 419.3,417.6 C419.5,416.8 419.6,416.0 419.8,415.2 C420.0,414.3 420.2,413.5 420.3,412.7 C420.5,411.9 420.7,411.1 420.8,410.2 C421.0,409.4 421.2,408.6 421.4,407.8 C421.5,407.0 421.7,406.1 421.9,405.3 C422.0,404.5 422.2,403.7 422.4,402.9 C422.6,402.0 422.7,401.2 422.9,400.4 C423.1,399.6 423.3,398.8 423.4,397.9 C423.6,397.1 423.8,396.3 424.0,395.5 C424.1,394.7 424.3,393.8 424.5,393.0 C424.6,392.2 424.8,391.4 425.0,390.6 C425.2,389.7 425.3,388.9 425.5,388.1 C425.7,387.3 425.9,386.5 426.0,385.6 C426.2,384.8 426.4,384.0 426.6,383.2 C426.7,382.3 426.9,381.5 427.1,380.7 C427.3,379.9 427.5,379.1 427.6,378.2 C427.8,377.4 428.0,376.6 428.2,375.8 C428.3,375.0 428.5,374.1 428.7,373.3 C428.9,372.5 429.0,371.7 429.2,370.9 C429.4,370.0 429.6,369.2 429.7,368.4 C429.9,367.6 430.1,366.8 430.3,365.9 C430.4,365.1 430.6,364.3 430.8,363.5 C431.0,362.6 431.1,361.8 431.3,361.0 C431.5,360.2 431.7,359.4 431.9,358.5 C432.0,357.7 432.2,356.9 432.4,356.1 C432.6,355.3 432.7,354.4 432.9,353.6 C433.1,352.8 433.3,352.0 433.4,351.2 C433.6,350.3 433.8,349.5 434.0,348.7 C434.1,347.9 434.3,347.1 434.5,346.2 C434.7,345.4 434.8,344.6 435.0,343.8 C435.2,343.0 435.4,342.1 435.5,341.3 C435.7,340.5 435.9,339.7 436.1,338.9 C436.2,338.0 436.4,337.2 436.6,336.4 C436.8,335.6 436.9,334.8 437.1,333.9 C437.3,333.1 437.5,332.3 437.6,331.5 C437.8,330.7 438.0,329.8 438.2,329.0 C438.3,328.2 438.5,327.4 438.7,326.6 C438.9,325.7 439.0,324.9 439.2,324.1 C439.4,323.3 439.6,322.5 439.7,321.6 C439.9,320.8 440.1,320.0 440.2,319.2 C440.4,318.4 440.6,317.5 440.8,316.7 C440.9,315.9 441.1,315.1 441.3,314.3 C441.5,313.4 441.6,312.6 441.8,311.8 C442.0,311.0 442.1,310.2 442.3,309.3 C442.5,308.5 442.6,307.7 442.8,306.9 C443.0,306.1 443.2,305.3 443.3,304.4 C443.5,303.6 443.7,302.8 443.8,302.0 C444.0,301.2 444.2,300.3 444.3,299.5 C444.5,298.7 444.7,297.9 444.8,297.1 C445.0,296.3 445.2,295.4 445.3,294.6 C445.5,293.8 445.7,293.0 445.8,292.2 C446.0,291.4 446.2,290.5 446.3,289.7 C446.5,288.9 446.7,288.1 446.8,287.3 C447.0,286.5 447.2,285.6 447.3,284.8 C447.5,284.0 447.7,283.2 447.8,282.4 C448.0,281.6 448.1,280.7 448.3,279.9 C448.5,279.1 448.6,278.3 448.8,277.5 C449.0,276.7 449.1,275.8 449.3,275.0 C449.4,274.2 449.6,273.4 449.8,272.6 C449.9,271.8 450.1,270.9 450.2,270.1 C450.4,269.3 450.6,268.5 450.7,267.7 C450.9,266.9 451.0,266.0 451.2,265.2 C451.4,264.4 451.5,263.6 451.7,262.8 C451.8,261.9 452.0,261.1 452.2,260.3 C452.3,259.5 452.5,258.7 452.6,257.9 C452.8,257.0 452.9,256.2 453.1,255.4 C453.3,254.6 453.4,253.8 453.6,252.9 C453.7,252.1 453.9,251.3 454.0,250.5 C454.2,249.7 454.4,248.8 454.5,248.0 C454.7,247.2 454.8,246.4 455.0,245.5 C455.1,244.7 455.3,243.9 455.4,243.1 C455.6,242.2 455.8,241.4 455.9,240.6 C456.1,239.8 456.2,238.9 456.4,238.1 C456.5,237.3 456.7,236.5 456.8,235.6 C457.0,234.8 457.2,234.0 457.3,233.2 C457.5,232.3 457.6,231.5 457.8,230.7 C457.9,229.8 458.1,229.0 458.2,228.2 C458.4,227.3 458.6,226.5 458.7,225.7 C458.9,224.9 459.0,224.0 459.2,223.2 C459.3,222.4 459.5,221.5 459.6,220.7 C459.8,219.8 459.9,219.0 460.1,218.2 C460.3,217.3 460.4,216.5 460.6,215.7 C460.7,214.8 460.9,214.0 461.0,213.1 C461.2,212.3 461.3,211.4 461.5,210.6 C461.7,209.8 461.8,208.9 462.0,208.1 C462.1,207.2 462.3,206.4 462.4,205.5 C462.6,204.7 462.8,203.8 462.9,203.0 C463.1,202.2 463.3,201.3 463.5,200.5 C463.7,199.7 463.9,198.9 464.1,198.1 C464.3,197.2 464.6,196.4 464.8,195.7 C465.1,194.9 465.4,194.1 465.7,193.4 C466.0,192.6 466.4,191.9 466.7,191.2 C467.1,190.4 467.5,189.7 468.0,189.1 C468.4,188.4 468.9,187.8 469.4,187.1 C469.9,186.5 470.5,185.9 471.0,185.4 C471.6,184.8 472.2,184.3 472.9,183.8 C473.5,183.3 474.2,182.9 474.9,182.5 C475.5,182.1 476.3,181.7 477.0,181.4 C477.7,181.1 478.5,180.9 479.3,180.7 C480.0,180.5 480.8,180.3 481.6,180.2 C482.4,180.1 483.2,180.0 484.1,180.0 C484.9,179.9 485.7,179.9 486.6,180.0 C487.4,180.0 488.3,180.0 489.1,180.0 C490.0,180.1 490.8,180.2 491.7,180.2 C492.6,180.3 493.4,180.3 494.3,180.4 C495.2,180.5 496.0,180.5 496.9,180.6 C497.7,180.6 498.6,180.6 499.4,180.7 C500.3,180.7 501.1,180.7 502.0,180.7 C502.8,180.7 503.7,180.7 504.5,180.7 C505.3,180.6 506.2,180.6 507.0,180.6 C507.8,180.6 508.7,180.5 509.5,180.5 C510.3,180.5 511.2,180.4 512.0,180.4 C512.8,180.4 513.6,180.3 514.5,180.3 C515.3,180.3 516.1,180.2 517.0,180.2 C517.8,180.1 518.6,180.1 519.5,180.1 C520.3,180.0 521.1,180.0 522.0,180.0 C522.8,179.9 523.6,179.9 524.5,179.9 C525.3,179.8 526.1,179.8 527.0,179.8 C527.8,179.7 528.6,179.7 529.5,179.7 C530.3,179.6 531.1,179.6 532.0,179.6 C532.8,179.5 533.6,179.5 534.5,179.5 C535.3,179.4 536.2,179.4 537.0,179.4 C537.8,179.3 538.7,179.3 539.5,179.3 C540.3,179.2 541.2,179.2 542.0,179.2 C542.8,179.2 543.7,179.1 544.5,179.1 C545.3,179.1 546.2,179.0 547.0,179.0 C547.9,179.0 548.7,178.9 549.5,178.9 C550.4,178.9 551.2,178.8 552.0,178.8 C552.9,178.8 553.7,178.8 554.6,178.7 C555.4,178.7 556.2,178.7 557.1,178.6 C557.9,178.6 558.7,178.6 559.6,178.6 C560.4,178.5 561.2,178.5 562.1,178.5 C562.9,178.5 563.8,178.4 564.6,178.4 C565.4,178.4 566.3,178.4 567.1,178.3 C568.0,178.3 568.8,178.3 569.6,178.3 C570.5,178.2 571.3,178.2 572.1,178.2 C573.0,178.2 573.8,178.1 574.7,178.1 C575.5,178.1 576.3,178.1 577.2,178.0 C578.0,178.0 578.8,178.0 579.7,178.0 C580.5,178.0 581.4,177.9 582.2,177.9 C583.0,177.9 583.9,177.9 584.7,177.9 C585.5,177.8 586.4,177.8 587.2,177.8 C588.1,177.8 588.9,177.8 589.7,177.7 C590.6,177.7 591.4,177.7 592.3,177.7 C593.1,177.7 593.9,177.7 594.8,177.7 C595.6,177.6 596.4,177.6 597.3,177.6 C598.1,177.6 599.0,177.6 599.8,177.6 C600.6,177.6 601.5,177.5 602.3,177.5 C603.1,177.5 604.0,177.5 604.8,177.5 C605.7,177.5 606.5,177.5 607.3,177.5 C608.2,177.5 609.0,177.4 609.8,177.4 C610.7,177.4 611.5,177.4 612.4,177.4 C613.2,177.4 614.0,177.4 614.9,177.4 C615.7,177.4 616.5,177.4 617.4,177.4 C618.2,177.4 619.1,177.4 619.9,177.3 C620.7,177.3 621.6,177.3 622.4,177.3 C623.2,177.3 624.1,177.3 624.9,177.3 C625.8,177.3 626.6,177.3 627.4,177.3 C628.3,177.3 629.1,177.3 629.9,177.3 C630.8,177.3 631.6,177.3 632.5,177.3 C633.3,177.3 634.1,177.3 635.0,177.3 C635.8,177.3 636.6,177.3 637.5,177.3 C638.3,177.3 639.2,177.3 640.0,177.3 C640.8,177.3 641.7,177.3 642.5,177.3 C643.3,177.3 644.2,177.3 645.0,177.3 C645.9,177.3 646.7,177.3 647.5,177.3 C648.4,177.3 649.2,177.3 650.0,177.3 C650.9,177.3 651.7,177.3 652.6,177.3 C653.4,177.3 654.2,177.3 655.1,177.3 C655.9,177.3 656.7,177.3 657.6,177.3 C658.4,177.3 659.2,177.3 660.1,177.3 C660.9,177.3 661.8,177.3 662.6,177.3 C663.4,177.3 664.3,177.3 665.1,177.3 C665.9,177.3 666.8,177.3 667.6,177.3 C668.5,177.3 669.3,177.3 670.1,177.3 C671.0,177.3 671.8,177.3 672.6,177.3 C673.5,177.3 674.3,177.3 675.2,177.3 C676.0,177.3 676.8,177.3 677.7,177.3 C678.5,177.3 679.3,177.3 680.2,177.3 C681.0,177.3 681.9,177.3 682.7,177.3 C683.5,177.3 684.4,177.3 685.2,177.3 C686.0,177.3 686.9,177.3 687.7,177.3 C688.6,177.3 689.4,177.3 690.2,177.3 C691.1,177.3 691.9,177.3 692.7,177.3 C693.6,177.3 694.4,177.3 695.3,177.3 C696.1,177.3 696.9,177.3 697.8,177.3 C698.6,177.3 699.4,177.3 700.3,177.3 C701.1,177.3 701.9,177.3 702.8,177.3 C703.6,177.3 704.5,177.3 705.3,177.3 C706.1,177.3 707.0,177.3 707.8,177.3 C708.6,177.2 709.5,177.2 710.3,177.2 C711.2,177.2 712.0,177.2 712.8,177.2 C713.7,177.2 714.5,177.2 715.3,177.2 C716.2,177.2 717.0,177.2 717.9,177.2 C718.7,177.2 719.5,177.2 720.4,177.2 C721.2,177.2 722.1,177.2 722.9,177.2 C723.7,177.2 724.6,177.2 725.4,177.2 C726.2,177.2 727.1,177.2 727.9,177.2 C728.8,177.2 729.6,177.2 730.4,177.2 C731.3,177.2 732.1,177.2 732.9,177.2 C733.8,177.2 734.6,177.2 735.5,177.2 C736.3,177.2 737.1,177.2 738.0,177.2 C738.8,177.2 739.6,177.2 740.5,177.2 C741.3,177.2 742.2,177.2 743.0,177.2 C743.8,177.2 744.7,177.2 745.5,177.2 C746.3,177.2 747.2,177.2 748.0,177.2 C748.9,177.2 749.7,177.2 750.5,177.2 C751.4,177.2 752.2,177.2 753.0,177.2 C753.9,177.2 754.7,177.2 755.6,177.2 C756.4,177.2 757.2,177.2 758.1,177.2 C758.9,177.2 759.7,177.2 760.6,177.2 C761.4,177.2 762.3,177.2 763.1,177.2 C763.9,177.2 764.8,177.2 765.6,177.2 C766.4,177.2 767.3,177.2 768.1,177.2 C769.0,177.2 769.8,177.2 770.6,177.2 C771.5,177.2 772.3,177.2 773.1,177.2 C774.0,177.2 774.8,177.2 775.7,177.2 C776.5,177.2 777.3,177.2 778.2,177.2 C779.0,177.2 779.8,177.2 780.7,177.2 C781.5,177.2 782.4,177.2 783.2,177.2 C784.0,177.2 784.9,177.2 785.7,177.2 C786.5,177.2 787.4,177.2 788.2,177.2 C789.1,177.2 789.9,177.2 790.7,177.2 C791.6,177.2 792.4,177.2 793.2,177.2 C794.1,177.2 794.9,177.2 795.8,177.2 C796.6,177.2 797.4,177.2 798.3,177.2 C799.1,177.2 799.9,177.2 800.8,177.2 C801.6,177.2 802.5,177.2 803.3,177.2 C804.1,177.2 805.0,177.2 805.8,177.2 C806.6,177.2 807.5,177.2 808.3,177.2 C809.2,177.2 810.0,177.2 810.8,177.2 C811.7,177.2 812.5,177.2 813.3,177.2 C814.2,177.2 815.0,177.2 815.9,177.2 C816.7,177.2 817.5,177.2 818.4,177.2 C819.2,177.2 820.0,177.2 820.9,177.2 C821.7,177.2 822.6,177.2 823.4,177.2 C824.2,177.2 825.1,177.2 825.9,177.2 C826.7,177.2 827.6,177.2 828.4,177.2 C829.3,177.2 830.1,177.2 830.9,177.2 C831.8,177.2 832.6,177.2 833.4,177.2 C834.3,177.2 835.1,177.2 835.9,177.2 C836.8,177.2 837.6,177.2 838.5,177.2 C839.3,177.2 840.1,177.2 841.0,177.2 C841.8,177.2 842.6,177.2 843.5,177.2 C844.3,177.2 845.6,177.2 846.0,177.2" stroke="#000000" stroke-width="2.6" fill="none" stroke-linejoin="round" stroke-linecap="round"/>
</g>
<rect x="400.5" y="133.5" width="445" height="315" fill="none" stroke="#000" stroke-width="1"/>
<text transform="translate(396.5,452.1) scale(0.86,1)" text-anchor="end" font-size="12" fill="#000">65</text>
<text transform="translate(396.5,412.7) scale(0.86,1)" text-anchor="end" font-size="12" fill="#000">70</text>
<text transform="translate(396.5,373.4) scale(0.86,1)" text-anchor="end" font-size="12" fill="#000">75</text>
<text transform="translate(396.5,334.0) scale(0.86,1)" text-anchor="end" font-size="12" fill="#000">80</text>
<text transform="translate(396.5,294.6) scale(0.86,1)" text-anchor="end" font-size="12" fill="#000">85</text>
<text transform="translate(396.5,255.2) scale(0.86,1)" text-anchor="end" font-size="12" fill="#000">90</text>
<text transform="translate(396.5,215.8) scale(0.86,1)" text-anchor="end" font-size="12" fill="#000">95</text>
<text transform="translate(396.5,176.5) scale(0.86,1)" text-anchor="end" font-size="12" fill="#000">100</text>
<text transform="translate(396.5,137.1) scale(0.86,1)" text-anchor="end" font-size="12" fill="#000">105</text>
<text transform="translate(863.5,137.1) scale(0.86,1)" text-anchor="middle" font-size="12" fill="#000">180</text>
<text transform="translate(863.5,176.5) scale(0.86,1)" text-anchor="middle" font-size="12" fill="#000">135</text>
<text transform="translate(863.5,215.8) scale(0.86,1)" text-anchor="middle" font-size="12" fill="#000">90</text>
<text transform="translate(863.5,255.2) scale(0.86,1)" text-anchor="middle" font-size="12" fill="#000">45</text>
<text transform="translate(863.5,294.6) scale(0.86,1)" text-anchor="middle" font-size="12" fill="#000">0</text>
<text transform="translate(863.5,334.0) scale(0.86,1)" text-anchor="middle" font-size="12" fill="#000">-45</text>
<text transform="translate(863.5,373.4) scale(0.86,1)" text-anchor="middle" font-size="12" fill="#000">-90</text>
<text transform="translate(863.5,412.7) scale(0.86,1)" text-anchor="middle" font-size="12" fill="#000">-135</text>
<text transform="translate(863.5,452.1) scale(0.86,1)" text-anchor="middle" font-size="12" fill="#000">-180</text>
<text transform="translate(441.1,459.5) scale(0.86,1)" text-anchor="middle" font-size="12" fill="#000">20</text>
<text transform="translate(494.7,459.5) scale(0.86,1)" text-anchor="middle" font-size="12" fill="#000">50</text>
<text transform="translate(535.3,459.5) scale(0.86,1)" text-anchor="middle" font-size="12" fill="#000">100</text>
<text transform="translate(575.9,459.5) scale(0.86,1)" text-anchor="middle" font-size="12" fill="#000">200</text>
<text transform="translate(629.5,459.5) scale(0.86,1)" text-anchor="middle" font-size="12" fill="#000">500</text>
<text transform="translate(670.1,459.5) scale(0.86,1)" text-anchor="middle" font-size="12" fill="#000">1k</text>
<text transform="translate(710.7,459.5) scale(0.86,1)" text-anchor="middle" font-size="12" fill="#000">2k</text>
<text transform="translate(764.3,459.5) scale(0.86,1)" text-anchor="middle" font-size="12" fill="#000">5k</text>
<text transform="translate(804.9,459.5) scale(0.86,1)" text-anchor="middle" font-size="12" fill="#000">10k</text>
<text transform="translate(845.5,459.5) scale(0.86,1)" text-anchor="middle" font-size="12" fill="#000">20k</text>
<text transform="translate(395.5,459.5) scale(0.86,1)" text-anchor="start" font-size="12" fill="#000">10Hz</text>
<text x="623.0" y="129.6" text-anchor="middle" font-size="12" fill="#000">SPL</text>
<text transform="translate(401.5,128.2) scale(0.95,1)" font-size="11" fill="#000">dB</text>
<text transform="translate(843,128.2) scale(0.95,1)" text-anchor="end" font-size="11" fill="#000">deg</text>
<line x1="926" y1="440.5" x2="1354" y2="440.5" stroke="#dadada" stroke-width="1"/>
<line x1="926" y1="432.5" x2="1354" y2="432.5" stroke="#dadada" stroke-width="1"/>
<line x1="926" y1="424.5" x2="1354" y2="424.5" stroke="#dadada" stroke-width="1"/>
<line x1="926" y1="416.5" x2="1354" y2="416.5" stroke="#dadada" stroke-width="1"/>
<line x1="926" y1="400.5" x2="1354" y2="400.5" stroke="#dadada" stroke-width="1"/>
<line x1="926" y1="392.5" x2="1354" y2="392.5" stroke="#dadada" stroke-width="1"/>
<line x1="926" y1="385.5" x2="1354" y2="385.5" stroke="#dadada" stroke-width="1"/>
<line x1="926" y1="377.5" x2="1354" y2="377.5" stroke="#dadada" stroke-width="1"/>
<line x1="926" y1="361.5" x2="1354" y2="361.5" stroke="#dadada" stroke-width="1"/>
<line x1="926" y1="353.5" x2="1354" y2="353.5" stroke="#dadada" stroke-width="1"/>
<line x1="926" y1="345.5" x2="1354" y2="345.5" stroke="#dadada" stroke-width="1"/>
<line x1="926" y1="337.5" x2="1354" y2="337.5" stroke="#dadada" stroke-width="1"/>
<line x1="926" y1="322.5" x2="1354" y2="322.5" stroke="#dadada" stroke-width="1"/>
<line x1="926" y1="314.5" x2="1354" y2="314.5" stroke="#dadada" stroke-width="1"/>
<line x1="926" y1="306.5" x2="1354" y2="306.5" stroke="#dadada" stroke-width="1"/>
<line x1="926" y1="298.5" x2="1354" y2="298.5" stroke="#dadada" stroke-width="1"/>
<line x1="926" y1="282.5" x2="1354" y2="282.5" stroke="#dadada" stroke-width="1"/>
<line x1="926" y1="274.5" x2="1354" y2="274.5" stroke="#dadada" stroke-width="1"/>
<line x1="926" y1="266.5" x2="1354" y2="266.5" stroke="#dadada" stroke-width="1"/>
<line x1="926" y1="259.5" x2="1354" y2="259.5" stroke="#dadada" stroke-width="1"/>
<line x1="926" y1="243.5" x2="1354" y2="243.5" stroke="#dadada" stroke-width="1"/>
<line x1="926" y1="235.5" x2="1354" y2="235.5" stroke="#dadada" stroke-width="1"/>
<line x1="926" y1="227.5" x2="1354" y2="227.5" stroke="#dadada" stroke-width="1"/>
<line x1="926" y1="219.5" x2="1354" y2="219.5" stroke="#dadada" stroke-width="1"/>
<line x1="926" y1="203.5" x2="1354" y2="203.5" stroke="#dadada" stroke-width="1"/>
<line x1="926" y1="196.5" x2="1354" y2="196.5" stroke="#dadada" stroke-width="1"/>
<line x1="926" y1="188.5" x2="1354" y2="188.5" stroke="#dadada" stroke-width="1"/>
<line x1="926" y1="180.5" x2="1354" y2="180.5" stroke="#dadada" stroke-width="1"/>
<line x1="926" y1="164.5" x2="1354" y2="164.5" stroke="#dadada" stroke-width="1"/>
<line x1="926" y1="156.5" x2="1354" y2="156.5" stroke="#dadada" stroke-width="1"/>
<line x1="926" y1="148.5" x2="1354" y2="148.5" stroke="#dadada" stroke-width="1"/>
<line x1="926" y1="140.5" x2="1354" y2="140.5" stroke="#dadada" stroke-width="1"/>
<line x1="964.5" y1="134" x2="964.5" y2="448" stroke="#cacaca" stroke-width="1"/>
<line x1="987.5" y1="134" x2="987.5" y2="448" stroke="#cacaca" stroke-width="1"/>
<line x1="1003.5" y1="134" x2="1003.5" y2="448" stroke="#cacaca" stroke-width="1"/>
<line x1="1015.5" y1="134" x2="1015.5" y2="448" stroke="#cacaca" stroke-width="1"/>
<line x1="1026.5" y1="134" x2="1026.5" y2="448" stroke="#cacaca" stroke-width="1"/>
<line x1="1034.5" y1="134" x2="1034.5" y2="448" stroke="#cacaca" stroke-width="1"/>
<line x1="1042.5" y1="134" x2="1042.5" y2="448" stroke="#cacaca" stroke-width="1"/>
<line x1="1049.5" y1="134" x2="1049.5" y2="448" stroke="#cacaca" stroke-width="1"/>
<line x1="1094.5" y1="134" x2="1094.5" y2="448" stroke="#cacaca" stroke-width="1"/>
<line x1="1116.5" y1="134" x2="1116.5" y2="448" stroke="#cacaca" stroke-width="1"/>
<line x1="1133.5" y1="134" x2="1133.5" y2="448" stroke="#cacaca" stroke-width="1"/>
<line x1="1145.5" y1="134" x2="1145.5" y2="448" stroke="#cacaca" stroke-width="1"/>
<line x1="1156.5" y1="134" x2="1156.5" y2="448" stroke="#cacaca" stroke-width="1"/>
<line x1="1164.5" y1="134" x2="1164.5" y2="448" stroke="#cacaca" stroke-width="1"/>
<line x1="1172.5" y1="134" x2="1172.5" y2="448" stroke="#cacaca" stroke-width="1"/>
<line x1="1178.5" y1="134" x2="1178.5" y2="448" stroke="#cacaca" stroke-width="1"/>
<line x1="1224.5" y1="134" x2="1224.5" y2="448" stroke="#cacaca" stroke-width="1"/>
<line x1="1246.5" y1="134" x2="1246.5" y2="448" stroke="#cacaca" stroke-width="1"/>
<line x1="1263.5" y1="134" x2="1263.5" y2="448" stroke="#cacaca" stroke-width="1"/>
<line x1="1275.5" y1="134" x2="1275.5" y2="448" stroke="#cacaca" stroke-width="1"/>
<line x1="1286.5" y1="134" x2="1286.5" y2="448" stroke="#cacaca" stroke-width="1"/>
<line x1="1294.5" y1="134" x2="1294.5" y2="448" stroke="#cacaca" stroke-width="1"/>
<line x1="1302.5" y1="134" x2="1302.5" y2="448" stroke="#cacaca" stroke-width="1"/>
<line x1="1308.5" y1="134" x2="1308.5" y2="448" stroke="#cacaca" stroke-width="1"/>
<line x1="926" y1="408.5" x2="1354" y2="408.5" stroke="#6e6e6e" stroke-width="1"/>
<line x1="926" y1="369.5" x2="1354" y2="369.5" stroke="#6e6e6e" stroke-width="1"/>
<line x1="926" y1="329.5" x2="1354" y2="329.5" stroke="#6e6e6e" stroke-width="1"/>
<line x1="926" y1="290.5" x2="1354" y2="290.5" stroke="#6e6e6e" stroke-width="1"/>
<line x1="926" y1="251.5" x2="1354" y2="251.5" stroke="#6e6e6e" stroke-width="1"/>
<line x1="926" y1="211.5" x2="1354" y2="211.5" stroke="#6e6e6e" stroke-width="1"/>
<line x1="926" y1="172.5" x2="1354" y2="172.5" stroke="#6e6e6e" stroke-width="1"/>
<line x1="1054.5" y1="134" x2="1054.5" y2="448" stroke="#6e6e6e" stroke-width="1"/>
<line x1="1184.5" y1="134" x2="1184.5" y2="448" stroke="#6e6e6e" stroke-width="1"/>
<line x1="1314.5" y1="134" x2="1314.5" y2="448" stroke="#6e6e6e" stroke-width="1"/>
<clipPath id="clip10"><rect x="926" y="134" width="428" height="314"/></clipPath>
<g clip-path="url(#clip10)">
<path d="M925.9,439.0 C926.3,439.1 927.3,439.3 928.1,439.5 C928.8,439.7 929.6,440.0 930.4,440.2 C931.1,440.4 932.0,440.7 932.8,440.9 C933.6,441.1 934.4,441.4 935.3,441.7 C936.1,441.9 937.0,442.2 937.8,442.5 C938.7,442.7 939.6,443.0 940.4,443.2 C941.3,443.5 942.2,443.8 943.1,444.0 C944.0,444.2 944.8,444.5 945.7,444.7 C946.6,444.9 947.5,445.1 948.4,445.3 C949.3,445.5 950.1,445.6 951.0,445.8 C951.9,445.9 952.7,446.0 953.6,446.1 C954.4,446.2 955.3,446.3 956.1,446.3 C956.9,446.3 957.8,446.3 958.6,446.3 C959.4,446.2 960.1,446.1 960.9,446.0 C961.7,445.9 962.4,445.7 963.1,445.5 C963.8,445.3 964.5,445.0 965.2,444.7 C965.9,444.4 966.5,444.1 967.2,443.7 C967.8,443.3 968.4,442.8 969.0,442.4 C969.6,441.9 970.1,441.4 970.7,440.9 C971.2,440.3 971.7,439.8 972.2,439.2 C972.6,438.6 973.1,437.9 973.5,437.3 C974.0,436.6 974.4,436.0 974.7,435.3 C975.1,434.6 975.4,433.8 975.8,433.1 C976.1,432.4 976.4,431.6 976.6,430.8 C976.9,430.1 977.1,429.3 977.4,428.5 C977.6,427.7 977.8,426.8 978.0,426.0 C978.1,425.2 978.3,424.4 978.4,423.5 C978.6,422.7 978.7,421.8 978.8,420.9 C979.0,420.1 979.1,419.2 979.2,418.3 C979.2,417.4 979.3,416.6 979.4,415.7 C979.5,414.8 979.6,413.9 979.6,413.0 C979.7,412.1 979.8,411.2 979.8,410.4 C979.9,409.5 979.9,408.6 980.0,407.7 C980.1,406.8 980.1,405.9 980.2,405.1 C980.2,404.2 980.3,403.3 980.4,402.4 C980.4,401.6 980.5,400.7 980.5,399.8 C980.6,398.9 980.7,398.1 980.7,397.2 C980.8,396.3 980.8,395.5 980.9,394.6 C980.9,393.7 981.0,392.9 981.1,392.0 C981.1,391.1 981.2,390.3 981.2,389.4 C981.3,388.6 981.3,387.7 981.4,386.8 C981.4,386.0 981.5,385.1 981.5,384.3 C981.6,383.4 981.7,382.6 981.7,381.7 C981.8,380.9 981.8,380.0 981.9,379.2 C981.9,378.3 982.0,377.5 982.0,376.6 C982.1,375.8 982.1,374.9 982.2,374.1 C982.2,373.2 982.3,372.4 982.3,371.5 C982.4,370.7 982.4,369.8 982.5,369.0 C982.5,368.2 982.6,367.3 982.6,366.5 C982.6,365.6 982.7,364.8 982.7,364.0 C982.8,363.1 982.8,362.3 982.9,361.4 C982.9,360.6 983.0,359.8 983.0,358.9 C983.1,358.1 983.1,357.3 983.1,356.4 C983.2,355.6 983.2,354.8 983.3,353.9 C983.3,353.1 983.4,352.3 983.4,351.4 C983.4,350.6 983.5,349.8 983.5,348.9 C983.6,348.1 983.6,347.3 983.7,346.4 C983.7,345.6 983.7,344.8 983.8,344.0 C983.8,343.1 983.9,342.3 983.9,341.5 C983.9,340.6 984.0,339.8 984.0,339.0 C984.0,338.1 984.1,337.3 984.1,336.5 C984.2,335.7 984.2,334.8 984.2,334.0 C984.3,333.2 984.3,332.3 984.3,331.5 C984.4,330.7 984.4,329.9 984.4,329.0 C984.5,328.2 984.5,327.4 984.5,326.5 C984.6,325.7 984.6,324.9 984.6,324.1 C984.7,323.2 984.7,322.4 984.7,321.6 C984.8,320.7 984.8,319.9 984.8,319.1 C984.9,318.2 984.9,317.4 984.9,316.6 C985.0,315.8 985.0,314.9 985.0,314.1 C985.1,313.3 985.1,312.4 985.1,311.6 C985.1,310.8 985.2,309.9 985.2,309.1 C985.2,308.3 985.3,307.4 985.3,306.6 C985.3,305.8 985.3,304.9 985.4,304.1 C985.4,303.3 985.4,302.4 985.4,301.6 C985.5,300.8 985.5,299.9 985.5,299.1 C985.5,298.2 985.6,297.4 985.6,296.6 C985.6,295.7 985.6,294.9 985.7,294.1 C985.7,293.2 985.7,292.4 985.7,291.5 C985.8,290.7 985.8,289.9 985.8,289.0 C985.8,288.2 985.9,287.4 985.9,286.5 C985.9,285.7 985.9,284.8 985.9,284.0 C986.0,283.2 986.0,282.3 986.0,281.5 C986.0,280.6 986.0,279.8 986.1,279.0 C986.1,278.1 986.1,277.3 986.1,276.4 C986.1,275.6 986.2,274.8 986.2,273.9 C986.2,273.1 986.2,272.2 986.2,271.4 C986.3,270.6 986.3,269.7 986.3,268.9 C986.3,268.0 986.3,267.2 986.3,266.3 C986.4,265.5 986.4,264.7 986.4,263.8 C986.4,263.0 986.4,262.1 986.4,261.3 C986.5,260.4 986.5,259.6 986.5,258.8 C986.5,257.9 986.5,257.1 986.5,256.2 C986.5,255.4 986.6,254.5 986.6,253.7 C986.6,252.8 986.6,252.0 986.6,251.2 C986.6,250.3 986.6,249.5 986.7,248.6 C986.7,247.8 986.7,246.9 986.7,246.1 C986.7,245.2 986.7,244.4 986.7,243.6 C986.7,242.7 986.8,241.9 986.8,241.0 C986.8,240.2 986.8,239.3 986.8,238.5 C986.8,237.6 986.8,236.8 986.8,236.0 C986.8,235.1 986.8,234.3 986.9,233.4 C986.9,232.6 986.9,231.7 986.9,230.9 C986.9,230.0 986.9,229.2 986.9,228.4 C986.9,227.5 986.9,226.7 986.9,225.8 C987.0,225.0 987.0,224.1 987.0,223.3 C987.0,222.4 987.0,221.6 987.0,220.7 C987.0,219.9 987.0,219.1 987.0,218.2 C987.0,217.4 987.0,216.5 987.0,215.7 C987.1,214.8 987.1,214.0 987.1,213.1 C987.1,212.3 987.1,211.5 987.1,210.6 C987.1,209.8 987.1,208.9 987.1,208.1 C987.1,207.2 987.1,206.4 987.1,205.5 C987.1,204.7 987.1,203.9 987.1,203.0 C987.2,202.2 987.2,201.3 987.2,200.5 C987.2,199.6 987.2,198.8 987.2,198.0 C987.2,197.1 987.2,196.3 987.2,195.4 C987.2,194.6 987.2,193.7 987.2,192.9 C987.2,192.0 987.2,191.2 987.2,190.4 C987.2,189.5 987.2,188.7 987.2,187.8 C987.2,187.0 987.3,186.2 987.3,185.3 C987.3,184.5 987.3,183.6 987.3,182.8 C987.3,181.9 987.3,181.1 987.3,180.3 C987.3,179.4 987.3,178.6 987.3,177.7 C987.3,176.9 987.3,176.1 987.3,175.2 C987.3,174.4 987.3,173.5 987.3,172.7 C987.3,171.9 987.3,171.0 987.3,170.2 C987.3,169.3 987.3,168.5 987.3,167.7 C987.3,166.8 987.3,166.0 987.3,165.2 C987.3,164.3 987.3,163.5 987.3,162.6 C987.4,161.8 987.4,161.0 987.4,160.1 C987.4,159.3 987.4,158.5 987.4,157.6 C987.4,156.8 987.4,156.0 987.4,155.1 C987.4,154.3 987.4,153.4 987.4,152.6 C987.4,151.8 987.4,150.9 987.4,150.1 C987.4,149.3 987.4,148.4 987.4,147.6 C987.4,146.8 987.4,145.9 987.4,145.1 C987.4,144.3 987.4,143.4 987.4,142.6 C987.4,141.8 987.4,140.9 987.4,140.1 C987.4,139.3 987.4,138.5 987.4,137.6 C987.4,136.8 987.4,136.0 987.4,135.1 C987.4,134.3 987.4,133.5 987.4,132.7 C987.4,131.8 987.4,130.6 987.4,130.2" stroke="#4cdcd2" stroke-width="1.2" fill="none" stroke-linejoin="round" stroke-linecap="round"/>
<path d="M997.4,130.0 C997.4,130.4 997.4,131.7 997.4,132.5 C997.5,133.4 997.5,134.2 997.5,135.0 C997.5,135.9 997.5,136.7 997.6,137.6 C997.6,138.4 997.6,139.2 997.6,140.1 C997.7,140.9 997.7,141.8 997.7,142.6 C997.7,143.5 997.7,144.3 997.8,145.1 C997.8,146.0 997.8,146.8 997.8,147.7 C997.8,148.5 997.8,149.3 997.9,150.2 C997.9,151.0 997.9,151.9 997.9,152.7 C997.9,153.5 997.9,154.4 998.0,155.2 C998.0,156.0 998.0,156.9 998.0,157.7 C998.0,158.6 998.0,159.4 998.0,160.2 C998.1,161.1 998.1,161.9 998.1,162.8 C998.1,163.6 998.1,164.4 998.1,165.3 C998.1,166.1 998.1,166.9 998.2,167.8 C998.2,168.6 998.2,169.5 998.2,170.3 C998.2,171.1 998.2,172.0 998.2,172.8 C998.2,173.6 998.3,174.5 998.3,175.3 C998.3,176.2 998.3,177.0 998.3,177.8 C998.3,178.7 998.3,179.5 998.3,180.3 C998.4,181.2 998.4,182.0 998.4,182.9 C998.4,183.7 998.4,184.5 998.4,185.4 C998.4,186.2 998.4,187.0 998.4,187.9 C998.5,188.7 998.5,189.6 998.5,190.4 C998.5,191.2 998.5,192.1 998.5,192.9 C998.5,193.7 998.5,194.6 998.6,195.4 C998.6,196.3 998.6,197.1 998.6,197.9 C998.6,198.8 998.6,199.6 998.6,200.5 C998.7,201.3 998.7,202.1 998.7,203.0 C998.7,203.8 998.7,204.6 998.7,205.5 C998.7,206.3 998.8,207.2 998.8,208.0 C998.8,208.8 998.8,209.7 998.8,210.5 C998.8,211.4 998.9,212.2 998.9,213.0 C998.9,213.9 998.9,214.7 998.9,215.6 C998.9,216.4 999.0,217.3 999.0,218.1 C999.0,218.9 999.0,219.8 999.0,220.6 C999.1,221.5 999.1,222.3 999.1,223.1 C999.1,224.0 999.1,224.8 999.2,225.7 C999.2,226.5 999.2,227.3 999.2,228.2 C999.3,229.0 999.3,229.9 999.3,230.7 C999.3,231.6 999.4,232.4 999.4,233.2 C999.4,234.1 999.4,234.9 999.5,235.8 C999.5,236.6 999.5,237.4 999.6,238.3 C999.6,239.1 999.6,240.0 999.6,240.8 C999.7,241.6 999.7,242.5 999.7,243.3 C999.8,244.2 999.8,245.0 999.9,245.8 C999.9,246.7 999.9,247.5 1000.0,248.4 C1000.0,249.2 1000.0,250.0 1000.1,250.9 C1000.1,251.7 1000.2,252.6 1000.2,253.4 C1000.2,254.2 1000.3,255.1 1000.3,255.9 C1000.4,256.8 1000.4,257.6 1000.5,258.4 C1000.5,259.3 1000.5,260.1 1000.6,261.0 C1000.6,261.8 1000.7,262.6 1000.7,263.5 C1000.8,264.3 1000.8,265.1 1000.9,266.0 C1001.0,266.8 1001.0,267.6 1001.1,268.5 C1001.1,269.3 1001.2,270.1 1001.2,271.0 C1001.3,271.8 1001.4,272.7 1001.4,273.5 C1001.5,274.3 1001.5,275.2 1001.6,276.0 C1001.7,276.8 1001.7,277.7 1001.8,278.5 C1001.9,279.3 1001.9,280.1 1002.0,281.0 C1002.1,281.8 1002.1,282.6 1002.2,283.5 C1002.3,284.3 1002.4,285.1 1002.4,286.0 C1002.5,286.8 1002.6,287.6 1002.7,288.4 C1002.7,289.3 1002.8,290.1 1002.9,290.9 C1003.0,291.8 1003.0,292.6 1003.1,293.4 C1003.2,294.3 1003.3,295.1 1003.4,295.9 C1003.4,296.7 1003.5,297.6 1003.6,298.4 C1003.7,299.2 1003.8,300.1 1003.9,300.9 C1003.9,301.7 1004.0,302.6 1004.1,303.4 C1004.2,304.2 1004.3,305.1 1004.4,305.9 C1004.4,306.7 1004.5,307.6 1004.6,308.4 C1004.7,309.2 1004.8,310.1 1004.9,310.9 C1004.9,311.8 1005.0,312.6 1005.1,313.4 C1005.2,314.3 1005.3,315.1 1005.3,316.0 C1005.4,316.8 1005.5,317.7 1005.6,318.5 C1005.7,319.3 1005.7,320.2 1005.8,321.0 C1005.9,321.9 1006.0,322.7 1006.1,323.6 C1006.1,324.5 1006.2,325.3 1006.3,326.2 C1006.4,327.0 1006.4,327.9 1006.5,328.7 C1006.6,329.6 1006.7,330.4 1006.7,331.3 C1006.8,332.1 1006.9,333.0 1007.0,333.8 C1007.0,334.7 1007.1,335.6 1007.2,336.4 C1007.2,337.3 1007.3,338.1 1007.4,339.0 C1007.5,339.8 1007.5,340.7 1007.6,341.5 C1007.7,342.4 1007.8,343.2 1007.8,344.0 C1007.9,344.9 1008.0,345.7 1008.1,346.6 C1008.2,347.4 1008.2,348.2 1008.3,349.1 C1008.4,349.9 1008.5,350.7 1008.6,351.6 C1008.6,352.4 1008.7,353.2 1008.8,354.1 C1008.9,354.9 1009.0,355.7 1009.1,356.5 C1009.1,357.3 1009.2,358.1 1009.3,358.9 C1009.4,359.8 1009.5,360.6 1009.6,361.4 C1009.7,362.2 1009.8,363.0 1009.9,363.8 C1010.0,364.6 1010.1,365.4 1010.1,366.2 C1010.2,367.0 1010.3,367.7 1010.4,368.5 C1010.5,369.3 1010.6,370.1 1010.7,370.9 C1010.8,371.7 1010.9,372.5 1011.0,373.3 C1011.1,374.1 1011.2,374.9 1011.3,375.8 C1011.4,376.6 1011.5,377.4 1011.6,378.2 C1011.7,379.0 1011.9,379.8 1012.0,380.7 C1012.1,381.5 1012.2,382.3 1012.3,383.1 C1012.4,384.0 1012.5,384.8 1012.6,385.7 C1012.7,386.5 1012.8,387.4 1012.9,388.2 C1013.0,389.1 1013.1,390.0 1013.2,390.9 C1013.3,391.7 1013.4,392.6 1013.5,393.5 C1013.6,394.4 1013.7,395.3 1013.8,396.3 C1014.0,397.2 1014.1,398.1 1014.2,399.1 C1014.3,400.0 1014.4,400.9 1014.5,401.9 C1014.6,402.8 1014.7,403.8 1014.9,404.7 C1015.0,405.7 1015.1,406.6 1015.3,407.6 C1015.4,408.5 1015.6,409.5 1015.7,410.4 C1015.9,411.3 1016.0,412.3 1016.2,413.2 C1016.4,414.1 1016.6,415.1 1016.8,416.0 C1017.0,416.9 1017.2,417.8 1017.5,418.6 C1017.7,419.5 1017.9,420.3 1018.2,421.0 C1018.4,421.8 1018.7,422.5 1019.0,423.0 C1019.2,423.6 1019.5,424.0 1019.8,424.3 C1020.1,424.6 1020.4,424.8 1020.6,424.8 C1020.9,424.8 1021.2,424.6 1021.5,424.3 C1021.7,424.0 1022.0,423.6 1022.3,423.0 C1022.5,422.5 1022.8,421.8 1023.1,421.1 C1023.3,420.3 1023.6,419.5 1023.8,418.6 C1024.1,417.7 1024.3,416.7 1024.6,415.8 C1024.8,414.8 1025.0,413.8 1025.2,412.8 C1025.5,411.8 1025.7,410.8 1025.9,409.8 C1026.1,408.8 1026.2,407.9 1026.4,406.9 C1026.6,406.0 1026.8,405.0 1026.9,404.1 C1027.1,403.2 1027.3,402.3 1027.4,401.4 C1027.6,400.5 1027.7,399.6 1027.8,398.7 C1028.0,397.8 1028.1,397.0 1028.2,396.1 C1028.3,395.2 1028.5,394.4 1028.6,393.5 C1028.7,392.7 1028.8,391.8 1028.9,391.0 C1029.1,390.1 1029.2,389.3 1029.3,388.4 C1029.4,387.6 1029.5,386.7 1029.6,385.9 C1029.7,385.1 1029.8,384.2 1029.9,383.4 C1030.1,382.5 1030.2,381.7 1030.3,380.9 C1030.4,380.0 1030.5,379.2 1030.6,378.4 C1030.7,377.5 1030.8,376.7 1030.9,375.9 C1031.0,375.0 1031.1,374.2 1031.2,373.4 C1031.3,372.5 1031.4,371.7 1031.5,370.9 C1031.6,370.1 1031.7,369.2 1031.7,368.4 C1031.8,367.6 1031.9,366.8 1032.0,365.9 C1032.1,365.1 1032.2,364.3 1032.3,363.5 C1032.4,362.6 1032.5,361.8 1032.6,361.0 C1032.7,360.2 1032.8,359.3 1032.9,358.5 C1032.9,357.7 1033.0,356.9 1033.1,356.0 C1033.2,355.2 1033.3,354.4 1033.4,353.5 C1033.5,352.7 1033.6,351.9 1033.7,351.1 C1033.8,350.2 1033.8,349.4 1033.9,348.6 C1034.0,347.8 1034.1,346.9 1034.2,346.1 C1034.3,345.3 1034.4,344.4 1034.5,343.6 C1034.6,342.8 1034.6,342.0 1034.7,341.1 C1034.8,340.3 1034.9,339.5 1035.0,338.6 C1035.1,337.8 1035.2,337.0 1035.3,336.1 C1035.3,335.3 1035.4,334.5 1035.5,333.6 C1035.6,332.8 1035.7,332.0 1035.8,331.1 C1035.9,330.3 1036.0,329.5 1036.0,328.6 C1036.1,327.8 1036.2,327.0 1036.3,326.1 C1036.4,325.3 1036.5,324.5 1036.6,323.6 C1036.6,322.8 1036.7,322.0 1036.8,321.1 C1036.9,320.3 1037.0,319.5 1037.1,318.6 C1037.1,317.8 1037.2,317.0 1037.3,316.1 C1037.4,315.3 1037.5,314.4 1037.6,313.6 C1037.6,312.8 1037.7,311.9 1037.8,311.1 C1037.9,310.3 1038.0,309.4 1038.0,308.6 C1038.1,307.7 1038.2,306.9 1038.3,306.1 C1038.4,305.2 1038.4,304.4 1038.5,303.6 C1038.6,302.7 1038.7,301.9 1038.7,301.0 C1038.8,300.2 1038.9,299.4 1039.0,298.5 C1039.0,297.7 1039.1,296.8 1039.2,296.0 C1039.3,295.2 1039.3,294.3 1039.4,293.5 C1039.5,292.7 1039.6,291.8 1039.6,291.0 C1039.7,290.1 1039.8,289.3 1039.8,288.5 C1039.9,287.6 1040.0,286.8 1040.1,285.9 C1040.1,285.1 1040.2,284.3 1040.3,283.4 C1040.3,282.6 1040.4,281.8 1040.5,280.9 C1040.5,280.1 1040.6,279.2 1040.6,278.4 C1040.7,277.6 1040.8,276.7 1040.8,275.9 C1040.9,275.0 1041.0,274.2 1041.0,273.4 C1041.1,272.5 1041.1,271.7 1041.2,270.9 C1041.3,270.0 1041.3,269.2 1041.4,268.3 C1041.4,267.5 1041.5,266.7 1041.5,265.8 C1041.6,265.0 1041.7,264.1 1041.7,263.3 C1041.8,262.5 1041.8,261.6 1041.9,260.8 C1041.9,260.0 1042.0,259.1 1042.0,258.3 C1042.1,257.4 1042.1,256.6 1042.2,255.8 C1042.2,254.9 1042.3,254.1 1042.3,253.3 C1042.4,252.4 1042.4,251.6 1042.5,250.7 C1042.5,249.9 1042.6,249.1 1042.6,248.2 C1042.7,247.4 1042.7,246.6 1042.8,245.7 C1042.8,244.9 1042.8,244.0 1042.9,243.2 C1042.9,242.4 1043.0,241.5 1043.0,240.7 C1043.1,239.9 1043.1,239.0 1043.2,238.2 C1043.2,237.3 1043.2,236.5 1043.3,235.7 C1043.3,234.8 1043.4,234.0 1043.4,233.2 C1043.4,232.3 1043.5,231.5 1043.5,230.6 C1043.5,229.8 1043.6,229.0 1043.6,228.1 C1043.7,227.3 1043.7,226.5 1043.7,225.6 C1043.8,224.8 1043.8,223.9 1043.8,223.1 C1043.9,222.3 1043.9,221.4 1043.9,220.6 C1044.0,219.8 1044.0,218.9 1044.0,218.1 C1044.1,217.2 1044.1,216.4 1044.1,215.6 C1044.2,214.7 1044.2,213.9 1044.2,213.1 C1044.3,212.2 1044.3,211.4 1044.3,210.5 C1044.4,209.7 1044.4,208.9 1044.4,208.0 C1044.5,207.2 1044.5,206.4 1044.5,205.5 C1044.5,204.7 1044.6,203.8 1044.6,203.0 C1044.6,202.2 1044.7,201.3 1044.7,200.5 C1044.7,199.7 1044.7,198.8 1044.8,198.0 C1044.8,197.1 1044.8,196.3 1044.8,195.5 C1044.9,194.6 1044.9,193.8 1044.9,193.0 C1045.0,192.1 1045.0,191.3 1045.0,190.4 C1045.0,189.6 1045.1,188.8 1045.1,187.9 C1045.1,187.1 1045.1,186.2 1045.2,185.4 C1045.2,184.6 1045.2,183.7 1045.2,182.9 C1045.2,182.1 1045.3,181.2 1045.3,180.4 C1045.3,179.5 1045.3,178.7 1045.4,177.9 C1045.4,177.0 1045.4,176.2 1045.4,175.3 C1045.4,174.5 1045.5,173.7 1045.5,172.8 C1045.5,172.0 1045.5,171.2 1045.6,170.3 C1045.6,169.5 1045.6,168.6 1045.6,167.8 C1045.6,167.0 1045.7,166.1 1045.7,165.3 C1045.7,164.4 1045.7,163.6 1045.7,162.8 C1045.8,161.9 1045.8,161.1 1045.8,160.2 C1045.8,159.4 1045.8,158.6 1045.9,157.7 C1045.9,156.9 1045.9,156.0 1045.9,155.2 C1045.9,154.4 1046.0,153.5 1046.0,152.7 C1046.0,151.8 1046.0,151.0 1046.0,150.2 C1046.1,149.3 1046.1,148.5 1046.1,147.6 C1046.1,146.8 1046.1,146.0 1046.2,145.1 C1046.2,144.3 1046.2,143.4 1046.2,142.6 C1046.2,141.7 1046.3,140.9 1046.3,140.1 C1046.3,139.2 1046.3,138.4 1046.3,137.5 C1046.3,136.7 1046.4,135.9 1046.4,135.0 C1046.4,134.2 1046.4,133.3 1046.4,132.5 C1046.5,131.7 1046.5,130.4 1046.5,130.0" stroke="#4cdcd2" stroke-width="1.2" fill="none" stroke-linejoin="round" stroke-linecap="round"/>
<path d="M925.6,276.7 C926.8,279.8 929.8,287.1 932.5,295.5 C935.2,303.9 938.9,314.2 942.0,326.8 C945.1,339.4 948.5,358.2 951.4,370.8 C954.3,383.4 956.9,393.8 959.2,402.1 C961.6,410.5 963.4,421.9 965.5,420.9 C967.6,419.8 969.7,408.9 971.8,395.8 C973.9,382.7 975.9,360.3 978.0,342.5 C980.1,324.7 982.0,302.4 984.3,289.2 C986.5,276.0 989.1,264.0 991.5,263.5 C993.9,263.0 996.2,274.5 998.4,286.1 C1000.6,297.7 1002.6,316.9 1004.7,333.1 C1006.8,349.3 1008.9,369.2 1011.0,383.3 C1013.1,397.4 1015.6,411.6 1017.2,417.8 C1018.8,424.0 1018.9,425.2 1020.6,420.5 C1022.3,415.8 1025.3,400.5 1027.5,389.6 C1029.7,378.7 1031.7,366.1 1033.8,355.1 C1035.9,344.1 1038.0,333.1 1040.1,323.7 C1042.2,314.3 1044.1,306.2 1046.4,298.6 C1048.8,291.0 1051.6,283.5 1054.2,278.2 C1056.8,272.9 1060.2,269.4 1062.0,266.8 C1063.8,264.3 1064.0,264.3 1065.0,263.1 C1066.1,262.0 1067.1,261.0 1068.1,260.0 C1069.1,259.1 1070.1,258.2 1071.1,257.4 C1072.1,256.6 1073.2,256.0 1074.2,255.3 C1075.2,254.7 1076.2,254.2 1077.2,253.7 C1078.2,253.3 1079.2,252.9 1080.2,252.5 C1081.3,252.2 1082.3,251.9 1083.3,251.7 C1084.3,251.5 1085.3,251.4 1086.3,251.3 C1087.3,251.2 1088.4,251.1 1089.4,251.1 C1090.4,251.1 1091.4,251.2 1092.4,251.2 C1093.4,251.3 1094.4,251.4 1095.5,251.6 C1096.5,251.7 1097.5,251.9 1098.5,252.1 C1099.5,252.3 1100.5,252.5 1101.5,252.8 C1102.6,253.1 1103.6,253.4 1104.6,253.7 C1105.6,254.0 1106.6,254.3 1107.6,254.6 C1108.6,255.0 1109.7,255.4 1110.7,255.8 C1111.7,256.1 1112.7,256.5 1113.7,257.0 C1114.7,257.4 1115.7,257.8 1116.8,258.3 C1117.8,258.7 1118.8,259.2 1119.8,259.7 C1120.8,260.1 1121.8,260.6 1122.8,261.1 C1123.8,261.6 1124.9,262.1 1125.9,262.6 C1126.9,263.1 1127.9,263.6 1128.9,264.1 C1129.9,264.6 1130.9,265.2 1132.0,265.7 C1133.0,266.2 1134.0,266.7 1135.0,267.2 C1136.0,267.7 1137.0,268.3 1138.0,268.8 C1139.1,269.3 1140.1,269.8 1141.1,270.3 C1142.1,270.8 1143.1,271.3 1144.1,271.8 C1145.1,272.3 1146.2,272.9 1147.2,273.4 C1148.2,273.9 1149.2,274.4 1150.2,274.9 C1151.2,275.4 1152.2,275.9 1153.2,276.4 C1154.3,276.9 1155.3,277.5 1156.3,278.0 C1157.3,278.5 1158.3,279.0 1159.3,279.5 C1160.3,280.0 1161.4,280.5 1162.4,281.1 C1163.4,281.6 1164.4,282.1 1165.4,282.6 C1166.4,283.2 1167.4,283.7 1168.5,284.2 C1169.5,284.7 1170.5,285.3 1171.5,285.8 C1172.5,286.3 1173.5,286.9 1174.5,287.4 C1175.6,288.0 1176.6,288.5 1177.6,289.0 C1178.6,289.6 1179.6,290.1 1180.6,290.7 C1181.6,291.2 1182.7,291.8 1183.7,292.4 C1184.7,292.9 1185.7,293.5 1186.7,294.1 C1187.7,294.6 1188.7,295.2 1189.8,295.8 C1190.8,296.4 1191.8,296.9 1192.8,297.5 C1193.8,298.1 1194.8,298.7 1195.8,299.3 C1196.8,299.9 1197.9,300.5 1198.9,301.1 C1199.9,301.7 1200.9,302.3 1201.9,302.9 C1202.9,303.5 1203.9,304.1 1205.0,304.7 C1206.0,305.4 1207.0,306.0 1208.0,306.6 C1209.0,307.2 1210.0,307.8 1211.0,308.5 C1212.1,309.1 1213.1,309.7 1214.1,310.3 C1215.1,311.0 1216.1,311.6 1217.1,312.2 C1218.1,312.9 1219.2,313.5 1220.2,314.2 C1221.2,314.8 1222.2,315.4 1223.2,316.1 C1224.2,316.7 1225.2,317.4 1226.2,318.0 C1227.3,318.7 1228.3,319.3 1229.3,320.0 C1230.3,320.6 1231.3,321.3 1232.3,321.9 C1233.3,322.6 1234.4,323.2 1235.4,323.9 C1236.4,324.6 1237.4,325.2 1238.4,325.9 C1239.4,326.5 1240.4,327.2 1241.5,327.9 C1242.5,328.5 1243.5,329.2 1244.5,329.8 C1245.5,330.5 1246.5,331.2 1247.5,331.8 C1248.6,332.5 1249.6,333.2 1250.6,333.8 C1251.6,334.5 1252.6,335.2 1253.6,335.8 C1254.6,336.5 1255.7,337.2 1256.7,337.8 C1257.7,338.5 1258.7,339.2 1259.7,339.8 C1260.7,340.5 1261.7,341.2 1262.8,341.8 C1263.8,342.5 1264.8,343.1 1265.8,343.8 C1266.8,344.5 1267.8,345.1 1268.8,345.8 C1269.8,346.5 1270.9,347.1 1271.9,347.8 C1272.9,348.4 1273.9,349.1 1274.9,349.8 C1275.9,350.4 1276.9,351.1 1278.0,351.7 C1279.0,352.4 1280.0,353.0 1281.0,353.7 C1282.0,354.3 1283.0,355.0 1284.0,355.6 C1285.1,356.3 1286.1,356.9 1287.1,357.6 C1288.1,358.2 1289.1,358.9 1290.1,359.5 C1291.1,360.2 1292.2,360.8 1293.2,361.4 C1294.2,362.1 1295.2,362.7 1296.2,363.3 C1297.2,364.0 1298.2,364.6 1299.2,365.2 C1300.3,365.9 1301.3,366.5 1302.3,367.1 C1303.3,367.7 1304.3,368.4 1305.3,369.0 C1306.3,369.6 1307.4,370.2 1308.4,370.8 C1309.4,371.4 1310.4,372.0 1311.4,372.6 C1312.4,373.2 1313.4,373.8 1314.5,374.4 C1315.5,375.0 1316.5,375.6 1317.5,376.2 C1318.5,376.8 1319.5,377.4 1320.5,378.0 C1321.6,378.6 1322.6,379.1 1323.6,379.7 C1324.6,380.3 1325.6,380.8 1326.6,381.4 C1327.6,382.0 1328.7,382.5 1329.7,383.1 C1330.7,383.7 1331.7,384.2 1332.7,384.8 C1333.7,385.3 1334.7,385.8 1335.8,386.4 C1336.8,386.9 1337.8,387.5 1338.8,388.0 C1339.8,388.5 1340.8,389.0 1341.8,389.5 C1342.8,390.1 1343.9,390.6 1344.9,391.1 C1345.9,391.6 1346.9,392.1 1347.9,392.6 C1348.9,393.1 1349.9,393.6 1351.0,394.1 C1352.0,394.5 1353.5,395.3 1354.0,395.5" stroke="#000000" stroke-width="2.2" fill="none" stroke-linejoin="round" stroke-linecap="round"/>
<path d="M925.6,314.3 C927.0,319.0 931.1,333.1 934.1,342.5 C937.1,351.9 940.4,361.4 943.5,370.8 C946.6,380.2 950.0,391.4 952.9,399.0 C955.8,406.6 958.7,412.4 960.8,416.2 C962.9,419.9 963.7,422.8 965.5,421.5 C967.3,420.2 969.4,420.0 971.8,408.4 C974.1,396.8 977.2,370.7 979.6,351.9 C982.0,333.1 983.9,310.2 985.9,295.5 C987.9,280.8 989.5,265.6 991.5,263.5 C993.5,261.4 995.6,270.2 997.8,282.9 C1000.0,295.5 1002.2,320.0 1004.7,339.4 C1007.2,358.8 1010.1,385.1 1012.5,399.0 C1014.9,412.9 1017.3,418.4 1018.8,422.5 C1020.3,426.6 1019.8,425.9 1021.5,423.5 C1023.2,421.1 1026.5,416.7 1029.1,408.4 C1031.7,400.1 1034.4,385.4 1037.0,373.9 C1039.6,362.4 1041.9,350.4 1044.8,339.4 C1047.7,328.4 1051.3,316.1 1054.2,308.0 C1057.1,299.9 1060.2,294.5 1062.0,290.5 C1063.8,286.6 1064.0,286.4 1065.0,284.5 C1066.1,282.5 1067.1,280.7 1068.1,279.0 C1069.1,277.3 1070.1,275.8 1071.1,274.3 C1072.1,272.8 1073.2,271.4 1074.2,270.1 C1075.2,268.8 1076.2,267.6 1077.2,266.5 C1078.2,265.4 1079.2,264.3 1080.2,263.4 C1081.3,262.5 1082.3,261.6 1083.3,260.9 C1084.3,260.1 1085.3,259.4 1086.3,258.8 C1087.3,258.2 1088.4,257.6 1089.4,257.2 C1090.4,256.7 1091.4,256.3 1092.4,256.0 C1093.4,255.6 1094.4,255.4 1095.5,255.2 C1096.5,255.0 1097.5,254.8 1098.5,254.7 C1099.5,254.6 1100.5,254.6 1101.5,254.6 C1102.6,254.6 1103.6,254.7 1104.6,254.8 C1105.6,254.9 1106.6,255.1 1107.6,255.3 C1108.6,255.5 1109.7,255.7 1110.7,256.0 C1111.7,256.3 1112.7,256.6 1113.7,257.0 C1114.7,257.3 1115.7,257.7 1116.8,258.1 C1117.8,258.6 1118.8,259.0 1119.8,259.5 C1120.8,259.9 1121.8,260.4 1122.8,261.0 C1123.8,261.5 1124.9,262.0 1125.9,262.5 C1126.9,263.1 1127.9,263.7 1128.9,264.2 C1129.9,264.8 1130.9,265.4 1132.0,266.0 C1133.0,266.6 1134.0,267.2 1135.0,267.8 C1136.0,268.4 1137.0,269.0 1138.0,269.6 C1139.1,270.2 1140.1,270.8 1141.1,271.5 C1142.1,272.1 1143.1,272.7 1144.1,273.3 C1145.1,273.9 1146.2,274.6 1147.2,275.2 C1148.2,275.8 1149.2,276.5 1150.2,277.1 C1151.2,277.7 1152.2,278.4 1153.2,279.0 C1154.3,279.7 1155.3,280.3 1156.3,280.9 C1157.3,281.6 1158.3,282.3 1159.3,282.9 C1160.3,283.6 1161.4,284.2 1162.4,284.9 C1163.4,285.5 1164.4,286.2 1165.4,286.9 C1166.4,287.5 1167.4,288.2 1168.5,288.9 C1169.5,289.6 1170.5,290.2 1171.5,290.9 C1172.5,291.6 1173.5,292.3 1174.5,293.0 C1175.6,293.6 1176.6,294.3 1177.6,295.0 C1178.6,295.7 1179.6,296.4 1180.6,297.1 C1181.6,297.8 1182.7,298.5 1183.7,299.2 C1184.7,299.9 1185.7,300.6 1186.7,301.3 C1187.7,302.0 1188.7,302.8 1189.8,303.5 C1190.8,304.2 1191.8,304.9 1192.8,305.6 C1193.8,306.3 1194.8,307.1 1195.8,307.8 C1196.8,308.5 1197.9,309.2 1198.9,310.0 C1199.9,310.7 1200.9,311.4 1201.9,312.2 C1202.9,312.9 1203.9,313.6 1205.0,314.4 C1206.0,315.1 1207.0,315.8 1208.0,316.6 C1209.0,317.3 1210.0,318.1 1211.0,318.8 C1212.1,319.5 1213.1,320.3 1214.1,321.0 C1215.1,321.8 1216.1,322.5 1217.1,323.3 C1218.1,324.0 1219.2,324.8 1220.2,325.5 C1221.2,326.2 1222.2,327.0 1223.2,327.7 C1224.2,328.5 1225.2,329.2 1226.2,330.0 C1227.3,330.7 1228.3,331.5 1229.3,332.2 C1230.3,333.0 1231.3,333.7 1232.3,334.5 C1233.3,335.2 1234.4,336.0 1235.4,336.7 C1236.4,337.5 1237.4,338.2 1238.4,338.9 C1239.4,339.7 1240.4,340.4 1241.5,341.2 C1242.5,341.9 1243.5,342.7 1244.5,343.4 C1245.5,344.1 1246.5,344.9 1247.5,345.6 C1248.6,346.4 1249.6,347.1 1250.6,347.8 C1251.6,348.6 1252.6,349.3 1253.6,350.0 C1254.6,350.8 1255.7,351.5 1256.7,352.2 C1257.7,352.9 1258.7,353.7 1259.7,354.4 C1260.7,355.1 1261.7,355.8 1262.8,356.6 C1263.8,357.3 1264.8,358.0 1265.8,358.7 C1266.8,359.4 1267.8,360.1 1268.8,360.9 C1269.8,361.6 1270.9,362.3 1271.9,363.0 C1272.9,363.7 1273.9,364.4 1274.9,365.1 C1275.9,365.8 1276.9,366.5 1278.0,367.1 C1279.0,367.8 1280.0,368.5 1281.0,369.2 C1282.0,369.9 1283.0,370.6 1284.0,371.2 C1285.1,371.9 1286.1,372.6 1287.1,373.3 C1288.1,373.9 1289.1,374.6 1290.1,375.2 C1291.1,375.9 1292.2,376.6 1293.2,377.2 C1294.2,377.9 1295.2,378.5 1296.2,379.1 C1297.2,379.8 1298.2,380.4 1299.2,381.1 C1300.3,381.7 1301.3,382.3 1302.3,382.9 C1303.3,383.6 1304.3,384.2 1305.3,384.8 C1306.3,385.4 1307.4,386.0 1308.4,386.6 C1309.4,387.2 1310.4,387.8 1311.4,388.4 C1312.4,389.0 1313.4,389.6 1314.5,390.1 C1315.5,390.7 1316.5,391.3 1317.5,391.8 C1318.5,392.4 1319.5,393.0 1320.5,393.5 C1321.6,394.1 1322.6,394.6 1323.6,395.1 C1324.6,395.7 1325.6,396.2 1326.6,396.7 C1327.6,397.3 1328.7,397.8 1329.7,398.3 C1330.7,398.8 1331.7,399.3 1332.7,399.8 C1333.7,400.3 1334.7,400.8 1335.8,401.3 C1336.8,401.8 1337.8,402.2 1338.8,402.7 C1339.8,403.2 1340.8,403.6 1341.8,404.1 C1342.8,404.5 1343.9,405.0 1344.9,405.4 C1345.9,405.9 1346.9,406.3 1347.9,406.7 C1348.9,407.1 1349.9,407.5 1351.0,407.9 C1352.0,408.3 1353.5,408.9 1354.0,409.1" stroke="#0000cd" stroke-width="2.2" fill="none" stroke-linejoin="round" stroke-linecap="round"/>
<path d="M925.6,209.2 C926.8,213.6 930.0,226.2 932.5,235.9 C935.0,245.6 937.8,256.2 940.4,267.2 C943.0,278.2 945.6,288.6 948.2,301.7 C950.8,314.8 953.8,331.6 956.1,345.7 C958.5,359.8 960.6,375.7 962.3,386.4 C964.0,397.1 965.1,409.5 966.4,410.0 C967.7,410.5 968.5,406.1 970.2,389.6 C971.9,373.1 974.4,337.4 976.5,311.2 C978.6,285.0 980.9,251.5 982.7,232.7 C984.5,213.9 985.8,205.5 987.4,198.2 C989.0,190.9 990.5,188.3 992.1,188.8 C993.7,189.3 995.2,191.5 996.9,201.4 C998.6,211.3 1000.4,230.1 1002.2,248.4 C1004.0,266.7 1005.8,290.3 1007.8,311.2 C1009.8,332.1 1012.1,357.2 1014.1,373.9 C1016.1,390.6 1017.5,411.5 1019.5,411.5 C1021.5,411.5 1023.9,387.0 1026.0,373.9 C1028.1,360.8 1030.2,345.7 1032.3,333.1 C1034.4,320.6 1036.2,310.1 1038.5,298.6 C1040.8,287.1 1043.8,274.6 1046.4,264.1 C1049.0,253.7 1051.6,244.1 1054.2,235.9 C1056.8,227.7 1060.2,219.3 1062.0,214.6 C1063.8,210.0 1064.0,210.1 1065.0,208.0 C1066.1,205.9 1067.1,203.9 1068.1,202.1 C1069.1,200.3 1070.1,198.6 1071.1,197.0 C1072.1,195.4 1073.2,194.0 1074.2,192.6 C1075.2,191.3 1076.2,190.0 1077.2,188.9 C1078.2,187.8 1079.2,186.7 1080.2,185.8 C1081.3,184.8 1082.3,184.0 1083.3,183.2 C1084.3,182.4 1085.3,181.7 1086.3,181.1 C1087.3,180.4 1088.4,179.9 1089.4,179.4 C1090.4,178.9 1091.4,178.5 1092.4,178.1 C1093.4,177.8 1094.4,177.5 1095.5,177.2 C1096.5,176.9 1097.5,176.7 1098.5,176.5 C1099.5,176.3 1100.5,176.2 1101.5,176.1 C1102.6,176.0 1103.6,176.0 1104.6,175.9 C1105.6,175.9 1106.6,175.9 1107.6,176.0 C1108.6,176.1 1109.7,176.2 1110.7,176.3 C1111.7,176.4 1112.7,176.6 1113.7,176.8 C1114.7,177.0 1115.7,177.3 1116.8,177.5 C1117.8,177.8 1118.8,178.1 1119.8,178.5 C1120.8,178.8 1121.8,179.2 1122.8,179.6 C1123.8,180.0 1124.9,180.4 1125.9,180.9 C1126.9,181.3 1127.9,181.8 1128.9,182.4 C1129.9,182.9 1130.9,183.4 1132.0,184.0 C1133.0,184.6 1134.0,185.2 1135.0,185.8 C1136.0,186.4 1137.0,187.1 1138.0,187.7 C1139.1,188.4 1140.1,189.1 1141.1,189.8 C1142.1,190.5 1143.1,191.3 1144.1,192.0 C1145.1,192.8 1146.2,193.6 1147.2,194.4 C1148.2,195.2 1149.2,196.0 1150.2,196.8 C1151.2,197.6 1152.2,198.5 1153.2,199.4 C1154.3,200.2 1155.3,201.1 1156.3,202.0 C1157.3,202.9 1158.3,203.8 1159.3,204.7 C1160.3,205.7 1161.4,206.6 1162.4,207.5 C1163.4,208.5 1164.4,209.5 1165.4,210.4 C1166.4,211.4 1167.4,212.4 1168.5,213.4 C1169.5,214.3 1170.5,215.3 1171.5,216.4 C1172.5,217.4 1173.5,218.4 1174.5,219.4 C1175.6,220.4 1176.6,221.4 1177.6,222.4 C1178.6,223.5 1179.6,224.5 1180.6,225.5 C1181.6,226.6 1182.7,227.6 1183.7,228.6 C1184.7,229.7 1185.7,230.7 1186.7,231.8 C1187.7,232.8 1188.7,233.8 1189.8,234.9 C1190.8,235.9 1191.8,237.0 1192.8,238.0 C1193.8,239.0 1194.8,240.1 1195.8,241.1 C1196.8,242.2 1197.9,243.2 1198.9,244.3 C1199.9,245.3 1200.9,246.3 1201.9,247.4 C1202.9,248.4 1203.9,249.4 1205.0,250.5 C1206.0,251.5 1207.0,252.6 1208.0,253.6 C1209.0,254.6 1210.0,255.7 1211.0,256.7 C1212.1,257.7 1213.1,258.8 1214.1,259.8 C1215.1,260.8 1216.1,261.9 1217.1,262.9 C1218.1,263.9 1219.2,264.9 1220.2,265.9 C1221.2,267.0 1222.2,268.0 1223.2,269.0 C1224.2,270.0 1225.2,271.0 1226.2,272.0 C1227.3,273.1 1228.3,274.1 1229.3,275.1 C1230.3,276.1 1231.3,277.1 1232.3,278.1 C1233.3,279.1 1234.4,280.1 1235.4,281.1 C1236.4,282.1 1237.4,283.0 1238.4,284.0 C1239.4,285.0 1240.4,286.0 1241.5,287.0 C1242.5,288.0 1243.5,288.9 1244.5,289.9 C1245.5,290.9 1246.5,291.8 1247.5,292.8 C1248.6,293.7 1249.6,294.7 1250.6,295.6 C1251.6,296.6 1252.6,297.5 1253.6,298.5 C1254.6,299.4 1255.7,300.3 1256.7,301.3 C1257.7,302.2 1258.7,303.1 1259.7,304.0 C1260.7,305.0 1261.7,305.9 1262.8,306.8 C1263.8,307.7 1264.8,308.6 1265.8,309.5 C1266.8,310.4 1267.8,311.2 1268.8,312.1 C1269.8,313.0 1270.9,313.9 1271.9,314.7 C1272.9,315.6 1273.9,316.5 1274.9,317.3 C1275.9,318.2 1276.9,319.0 1278.0,319.9 C1279.0,320.7 1280.0,321.5 1281.0,322.4 C1282.0,323.2 1283.0,324.0 1284.0,324.8 C1285.1,325.6 1286.1,326.5 1287.1,327.3 C1288.1,328.1 1289.1,328.9 1290.1,329.6 C1291.1,330.4 1292.2,331.2 1293.2,332.0 C1294.2,332.8 1295.2,333.6 1296.2,334.3 C1297.2,335.1 1298.2,335.9 1299.2,336.6 C1300.3,337.4 1301.3,338.2 1302.3,338.9 C1303.3,339.7 1304.3,340.4 1305.3,341.1 C1306.3,341.9 1307.4,342.6 1308.4,343.4 C1309.4,344.1 1310.4,344.8 1311.4,345.6 C1312.4,346.3 1313.4,347.0 1314.5,347.7 C1315.5,348.4 1316.5,349.2 1317.5,349.9 C1318.5,350.6 1319.5,351.3 1320.5,352.0 C1321.6,352.7 1322.6,353.4 1323.6,354.1 C1324.6,354.8 1325.6,355.5 1326.6,356.2 C1327.6,356.9 1328.7,357.6 1329.7,358.3 C1330.7,358.9 1331.7,359.6 1332.7,360.3 C1333.7,361.0 1334.7,361.7 1335.8,362.4 C1336.8,363.0 1337.8,363.7 1338.8,364.4 C1339.8,365.1 1340.8,365.7 1341.8,366.4 C1342.8,367.1 1343.9,367.8 1344.9,368.4 C1345.9,369.1 1346.9,369.8 1347.9,370.4 C1348.9,371.1 1349.9,371.8 1351.0,372.4 C1352.0,373.1 1353.5,374.1 1354.0,374.4" stroke="#e60000" stroke-width="3.2" fill="none" stroke-linejoin="round" stroke-linecap="round"/>
</g>
<rect x="925.5" y="133.5" width="429" height="315" fill="none" stroke="#000" stroke-width="1"/>
<text transform="translate(921.5,452.1) scale(0.86,1)" text-anchor="end" font-size="12" fill="#000">0</text>
<text transform="translate(921.5,412.7) scale(0.86,1)" text-anchor="end" font-size="12" fill="#000">5</text>
<text transform="translate(921.5,373.4) scale(0.86,1)" text-anchor="end" font-size="12" fill="#000">10</text>
<text transform="translate(921.5,334.0) scale(0.86,1)" text-anchor="end" font-size="12" fill="#000">15</text>
<text transform="translate(921.5,294.6) scale(0.86,1)" text-anchor="end" font-size="12" fill="#000">20</text>
<text transform="translate(921.5,255.2) scale(0.86,1)" text-anchor="end" font-size="12" fill="#000">25</text>
<text transform="translate(921.5,215.8) scale(0.86,1)" text-anchor="end" font-size="12" fill="#000">30</text>
<text transform="translate(921.5,176.5) scale(0.86,1)" text-anchor="end" font-size="12" fill="#000">35</text>
<text transform="translate(921.5,137.1) scale(0.86,1)" text-anchor="end" font-size="12" fill="#000">40</text>
<text transform="translate(1372.5,137.1) scale(0.86,1)" text-anchor="middle" font-size="12" fill="#000">2</text>
<text transform="translate(1372.5,176.5) scale(0.86,1)" text-anchor="middle" font-size="12" fill="#000">1.75</text>
<text transform="translate(1372.5,215.8) scale(0.86,1)" text-anchor="middle" font-size="12" fill="#000">1.5</text>
<text transform="translate(1372.5,255.2) scale(0.86,1)" text-anchor="middle" font-size="12" fill="#000">1.25</text>
<text transform="translate(1372.5,294.6) scale(0.86,1)" text-anchor="middle" font-size="12" fill="#000">1</text>
<text transform="translate(1372.5,334.0) scale(0.86,1)" text-anchor="middle" font-size="12" fill="#000">0.75</text>
<text transform="translate(1372.5,373.4) scale(0.86,1)" text-anchor="middle" font-size="12" fill="#000">0.5</text>
<text transform="translate(1372.5,412.7) scale(0.86,1)" text-anchor="middle" font-size="12" fill="#000">0.25</text>
<text transform="translate(1372.5,452.1) scale(0.86,1)" text-anchor="middle" font-size="12" fill="#000">0</text>
<text transform="translate(964.6,459.5) scale(0.86,1)" text-anchor="middle" font-size="12" fill="#000">20</text>
<text transform="translate(1016.3,459.5) scale(0.86,1)" text-anchor="middle" font-size="12" fill="#000">50</text>
<text transform="translate(1055.5,459.5) scale(0.86,1)" text-anchor="middle" font-size="12" fill="#000">100</text>
<text transform="translate(1094.6,459.5) scale(0.86,1)" text-anchor="middle" font-size="12" fill="#000">200</text>
<text transform="translate(1146.3,459.5) scale(0.86,1)" text-anchor="middle" font-size="12" fill="#000">500</text>
<text transform="translate(1185.4,459.5) scale(0.86,1)" text-anchor="middle" font-size="12" fill="#000">1k</text>
<text transform="translate(1224.5,459.5) scale(0.86,1)" text-anchor="middle" font-size="12" fill="#000">2k</text>
<text transform="translate(1276.3,459.5) scale(0.86,1)" text-anchor="middle" font-size="12" fill="#000">5k</text>
<text transform="translate(1315.4,459.5) scale(0.86,1)" text-anchor="middle" font-size="12" fill="#000">10k</text>
<text transform="translate(1354.5,459.5) scale(0.86,1)" text-anchor="middle" font-size="12" fill="#000">20k</text>
<text transform="translate(920.5,459.5) scale(0.86,1)" text-anchor="start" font-size="12" fill="#000">10Hz</text>
<text x="1140.0" y="129.6" text-anchor="middle" font-size="12" fill="#000">Power</text>
<text transform="translate(926.5,128.2) scale(0.95,1)" font-size="11" fill="#000">W</text>
<text transform="translate(1352,128.2) scale(0.95,1)" text-anchor="end" font-size="11" fill="#000">A</text>
<line x1="1435" y1="432.5" x2="1865" y2="432.5" stroke="#dadada" stroke-width="1"/>
<line x1="1435" y1="416.5" x2="1865" y2="416.5" stroke="#dadada" stroke-width="1"/>
<line x1="1435" y1="400.5" x2="1865" y2="400.5" stroke="#dadada" stroke-width="1"/>
<line x1="1435" y1="385.5" x2="1865" y2="385.5" stroke="#dadada" stroke-width="1"/>
<line x1="1435" y1="353.5" x2="1865" y2="353.5" stroke="#dadada" stroke-width="1"/>
<line x1="1435" y1="337.5" x2="1865" y2="337.5" stroke="#dadada" stroke-width="1"/>
<line x1="1435" y1="322.5" x2="1865" y2="322.5" stroke="#dadada" stroke-width="1"/>
<line x1="1435" y1="306.5" x2="1865" y2="306.5" stroke="#dadada" stroke-width="1"/>
<line x1="1435" y1="274.5" x2="1865" y2="274.5" stroke="#dadada" stroke-width="1"/>
<line x1="1435" y1="259.5" x2="1865" y2="259.5" stroke="#dadada" stroke-width="1"/>
<line x1="1435" y1="243.5" x2="1865" y2="243.5" stroke="#dadada" stroke-width="1"/>
<line x1="1435" y1="227.5" x2="1865" y2="227.5" stroke="#dadada" stroke-width="1"/>
<line x1="1435" y1="196.5" x2="1865" y2="196.5" stroke="#dadada" stroke-width="1"/>
<line x1="1435" y1="180.5" x2="1865" y2="180.5" stroke="#dadada" stroke-width="1"/>
<line x1="1435" y1="164.5" x2="1865" y2="164.5" stroke="#dadada" stroke-width="1"/>
<line x1="1435" y1="148.5" x2="1865" y2="148.5" stroke="#dadada" stroke-width="1"/>
<line x1="1473.5" y1="134" x2="1473.5" y2="448" stroke="#cacaca" stroke-width="1"/>
<line x1="1496.5" y1="134" x2="1496.5" y2="448" stroke="#cacaca" stroke-width="1"/>
<line x1="1512.5" y1="134" x2="1512.5" y2="448" stroke="#cacaca" stroke-width="1"/>
<line x1="1525.5" y1="134" x2="1525.5" y2="448" stroke="#cacaca" stroke-width="1"/>
<line x1="1535.5" y1="134" x2="1535.5" y2="448" stroke="#cacaca" stroke-width="1"/>
<line x1="1544.5" y1="134" x2="1544.5" y2="448" stroke="#cacaca" stroke-width="1"/>
<line x1="1551.5" y1="134" x2="1551.5" y2="448" stroke="#cacaca" stroke-width="1"/>
<line x1="1558.5" y1="134" x2="1558.5" y2="448" stroke="#cacaca" stroke-width="1"/>
<line x1="1603.5" y1="134" x2="1603.5" y2="448" stroke="#cacaca" stroke-width="1"/>
<line x1="1626.5" y1="134" x2="1626.5" y2="448" stroke="#cacaca" stroke-width="1"/>
<line x1="1643.5" y1="134" x2="1643.5" y2="448" stroke="#cacaca" stroke-width="1"/>
<line x1="1655.5" y1="134" x2="1655.5" y2="448" stroke="#cacaca" stroke-width="1"/>
<line x1="1666.5" y1="134" x2="1666.5" y2="448" stroke="#cacaca" stroke-width="1"/>
<line x1="1674.5" y1="134" x2="1674.5" y2="448" stroke="#cacaca" stroke-width="1"/>
<line x1="1682.5" y1="134" x2="1682.5" y2="448" stroke="#cacaca" stroke-width="1"/>
<line x1="1689.5" y1="134" x2="1689.5" y2="448" stroke="#cacaca" stroke-width="1"/>
<line x1="1734.5" y1="134" x2="1734.5" y2="448" stroke="#cacaca" stroke-width="1"/>
<line x1="1757.5" y1="134" x2="1757.5" y2="448" stroke="#cacaca" stroke-width="1"/>
<line x1="1773.5" y1="134" x2="1773.5" y2="448" stroke="#cacaca" stroke-width="1"/>
<line x1="1786.5" y1="134" x2="1786.5" y2="448" stroke="#cacaca" stroke-width="1"/>
<line x1="1796.5" y1="134" x2="1796.5" y2="448" stroke="#cacaca" stroke-width="1"/>
<line x1="1805.5" y1="134" x2="1805.5" y2="448" stroke="#cacaca" stroke-width="1"/>
<line x1="1813.5" y1="134" x2="1813.5" y2="448" stroke="#cacaca" stroke-width="1"/>
<line x1="1819.5" y1="134" x2="1819.5" y2="448" stroke="#cacaca" stroke-width="1"/>
<line x1="1435" y1="369.5" x2="1865" y2="369.5" stroke="#6e6e6e" stroke-width="1"/>
<line x1="1435" y1="290.5" x2="1865" y2="290.5" stroke="#6e6e6e" stroke-width="1"/>
<line x1="1435" y1="211.5" x2="1865" y2="211.5" stroke="#6e6e6e" stroke-width="1"/>
<line x1="1564.5" y1="134" x2="1564.5" y2="448" stroke="#6e6e6e" stroke-width="1"/>
<line x1="1695.5" y1="134" x2="1695.5" y2="448" stroke="#6e6e6e" stroke-width="1"/>
<line x1="1825.5" y1="134" x2="1825.5" y2="448" stroke="#6e6e6e" stroke-width="1"/>
<clipPath id="clip20"><rect x="1435" y="134" width="430" height="314"/></clipPath>
<g clip-path="url(#clip20)">
<path d="M1434.5,380.0 C1434.6,379.6 1435.0,378.4 1435.2,377.6 C1435.5,376.8 1435.7,376.0 1436.0,375.2 C1436.2,374.4 1436.5,373.6 1436.7,372.8 C1437.0,372.0 1437.2,371.2 1437.5,370.4 C1437.7,369.6 1438.0,368.8 1438.2,368.0 C1438.4,367.2 1438.7,366.4 1438.9,365.6 C1439.2,364.8 1439.4,364.0 1439.7,363.2 C1439.9,362.4 1440.2,361.6 1440.4,360.8 C1440.7,360.0 1440.9,359.2 1441.2,358.4 C1441.4,357.6 1441.7,356.8 1441.9,356.0 C1442.2,355.2 1442.4,354.4 1442.7,353.5 C1442.9,352.7 1443.2,351.9 1443.4,351.1 C1443.6,350.3 1443.9,349.5 1444.1,348.7 C1444.4,347.9 1444.6,347.1 1444.9,346.3 C1445.1,345.5 1445.4,344.7 1445.6,343.9 C1445.9,343.1 1446.1,342.3 1446.4,341.5 C1446.6,340.7 1446.9,339.9 1447.1,339.1 C1447.4,338.3 1447.6,337.5 1447.8,336.7 C1448.1,335.9 1448.3,335.1 1448.6,334.3 C1448.8,333.5 1449.1,332.7 1449.3,331.9 C1449.6,331.1 1449.8,330.3 1450.1,329.5 C1450.3,328.7 1450.6,327.9 1450.8,327.1 C1451.0,326.3 1451.3,325.5 1451.5,324.7 C1451.8,323.9 1452.0,323.1 1452.3,322.3 C1452.5,321.4 1452.8,320.6 1453.0,319.8 C1453.2,319.0 1453.5,318.2 1453.7,317.4 C1454.0,316.6 1454.2,315.8 1454.5,315.0 C1454.7,314.2 1455.0,313.4 1455.2,312.6 C1455.4,311.8 1455.7,311.0 1455.9,310.2 C1456.2,309.4 1456.4,308.6 1456.6,307.8 C1456.9,307.0 1457.1,306.2 1457.4,305.4 C1457.6,304.6 1457.9,303.8 1458.1,303.0 C1458.3,302.2 1458.6,301.4 1458.8,300.6 C1459.1,299.8 1459.3,299.0 1459.5,298.2 C1459.8,297.4 1460.0,296.6 1460.3,295.8 C1460.5,295.0 1460.7,294.2 1461.0,293.4 C1461.2,292.5 1461.4,291.7 1461.7,290.9 C1461.9,290.1 1462.2,289.3 1462.4,288.5 C1462.6,287.7 1462.9,286.9 1463.1,286.1 C1463.4,285.3 1463.6,284.5 1463.8,283.7 C1464.1,282.9 1464.3,282.1 1464.5,281.3 C1464.8,280.5 1465.0,279.7 1465.3,278.9 C1465.5,278.1 1465.7,277.3 1466.0,276.5 C1466.2,275.6 1466.5,274.8 1466.7,274.0 C1466.9,273.2 1467.2,272.4 1467.4,271.6 C1467.7,270.8 1467.9,270.0 1468.1,269.2 C1468.4,268.4 1468.6,267.6 1468.9,266.8 C1469.1,266.0 1469.3,265.1 1469.6,264.3 C1469.8,263.5 1470.1,262.7 1470.3,261.9 C1470.5,261.1 1470.8,260.3 1471.0,259.5 C1471.3,258.7 1471.5,257.9 1471.7,257.1 C1472.0,256.3 1472.2,255.5 1472.4,254.7 C1472.7,253.9 1472.9,253.1 1473.1,252.3 C1473.4,251.6 1473.6,250.8 1473.8,250.0 C1474.0,249.2 1474.3,248.5 1474.5,247.7 C1474.7,246.9 1474.9,246.2 1475.2,245.4 C1475.4,244.6 1475.6,243.8 1475.8,243.0 C1476.1,242.2 1476.3,241.4 1476.6,240.5 C1476.8,239.7 1477.1,238.8 1477.3,237.9 C1477.6,237.0 1477.9,236.0 1478.2,235.0 C1478.5,234.1 1478.8,233.0 1479.1,232.1 C1479.5,231.1 1479.8,230.1 1480.2,229.4 C1480.6,228.6 1481.0,227.9 1481.5,227.4 C1481.9,226.9 1482.4,226.6 1482.9,226.6 C1483.4,226.5 1484.0,226.8 1484.5,227.1 C1485.1,227.5 1485.6,228.2 1486.1,228.8 C1486.6,229.5 1487.0,230.4 1487.4,231.2 C1487.8,232.1 1488.1,233.0 1488.3,233.9 C1488.6,234.9 1488.8,235.9 1489.0,236.8 C1489.2,237.8 1489.4,238.8 1489.5,239.7 C1489.7,240.6 1489.8,241.5 1489.9,242.3 C1490.1,243.2 1490.2,243.9 1490.3,244.7 C1490.4,245.5 1490.5,246.3 1490.6,247.0 C1490.7,247.8 1490.8,248.6 1490.9,249.4 C1491.0,250.2 1491.1,251.0 1491.2,251.8 C1491.3,252.6 1491.4,253.4 1491.5,254.2 C1491.6,255.0 1491.7,255.8 1491.8,256.7 C1491.9,257.5 1492.0,258.3 1492.1,259.1 C1492.2,260.0 1492.2,260.8 1492.3,261.6 C1492.4,262.5 1492.5,263.3 1492.6,264.2 C1492.6,265.0 1492.7,265.8 1492.8,266.7 C1492.9,267.5 1493.0,268.4 1493.0,269.2 C1493.1,270.1 1493.2,270.9 1493.3,271.8 C1493.3,272.6 1493.4,273.5 1493.5,274.3 C1493.5,275.2 1493.6,276.0 1493.7,276.9 C1493.8,277.7 1493.8,278.6 1493.9,279.4 C1494.0,280.3 1494.0,281.1 1494.1,281.9 C1494.2,282.8 1494.2,283.6 1494.3,284.4 C1494.4,285.3 1494.4,286.1 1494.5,286.9 C1494.6,287.8 1494.6,288.6 1494.7,289.4 C1494.7,290.3 1494.8,291.1 1494.9,291.9 C1494.9,292.8 1495.0,293.6 1495.0,294.4 C1495.1,295.2 1495.2,296.1 1495.2,296.9 C1495.3,297.7 1495.3,298.6 1495.4,299.4 C1495.5,300.2 1495.5,301.0 1495.6,301.9 C1495.6,302.7 1495.7,303.5 1495.7,304.4 C1495.8,305.2 1495.9,306.0 1495.9,306.8 C1496.0,307.7 1496.0,308.5 1496.1,309.3 C1496.1,310.2 1496.2,311.0 1496.2,311.9 C1496.3,312.7 1496.3,313.5 1496.4,314.4 C1496.5,315.2 1496.5,316.1 1496.6,316.9 C1496.6,317.7 1496.7,318.6 1496.7,319.4 C1496.8,320.3 1496.8,321.1 1496.9,322.0 C1496.9,322.8 1497.0,323.7 1497.0,324.5 C1497.1,325.4 1497.1,326.3 1497.2,327.1 C1497.2,328.0 1497.3,328.8 1497.3,329.7 C1497.4,330.5 1497.4,331.4 1497.5,332.2 C1497.5,333.1 1497.6,333.9 1497.6,334.8 C1497.7,335.6 1497.7,336.5 1497.8,337.3 C1497.8,338.1 1497.9,339.0 1498.0,339.8 C1498.0,340.7 1498.1,341.5 1498.1,342.3 C1498.2,343.1 1498.2,344.0 1498.3,344.8 C1498.3,345.6 1498.4,346.4 1498.5,347.2 C1498.5,348.0 1498.6,348.8 1498.6,349.6 C1498.7,350.4 1498.8,351.2 1498.8,352.0 C1498.9,352.8 1499.0,353.6 1499.0,354.4 C1499.1,355.2 1499.1,355.9 1499.2,356.7 C1499.3,357.5 1499.3,358.3 1499.4,359.1 C1499.5,360.0 1499.5,360.8 1499.6,361.6 C1499.7,362.5 1499.8,363.4 1499.8,364.3 C1499.9,365.2 1500.0,366.1 1500.0,367.0 C1500.1,368.0 1500.2,369.0 1500.2,370.0 C1500.3,371.0 1500.4,372.1 1500.4,373.2 C1500.5,374.3 1500.6,375.4 1500.6,376.4 C1500.7,377.4 1500.8,378.5 1500.8,379.4 C1500.9,380.3 1501.0,381.2 1501.0,381.9 C1501.1,382.6 1501.2,383.3 1501.2,383.7 C1501.3,384.1 1501.4,384.5 1501.4,384.6 C1501.5,384.6 1501.5,384.6 1501.6,384.2 C1501.7,383.9 1501.7,383.3 1501.8,382.5 C1501.8,381.7 1501.9,380.7 1502.0,379.6 C1502.0,378.5 1502.1,377.2 1502.2,376.0 C1502.2,374.8 1502.3,373.4 1502.4,372.2 C1502.4,371.0 1502.5,369.9 1502.6,368.8 C1502.7,367.8 1502.8,366.9 1502.8,366.0 C1502.9,365.2 1503.0,364.4 1503.1,363.7 C1503.2,362.9 1503.3,362.2 1503.3,361.4 C1503.4,360.6 1503.5,359.9 1503.6,359.1 C1503.6,358.3 1503.7,357.5 1503.7,356.7 C1503.8,355.9 1503.8,355.1 1503.9,354.3 C1503.9,353.5 1504.0,352.7 1504.0,351.8 C1504.1,351.0 1504.1,350.2 1504.2,349.4 C1504.2,348.5 1504.3,347.7 1504.3,346.8 C1504.3,346.0 1504.4,345.2 1504.4,344.3 C1504.5,343.5 1504.5,342.6 1504.5,341.8 C1504.6,340.9 1504.6,340.1 1504.7,339.3 C1504.7,338.4 1504.7,337.6 1504.8,336.7 C1504.8,335.9 1504.9,335.1 1504.9,334.2 C1505.0,333.4 1505.0,332.5 1505.0,331.7 C1505.1,330.9 1505.1,330.0 1505.2,329.2 C1505.2,328.3 1505.3,327.5 1505.3,326.7 C1505.3,325.8 1505.4,325.0 1505.4,324.1 C1505.5,323.3 1505.5,322.5 1505.6,321.6 C1505.6,320.8 1505.7,319.9 1505.7,319.1 C1505.7,318.3 1505.8,317.4 1505.8,316.6 C1505.9,315.7 1505.9,314.9 1506.0,314.1 C1506.0,313.2 1506.1,312.4 1506.1,311.6 C1506.1,310.7 1506.2,309.9 1506.2,309.0 C1506.3,308.2 1506.3,307.4 1506.4,306.5 C1506.4,305.7 1506.5,304.8 1506.5,304.0 C1506.6,303.2 1506.6,302.3 1506.6,301.5 C1506.7,300.7 1506.7,299.8 1506.8,299.0 C1506.8,298.1 1506.9,297.3 1506.9,296.5 C1507.0,295.6 1507.0,294.8 1507.0,294.0 C1507.1,293.1 1507.1,292.3 1507.2,291.4 C1507.2,290.6 1507.3,289.8 1507.3,288.9 C1507.3,288.1 1507.4,287.3 1507.4,286.4 C1507.5,285.6 1507.5,284.7 1507.6,283.9 C1507.6,283.1 1507.6,282.2 1507.7,281.4 C1507.7,280.6 1507.8,279.7 1507.8,278.9 C1507.9,278.0 1507.9,277.2 1507.9,276.4 C1508.0,275.5 1508.0,274.7 1508.1,273.9 C1508.1,273.0 1508.1,272.2 1508.2,271.3 C1508.2,270.5 1508.2,269.7 1508.3,268.8 C1508.3,268.0 1508.4,267.2 1508.4,266.3 C1508.4,265.5 1508.5,264.6 1508.5,263.8 C1508.5,263.0 1508.6,262.1 1508.6,261.3 C1508.7,260.5 1508.7,259.6 1508.7,258.8 C1508.8,257.9 1508.8,257.1 1508.8,256.3 C1508.9,255.4 1508.9,254.6 1508.9,253.8 C1509.0,252.9 1509.0,252.1 1509.0,251.2 C1509.1,250.4 1509.1,249.6 1509.1,248.7 C1509.2,247.9 1509.2,247.0 1509.2,246.2 C1509.3,245.4 1509.3,244.5 1509.3,243.7 C1509.4,242.9 1509.4,242.0 1509.4,241.2 C1509.5,240.3 1509.5,239.5 1509.5,238.7 C1509.6,237.8 1509.6,237.0 1509.6,236.1 C1509.6,235.3 1509.7,234.5 1509.7,233.6 C1509.7,232.8 1509.8,232.0 1509.8,231.1 C1509.8,230.3 1509.9,229.4 1509.9,228.6 C1509.9,227.8 1509.9,226.9 1510.0,226.1 C1510.0,225.2 1510.0,224.4 1510.1,223.6 C1510.1,222.7 1510.1,221.9 1510.2,221.1 C1510.2,220.2 1510.2,219.4 1510.2,218.5 C1510.3,217.7 1510.3,216.9 1510.3,216.0 C1510.4,215.2 1510.4,214.3 1510.4,213.5 C1510.4,212.7 1510.5,211.8 1510.5,211.0 C1510.5,210.2 1510.6,209.3 1510.6,208.5 C1510.6,207.6 1510.6,206.8 1510.7,206.0 C1510.7,205.1 1510.7,204.3 1510.8,203.4 C1510.8,202.6 1510.8,201.8 1510.9,200.9 C1510.9,200.1 1510.9,199.2 1510.9,198.4 C1511.0,197.6 1511.0,196.7 1511.0,195.9 C1511.1,195.1 1511.1,194.2 1511.1,193.4 C1511.1,192.5 1511.2,191.7 1511.2,190.9 C1511.2,190.0 1511.3,189.2 1511.3,188.3 C1511.3,187.5 1511.4,186.7 1511.4,185.8 C1511.4,185.0 1511.4,184.1 1511.5,183.3 C1511.5,182.5 1511.5,181.6 1511.6,180.8 C1511.6,180.0 1511.6,179.1 1511.7,178.3 C1511.7,177.4 1511.7,176.6 1511.8,175.8 C1511.8,174.9 1511.8,174.1 1511.9,173.2 C1511.9,172.4 1511.9,171.6 1512.0,170.7 C1512.0,169.9 1512.0,169.1 1512.1,168.2 C1512.1,167.4 1512.1,166.5 1512.2,165.7 C1512.2,164.9 1512.2,164.0 1512.3,163.2 C1512.3,162.3 1512.3,161.5 1512.4,160.7 C1512.4,159.8 1512.4,159.0 1512.5,158.2 C1512.5,157.3 1512.5,156.5 1512.6,155.6 C1512.6,154.8 1512.6,154.0 1512.7,153.1 C1512.7,152.3 1512.8,151.5 1512.8,150.6 C1512.8,149.8 1512.9,148.9 1512.9,148.1 C1512.9,147.3 1513.0,146.4 1513.0,145.6 C1513.1,144.8 1513.1,143.9 1513.1,143.1 C1513.2,142.2 1513.2,141.4 1513.3,140.6 C1513.3,139.7 1513.4,138.9 1513.4,138.0 C1513.4,137.2 1513.5,136.4 1513.5,135.5 C1513.6,134.7 1513.6,133.9 1513.7,133.0 C1513.7,132.2 1513.7,131.3 1513.8,130.5 C1513.8,129.7 1513.9,128.4 1513.9,128.0" stroke="#4cdcd2" stroke-width="1.2" fill="none" stroke-linejoin="round" stroke-linecap="round"/>
<path d="M1434.0,365.3 L1866.0,365.3" stroke="#2a2ad8" stroke-width="1.2" fill="none" stroke-linejoin="round" stroke-linecap="round"/>
<path d="M1433.6,130.2 C1434.0,130.5 1435.1,131.2 1435.8,131.8 C1436.5,132.3 1437.2,132.8 1437.8,133.3 C1438.5,133.9 1439.2,134.4 1439.9,135.0 C1440.5,135.5 1441.2,136.1 1441.8,136.6 C1442.4,137.2 1443.0,137.8 1443.6,138.4 C1444.2,139.0 1444.8,139.5 1445.4,140.1 C1446.0,140.7 1446.6,141.4 1447.1,142.0 C1447.7,142.6 1448.2,143.2 1448.8,143.8 C1449.3,144.5 1449.8,145.1 1450.3,145.8 C1450.8,146.4 1451.3,147.1 1451.8,147.7 C1452.3,148.4 1452.8,149.0 1453.3,149.7 C1453.7,150.4 1454.2,151.1 1454.6,151.7 C1455.1,152.4 1455.5,153.1 1456.0,153.8 C1456.4,154.5 1456.8,155.2 1457.2,155.9 C1457.6,156.6 1458.0,157.4 1458.4,158.1 C1458.8,158.8 1459.2,159.5 1459.6,160.3 C1459.9,161.0 1460.3,161.7 1460.7,162.5 C1461.0,163.2 1461.4,164.0 1461.7,164.7 C1462.1,165.5 1462.4,166.2 1462.7,167.0 C1463.0,167.7 1463.4,168.5 1463.7,169.3 C1464.0,170.0 1464.3,170.8 1464.6,171.6 C1464.9,172.4 1465.2,173.1 1465.5,173.9 C1465.7,174.7 1466.0,175.5 1466.3,176.3 C1466.6,177.1 1466.8,177.9 1467.1,178.7 C1467.3,179.5 1467.6,180.3 1467.8,181.1 C1468.1,181.9 1468.3,182.7 1468.6,183.5 C1468.8,184.3 1469.0,185.1 1469.3,185.9 C1469.5,186.7 1469.7,187.5 1469.9,188.4 C1470.2,189.2 1470.4,190.0 1470.6,190.8 C1470.8,191.6 1471.0,192.4 1471.2,193.3 C1471.4,194.1 1471.6,194.9 1471.8,195.7 C1472.0,196.6 1472.2,197.4 1472.4,198.2 C1472.6,199.1 1472.8,199.9 1472.9,200.7 C1473.1,201.5 1473.3,202.4 1473.5,203.2 C1473.7,204.0 1473.8,204.9 1474.0,205.7 C1474.2,206.5 1474.4,207.4 1474.5,208.2 C1474.7,209.0 1474.9,209.8 1475.0,210.7 C1475.2,211.5 1475.4,212.3 1475.5,213.2 C1475.7,214.0 1475.9,214.8 1476.0,215.6 C1476.2,216.5 1476.4,217.3 1476.5,218.1 C1476.7,218.9 1476.9,219.8 1477.0,220.6 C1477.2,221.4 1477.3,222.2 1477.5,223.1 C1477.7,223.9 1477.8,224.7 1478.0,225.5 C1478.2,226.3 1478.3,227.2 1478.5,228.0 C1478.6,228.8 1478.8,229.6 1478.9,230.4 C1479.1,231.2 1479.3,232.1 1479.4,232.9 C1479.6,233.7 1479.7,234.5 1479.9,235.3 C1480.0,236.1 1480.2,237.0 1480.3,237.8 C1480.5,238.6 1480.6,239.4 1480.8,240.2 C1480.9,241.0 1481.1,241.8 1481.2,242.6 C1481.4,243.5 1481.5,244.3 1481.7,245.1 C1481.8,245.9 1482.0,246.7 1482.1,247.5 C1482.3,248.3 1482.4,249.2 1482.5,250.0 C1482.7,250.8 1482.8,251.6 1483.0,252.4 C1483.1,253.2 1483.2,254.0 1483.4,254.8 C1483.5,255.7 1483.7,256.5 1483.8,257.3 C1483.9,258.1 1484.1,258.9 1484.2,259.7 C1484.3,260.5 1484.5,261.4 1484.6,262.2 C1484.7,263.0 1484.9,263.8 1485.0,264.6 C1485.1,265.4 1485.3,266.3 1485.4,267.1 C1485.5,267.9 1485.6,268.7 1485.8,269.5 C1485.9,270.3 1486.0,271.2 1486.1,272.0 C1486.3,272.8 1486.4,273.6 1486.5,274.4 C1486.6,275.3 1486.7,276.1 1486.9,276.9 C1487.0,277.7 1487.1,278.6 1487.2,279.4 C1487.3,280.2 1487.4,281.0 1487.6,281.9 C1487.7,282.7 1487.8,283.5 1487.9,284.3 C1488.0,285.2 1488.1,286.0 1488.2,286.8 C1488.3,287.7 1488.4,288.5 1488.5,289.3 C1488.7,290.1 1488.8,291.0 1488.9,291.8 C1489.0,292.7 1489.1,293.5 1489.2,294.3 C1489.3,295.2 1489.4,296.0 1489.5,296.8 C1489.6,297.7 1489.7,298.5 1489.7,299.4 C1489.8,300.2 1489.9,301.1 1490.0,301.9 C1490.1,302.8 1490.2,303.6 1490.3,304.5 C1490.4,305.3 1490.5,306.2 1490.6,307.0 C1490.6,307.9 1490.7,308.7 1490.8,309.6 C1490.9,310.4 1491.0,311.3 1491.0,312.1 C1491.1,313.0 1491.2,313.9 1491.3,314.7 C1491.4,315.6 1491.4,316.5 1491.5,317.3 C1491.6,318.2 1491.6,319.0 1491.7,319.9 C1491.8,320.8 1491.9,321.6 1491.9,322.5 C1492.0,323.4 1492.1,324.2 1492.1,325.1 C1492.2,325.9 1492.3,326.8 1492.3,327.7 C1492.4,328.5 1492.5,329.4 1492.5,330.2 C1492.6,331.1 1492.7,331.9 1492.7,332.8 C1492.8,333.6 1492.9,334.5 1492.9,335.3 C1493.0,336.2 1493.1,337.0 1493.1,337.8 C1493.2,338.7 1493.2,339.5 1493.3,340.3 C1493.4,341.2 1493.4,342.0 1493.5,342.8 C1493.6,343.6 1493.6,344.4 1493.7,345.2 C1493.8,346.1 1493.8,346.9 1493.9,347.7 C1494.0,348.5 1494.0,349.2 1494.1,350.0 C1494.2,350.8 1494.2,351.6 1494.3,352.4 C1494.4,353.1 1494.5,353.9 1494.5,354.6 C1494.6,355.4 1494.7,356.2 1494.7,356.9 C1494.8,357.6 1494.9,358.4 1495.0,359.1 C1495.1,359.8 1495.1,360.5 1495.2,361.2 C1495.3,361.9 1495.4,362.6 1495.5,363.3 C1495.5,364.0 1495.6,364.7 1495.7,365.4 C1495.8,366.1 1495.9,366.8 1495.9,367.6 C1496.0,368.3 1496.1,369.0 1496.2,369.7 C1496.3,370.5 1496.3,371.2 1496.4,372.0 C1496.5,372.8 1496.6,373.6 1496.6,374.4 C1496.7,375.2 1496.8,376.1 1496.9,377.0 C1496.9,377.9 1497.0,378.8 1497.0,379.7 C1497.1,380.7 1497.2,381.7 1497.2,382.7 C1497.3,383.7 1497.3,384.8 1497.3,385.9 C1497.4,387.0 1497.4,388.1 1497.5,389.3 C1497.5,390.4 1497.5,391.6 1497.6,392.8 C1497.6,394.0 1497.7,395.2 1497.7,396.3 C1497.8,397.5 1497.8,398.7 1497.9,399.8 C1497.9,401.0 1498.0,402.1 1498.0,403.3 C1498.1,404.4 1498.1,405.5 1498.2,406.5 C1498.3,407.6 1498.4,408.6 1498.5,409.6 C1498.5,410.5 1498.6,411.4 1498.8,412.3 C1498.9,413.1 1499.0,413.9 1499.1,414.7 C1499.2,415.4 1499.4,416.1 1499.5,416.7 C1499.7,417.2 1499.8,417.8 1500.0,418.2 C1500.1,418.6 1500.3,419.0 1500.5,419.3 C1500.6,419.6 1500.8,419.7 1501.0,419.8 C1501.2,419.9 1501.4,419.9 1501.5,419.8 C1501.7,419.8 1501.9,419.6 1502.1,419.3 C1502.3,419.0 1502.5,418.6 1502.7,418.1 C1502.8,417.6 1503.0,416.9 1503.2,416.2 C1503.4,415.5 1503.6,414.6 1503.7,413.6 C1503.9,412.7 1504.1,411.6 1504.2,410.5 C1504.4,409.4 1504.6,408.2 1504.7,407.1 C1504.8,405.9 1505.0,404.7 1505.1,403.6 C1505.2,402.4 1505.3,401.2 1505.4,400.2 C1505.4,399.1 1505.5,398.1 1505.5,397.1 C1505.6,396.1 1505.6,395.2 1505.7,394.3 C1505.7,393.4 1505.7,392.5 1505.8,391.6 C1505.8,390.8 1505.8,389.9 1505.9,389.0 C1505.9,388.2 1506.0,387.3 1506.0,386.4 C1506.1,385.4 1506.2,384.5 1506.3,383.6 C1506.4,382.6 1506.6,381.6 1506.7,380.7 C1506.9,379.7 1507.0,378.7 1507.2,377.7 C1507.4,376.7 1507.6,375.7 1507.8,374.7 C1508.0,373.7 1508.2,372.7 1508.4,371.7 C1508.7,370.7 1508.9,369.8 1509.2,368.8 C1509.5,367.9 1509.7,366.9 1510.0,366.0 C1510.3,365.1 1510.6,364.2 1511.0,363.4 C1511.3,362.5 1511.6,361.7 1512.0,360.9 C1512.4,360.1 1512.7,359.3 1513.1,358.6 C1513.5,357.9 1513.9,357.3 1514.3,356.7 C1514.7,356.0 1515.1,355.5 1515.6,355.0 C1516.0,354.5 1516.5,354.0 1516.9,353.7 C1517.4,353.3 1517.9,353.0 1518.3,352.7 C1518.8,352.5 1519.3,352.3 1519.8,352.2 C1520.4,352.1 1520.9,352.1 1521.4,352.2 C1522.0,352.3 1522.5,352.4 1523.1,352.7 C1523.6,352.9 1524.2,353.2 1524.8,353.6 C1525.3,354.0 1525.9,354.5 1526.5,355.0 C1527.1,355.6 1527.7,356.2 1528.3,356.8 C1528.9,357.5 1529.5,358.2 1530.0,358.9 C1530.6,359.7 1531.2,360.4 1531.8,361.2 C1532.4,362.0 1533.0,362.9 1533.5,363.7 C1534.1,364.6 1534.6,365.5 1535.2,366.3 C1535.7,367.2 1536.3,368.1 1536.8,369.0 C1537.3,369.8 1537.8,370.7 1538.3,371.6 C1538.8,372.4 1539.2,373.3 1539.7,374.1 C1540.1,374.9 1540.6,375.7 1541.0,376.5 C1541.4,377.3 1541.8,378.0 1542.2,378.8 C1542.6,379.5 1543.0,380.3 1543.4,381.0 C1543.7,381.7 1544.1,382.4 1544.5,383.2 C1544.8,383.9 1545.2,384.5 1545.6,385.2 C1545.9,385.9 1546.3,386.6 1546.6,387.3 C1547.0,388.0 1547.4,388.6 1547.7,389.3 C1548.1,390.0 1548.5,390.6 1548.9,391.3 C1549.3,392.0 1549.7,392.6 1550.1,393.3 C1550.5,393.9 1550.9,394.6 1551.4,395.3 C1551.8,395.9 1552.3,396.6 1552.7,397.3 C1553.2,397.9 1553.7,398.6 1554.1,399.3 C1554.6,399.9 1555.1,400.6 1555.6,401.3 C1556.1,401.9 1556.6,402.6 1557.2,403.2 C1557.7,403.9 1558.2,404.6 1558.8,405.2 C1559.3,405.9 1559.9,406.5 1560.4,407.1 C1561.0,407.8 1561.6,408.4 1562.1,409.1 C1562.7,409.7 1563.3,410.3 1563.9,410.9 C1564.5,411.6 1565.1,412.2 1565.7,412.8 C1566.3,413.4 1566.9,414.0 1567.5,414.6 C1568.2,415.2 1568.8,415.8 1569.4,416.4 C1570.1,417.0 1570.7,417.6 1571.4,418.1 C1572.0,418.7 1572.7,419.2 1573.3,419.8 C1574.0,420.3 1574.7,420.9 1575.4,421.4 C1576.0,422.0 1576.7,422.5 1577.4,423.0 C1578.1,423.5 1578.8,424.0 1579.4,424.5 C1580.1,425.0 1580.8,425.5 1581.5,425.9 C1582.2,426.4 1582.9,426.9 1583.7,427.3 C1584.4,427.8 1585.1,428.2 1585.8,428.6 C1586.5,429.0 1587.2,429.5 1587.9,429.9 C1588.7,430.3 1589.4,430.7 1590.1,431.1 C1590.9,431.4 1591.6,431.8 1592.3,432.2 C1593.1,432.5 1593.8,432.9 1594.6,433.2 C1595.3,433.6 1596.1,433.9 1596.8,434.3 C1597.6,434.6 1598.3,434.9 1599.1,435.2 C1599.8,435.5 1600.6,435.8 1601.4,436.1 C1602.1,436.4 1602.9,436.7 1603.7,437.0 C1604.4,437.3 1605.2,437.5 1606.0,437.8 C1606.8,438.0 1607.5,438.3 1608.3,438.5 C1609.1,438.8 1609.9,439.0 1610.7,439.3 C1611.5,439.5 1612.3,439.7 1613.0,439.9 C1613.8,440.1 1614.6,440.3 1615.4,440.5 C1616.2,440.7 1617.0,440.9 1617.8,441.1 C1618.6,441.3 1619.4,441.5 1620.2,441.7 C1621.0,441.8 1621.9,442.0 1622.7,442.2 C1623.5,442.3 1624.3,442.5 1625.1,442.6 C1625.9,442.8 1626.7,442.9 1627.6,443.1 C1628.4,443.2 1629.2,443.4 1630.0,443.5 C1630.8,443.6 1631.7,443.7 1632.5,443.9 C1633.3,444.0 1634.1,444.1 1635.0,444.2 C1635.8,444.3 1636.6,444.4 1637.4,444.5 C1638.3,444.6 1639.1,444.7 1639.9,444.8 C1640.8,444.9 1641.6,445.0 1642.4,445.1 C1643.3,445.1 1644.1,445.2 1644.9,445.3 C1645.8,445.4 1646.6,445.4 1647.5,445.5 C1648.3,445.6 1649.1,445.6 1650.0,445.7 C1650.8,445.8 1651.7,445.8 1652.5,445.9 C1653.3,445.9 1654.2,446.0 1655.0,446.0 C1655.9,446.1 1656.7,446.1 1657.6,446.2 C1658.4,446.2 1659.2,446.3 1660.1,446.3 C1660.9,446.4 1661.8,446.4 1662.6,446.5 C1663.5,446.5 1664.3,446.5 1665.1,446.6 C1666.0,446.6 1666.8,446.6 1667.7,446.7 C1668.5,446.7 1669.4,446.7 1670.2,446.8 C1671.1,446.8 1671.9,446.8 1672.7,446.9 C1673.6,446.9 1674.4,446.9 1675.3,446.9 C1676.1,447.0 1677.0,447.0 1677.8,447.0 C1678.6,447.1 1679.5,447.1 1680.3,447.1 C1681.2,447.1 1682.0,447.2 1682.9,447.2 C1683.7,447.2 1684.5,447.2 1685.4,447.3 C1686.2,447.3 1687.1,447.3 1687.9,447.3 C1688.7,447.4 1689.6,447.4 1690.4,447.4 C1691.3,447.4 1692.1,447.4 1692.9,447.5 C1693.8,447.5 1694.6,447.5 1695.5,447.5 C1696.3,447.5 1697.1,447.5 1698.0,447.6 C1698.8,447.6 1699.7,447.6 1700.5,447.6 C1701.3,447.6 1702.2,447.6 1703.0,447.7 C1703.8,447.7 1704.7,447.7 1705.5,447.7 C1706.4,447.7 1707.2,447.7 1708.0,447.7 C1708.9,447.8 1709.7,447.8 1710.5,447.8 C1711.4,447.8 1712.2,447.8 1713.1,447.8 C1713.9,447.8 1714.7,447.8 1715.6,447.9 C1716.4,447.9 1717.2,447.9 1718.1,447.9 C1718.9,447.9 1719.7,447.9 1720.6,447.9 C1721.4,447.9 1722.2,447.9 1723.1,447.9 C1723.9,447.9 1724.8,448.0 1725.6,448.0 C1726.4,448.0 1727.3,448.0 1728.1,448.0 C1728.9,448.0 1729.8,448.0 1730.6,448.0 C1731.4,448.0 1732.3,448.0 1733.1,448.0 C1733.9,448.0 1734.8,448.0 1735.6,448.0 C1736.4,448.0 1737.3,448.0 1738.1,448.0 C1738.9,448.0 1739.8,448.0 1740.6,448.0 C1741.5,448.0 1742.3,448.0 1743.1,448.1 C1744.0,448.1 1744.8,448.1 1745.6,448.1 C1746.5,448.1 1747.3,448.1 1748.1,448.1 C1749.0,448.1 1749.8,448.1 1750.6,448.1 C1751.5,448.1 1752.3,448.1 1753.1,448.1 C1754.0,448.1 1754.8,448.1 1755.6,448.1 C1756.5,448.1 1757.3,448.1 1758.1,448.1 C1759.0,448.1 1759.8,448.1 1760.6,448.1 C1761.5,448.1 1762.3,448.1 1763.1,448.1 C1764.0,448.1 1764.8,448.1 1765.6,448.1 C1766.5,448.0 1767.3,448.0 1768.1,448.0 C1769.0,448.0 1769.8,448.0 1770.6,448.0 C1771.5,448.0 1772.3,448.0 1773.1,448.0 C1774.0,448.0 1774.8,448.0 1775.6,448.0 C1776.5,448.0 1777.3,448.0 1778.1,448.0 C1779.0,448.0 1779.8,448.0 1780.6,448.0 C1781.5,448.0 1782.3,448.0 1783.1,448.0 C1784.0,448.0 1784.8,448.0 1785.6,448.0 C1786.5,448.0 1787.3,448.0 1788.1,448.0 C1789.0,448.0 1789.8,448.0 1790.6,448.0 C1791.5,448.0 1792.3,448.0 1793.1,448.0 C1794.0,448.0 1794.8,448.0 1795.6,448.0 C1796.5,447.9 1797.3,447.9 1798.2,447.9 C1799.0,447.9 1799.8,447.9 1800.7,447.9 C1801.5,447.9 1802.3,447.9 1803.2,447.9 C1804.0,447.9 1804.8,447.9 1805.7,447.9 C1806.5,447.9 1807.3,447.9 1808.2,447.9 C1809.0,447.9 1809.8,447.9 1810.7,447.9 C1811.5,447.9 1812.4,447.9 1813.2,447.9 C1814.0,447.9 1814.9,447.9 1815.7,447.9 C1816.5,447.9 1817.4,447.9 1818.2,447.9 C1819.0,447.9 1819.9,447.9 1820.7,447.9 C1821.6,447.9 1822.4,447.9 1823.2,447.9 C1824.1,447.9 1824.9,447.9 1825.7,447.9 C1826.6,447.9 1827.4,447.9 1828.3,447.9 C1829.1,447.9 1829.9,447.9 1830.8,447.9 C1831.6,447.9 1832.4,447.9 1833.3,447.9 C1834.1,447.9 1835.0,447.9 1835.8,447.9 C1836.6,447.9 1837.5,447.9 1838.3,447.9 C1839.2,447.9 1840.0,447.9 1840.8,447.9 C1841.7,447.9 1842.5,447.9 1843.4,447.9 C1844.2,447.9 1845.0,447.9 1845.9,447.9 C1846.7,447.9 1847.6,447.9 1848.4,447.9 C1849.2,448.0 1850.1,448.0 1850.9,448.0 C1851.8,448.0 1852.6,448.0 1853.5,448.0 C1854.3,448.0 1855.1,448.0 1856.0,448.0 C1856.8,448.0 1857.7,448.0 1858.5,448.0 C1859.4,448.0 1860.2,448.0 1861.0,448.1 C1861.9,448.1 1862.7,448.1 1863.6,448.1 C1864.4,448.1 1865.7,448.1 1866.1,448.1" stroke="#0000cd" stroke-width="2.6" fill="none" stroke-linejoin="round" stroke-linecap="round"/>
</g>
<rect x="1434.5" y="133.5" width="431" height="315" fill="none" stroke="#000" stroke-width="1"/>
<text transform="translate(1430.5,452.1) scale(0.86,1)" text-anchor="end" font-size="12" fill="#000">0</text>
<text transform="translate(1430.5,373.4) scale(0.86,1)" text-anchor="end" font-size="12" fill="#000">5</text>
<text transform="translate(1430.5,294.6) scale(0.86,1)" text-anchor="end" font-size="12" fill="#000">10</text>
<text transform="translate(1430.5,215.8) scale(0.86,1)" text-anchor="end" font-size="12" fill="#000">15</text>
<text transform="translate(1430.5,137.1) scale(0.86,1)" text-anchor="end" font-size="12" fill="#000">20</text>
<text transform="translate(1883.5,137.1) scale(0.86,1)" text-anchor="middle" font-size="12" fill="#000">10</text>
<text transform="translate(1883.5,215.8) scale(0.86,1)" text-anchor="middle" font-size="12" fill="#000">7.5</text>
<text transform="translate(1883.5,294.6) scale(0.86,1)" text-anchor="middle" font-size="12" fill="#000">5</text>
<text transform="translate(1883.5,373.4) scale(0.86,1)" text-anchor="middle" font-size="12" fill="#000">2.5</text>
<text transform="translate(1883.5,452.1) scale(0.86,1)" text-anchor="middle" font-size="12" fill="#000">0</text>
<text transform="translate(1473.8,459.5) scale(0.86,1)" text-anchor="middle" font-size="12" fill="#000">20</text>
<text transform="translate(1525.8,459.5) scale(0.86,1)" text-anchor="middle" font-size="12" fill="#000">50</text>
<text transform="translate(1565.1,459.5) scale(0.86,1)" text-anchor="middle" font-size="12" fill="#000">100</text>
<text transform="translate(1604.4,459.5) scale(0.86,1)" text-anchor="middle" font-size="12" fill="#000">200</text>
<text transform="translate(1656.3,459.5) scale(0.86,1)" text-anchor="middle" font-size="12" fill="#000">500</text>
<text transform="translate(1695.6,459.5) scale(0.86,1)" text-anchor="middle" font-size="12" fill="#000">1k</text>
<text transform="translate(1734.9,459.5) scale(0.86,1)" text-anchor="middle" font-size="12" fill="#000">2k</text>
<text transform="translate(1786.9,459.5) scale(0.86,1)" text-anchor="middle" font-size="12" fill="#000">5k</text>
<text transform="translate(1826.2,459.5) scale(0.86,1)" text-anchor="middle" font-size="12" fill="#000">10k</text>
<text transform="translate(1865.5,459.5) scale(0.86,1)" text-anchor="middle" font-size="12" fill="#000">20k</text>
<text transform="translate(1429.5,459.5) scale(0.86,1)" text-anchor="start" font-size="12" fill="#000">10Hz</text>
<text x="1650.0" y="129.6" text-anchor="middle" font-size="12" fill="#000">Excursion</text>
<text transform="translate(1435.5,128.2) scale(0.95,1)" font-size="11" fill="#000">mm</text>
<text transform="translate(1863,128.2) scale(0.95,1)" text-anchor="end" font-size="11" fill="#000">N</text>
<line x1="401" y1="795.5" x2="845" y2="795.5" stroke="#dadada" stroke-width="1"/>
<line x1="401" y1="787.5" x2="845" y2="787.5" stroke="#dadada" stroke-width="1"/>
<line x1="401" y1="779.5" x2="845" y2="779.5" stroke="#dadada" stroke-width="1"/>
<line x1="401" y1="771.5" x2="845" y2="771.5" stroke="#dadada" stroke-width="1"/>
<line x1="401" y1="755.5" x2="845" y2="755.5" stroke="#dadada" stroke-width="1"/>
<line x1="401" y1="747.5" x2="845" y2="747.5" stroke="#dadada" stroke-width="1"/>
<line x1="401" y1="739.5" x2="845" y2="739.5" stroke="#dadada" stroke-width="1"/>
<line x1="401" y1="731.5" x2="845" y2="731.5" stroke="#dadada" stroke-width="1"/>
<line x1="401" y1="716.5" x2="845" y2="716.5" stroke="#dadada" stroke-width="1"/>
<line x1="401" y1="708.5" x2="845" y2="708.5" stroke="#dadada" stroke-width="1"/>
<line x1="401" y1="700.5" x2="845" y2="700.5" stroke="#dadada" stroke-width="1"/>
<line x1="401" y1="692.5" x2="845" y2="692.5" stroke="#dadada" stroke-width="1"/>
<line x1="401" y1="676.5" x2="845" y2="676.5" stroke="#dadada" stroke-width="1"/>
<line x1="401" y1="668.5" x2="845" y2="668.5" stroke="#dadada" stroke-width="1"/>
<line x1="401" y1="660.5" x2="845" y2="660.5" stroke="#dadada" stroke-width="1"/>
<line x1="401" y1="652.5" x2="845" y2="652.5" stroke="#dadada" stroke-width="1"/>
<line x1="401" y1="637.5" x2="845" y2="637.5" stroke="#dadada" stroke-width="1"/>
<line x1="401" y1="629.5" x2="845" y2="629.5" stroke="#dadada" stroke-width="1"/>
<line x1="401" y1="621.5" x2="845" y2="621.5" stroke="#dadada" stroke-width="1"/>
<line x1="401" y1="613.5" x2="845" y2="613.5" stroke="#dadada" stroke-width="1"/>
<line x1="401" y1="597.5" x2="845" y2="597.5" stroke="#dadada" stroke-width="1"/>
<line x1="401" y1="589.5" x2="845" y2="589.5" stroke="#dadada" stroke-width="1"/>
<line x1="401" y1="581.5" x2="845" y2="581.5" stroke="#dadada" stroke-width="1"/>
<line x1="401" y1="573.5" x2="845" y2="573.5" stroke="#dadada" stroke-width="1"/>
<line x1="401" y1="558.5" x2="845" y2="558.5" stroke="#dadada" stroke-width="1"/>
<line x1="401" y1="550.5" x2="845" y2="550.5" stroke="#dadada" stroke-width="1"/>
<line x1="401" y1="542.5" x2="845" y2="542.5" stroke="#dadada" stroke-width="1"/>
<line x1="401" y1="534.5" x2="845" y2="534.5" stroke="#dadada" stroke-width="1"/>
<line x1="401" y1="518.5" x2="845" y2="518.5" stroke="#dadada" stroke-width="1"/>
<line x1="401" y1="510.5" x2="845" y2="510.5" stroke="#dadada" stroke-width="1"/>
<line x1="401" y1="502.5" x2="845" y2="502.5" stroke="#dadada" stroke-width="1"/>
<line x1="401" y1="494.5" x2="845" y2="494.5" stroke="#dadada" stroke-width="1"/>
<line x1="440.5" y1="488" x2="440.5" y2="803" stroke="#cacaca" stroke-width="1"/>
<line x1="464.5" y1="488" x2="464.5" y2="803" stroke="#cacaca" stroke-width="1"/>
<line x1="481.5" y1="488" x2="481.5" y2="803" stroke="#cacaca" stroke-width="1"/>
<line x1="494.5" y1="488" x2="494.5" y2="803" stroke="#cacaca" stroke-width="1"/>
<line x1="504.5" y1="488" x2="504.5" y2="803" stroke="#cacaca" stroke-width="1"/>
<line x1="513.5" y1="488" x2="513.5" y2="803" stroke="#cacaca" stroke-width="1"/>
<line x1="521.5" y1="488" x2="521.5" y2="803" stroke="#cacaca" stroke-width="1"/>
<line x1="528.5" y1="488" x2="528.5" y2="803" stroke="#cacaca" stroke-width="1"/>
<line x1="575.5" y1="488" x2="575.5" y2="803" stroke="#cacaca" stroke-width="1"/>
<line x1="599.5" y1="488" x2="599.5" y2="803" stroke="#cacaca" stroke-width="1"/>
<line x1="615.5" y1="488" x2="615.5" y2="803" stroke="#cacaca" stroke-width="1"/>
<line x1="629.5" y1="488" x2="629.5" y2="803" stroke="#cacaca" stroke-width="1"/>
<line x1="639.5" y1="488" x2="639.5" y2="803" stroke="#cacaca" stroke-width="1"/>
<line x1="648.5" y1="488" x2="648.5" y2="803" stroke="#cacaca" stroke-width="1"/>
<line x1="656.5" y1="488" x2="656.5" y2="803" stroke="#cacaca" stroke-width="1"/>
<line x1="663.5" y1="488" x2="663.5" y2="803" stroke="#cacaca" stroke-width="1"/>
<line x1="710.5" y1="488" x2="710.5" y2="803" stroke="#cacaca" stroke-width="1"/>
<line x1="733.5" y1="488" x2="733.5" y2="803" stroke="#cacaca" stroke-width="1"/>
<line x1="750.5" y1="488" x2="750.5" y2="803" stroke="#cacaca" stroke-width="1"/>
<line x1="763.5" y1="488" x2="763.5" y2="803" stroke="#cacaca" stroke-width="1"/>
<line x1="774.5" y1="488" x2="774.5" y2="803" stroke="#cacaca" stroke-width="1"/>
<line x1="783.5" y1="488" x2="783.5" y2="803" stroke="#cacaca" stroke-width="1"/>
<line x1="791.5" y1="488" x2="791.5" y2="803" stroke="#cacaca" stroke-width="1"/>
<line x1="798.5" y1="488" x2="798.5" y2="803" stroke="#cacaca" stroke-width="1"/>
<line x1="401" y1="763.5" x2="845" y2="763.5" stroke="#6e6e6e" stroke-width="1"/>
<line x1="401" y1="724.5" x2="845" y2="724.5" stroke="#6e6e6e" stroke-width="1"/>
<line x1="401" y1="684.5" x2="845" y2="684.5" stroke="#6e6e6e" stroke-width="1"/>
<line x1="401" y1="645.5" x2="845" y2="645.5" stroke="#6e6e6e" stroke-width="1"/>
<line x1="401" y1="605.5" x2="845" y2="605.5" stroke="#6e6e6e" stroke-width="1"/>
<line x1="401" y1="566.5" x2="845" y2="566.5" stroke="#6e6e6e" stroke-width="1"/>
<line x1="401" y1="526.5" x2="845" y2="526.5" stroke="#6e6e6e" stroke-width="1"/>
<line x1="534.5" y1="488" x2="534.5" y2="803" stroke="#6e6e6e" stroke-width="1"/>
<line x1="669.5" y1="488" x2="669.5" y2="803" stroke="#6e6e6e" stroke-width="1"/>
<line x1="804.5" y1="488" x2="804.5" y2="803" stroke="#6e6e6e" stroke-width="1"/>
<clipPath id="clip01"><rect x="401" y="488" width="444" height="315"/></clipPath>
<g clip-path="url(#clip01)">
<path d="M400.4,595.9 C400.8,595.7 402.0,595.1 402.7,594.6 C403.5,594.2 404.2,593.7 404.9,593.2 C405.6,592.7 406.2,592.2 406.9,591.7 C407.5,591.2 408.1,590.6 408.7,590.1 C409.3,589.6 409.9,589.0 410.5,588.4 C411.0,587.9 411.6,587.3 412.2,586.7 C412.8,586.1 413.3,585.5 413.9,584.9 C414.5,584.3 415.1,583.7 415.7,583.1 C416.3,582.6 416.9,582.0 417.6,581.4 C418.2,580.8 418.9,580.2 419.6,579.6 C420.3,579.0 421.0,578.4 421.7,577.8 C422.5,577.3 423.2,576.7 424.0,576.2 C424.8,575.7 425.5,575.2 426.3,574.8 C427.1,574.4 427.9,574.0 428.6,573.7 C429.4,573.4 430.1,573.1 430.9,573.0 C431.6,572.8 432.3,572.7 433.0,572.7 C433.6,572.6 434.3,572.7 434.9,572.9 C435.5,573.1 436.0,573.4 436.5,573.8 C437.0,574.2 437.5,574.7 437.9,575.3 C438.3,576.0 438.6,576.8 438.9,577.6 C439.1,578.5 439.4,579.5 439.6,580.5 C439.7,581.5 439.9,582.6 440.0,583.7 C440.1,584.8 440.2,585.9 440.3,587.0 C440.4,588.1 440.4,589.2 440.5,590.3 C440.5,591.3 440.6,592.3 440.6,593.3 C440.6,594.2 440.7,595.0 440.7,595.9 C440.8,596.7 440.8,597.4 440.9,598.2 C440.9,598.9 440.9,599.6 441.0,600.3 C441.0,601.0 441.1,601.6 441.1,602.3 C441.2,603.0 441.2,603.7 441.2,604.5 C441.3,605.2 441.3,606.0 441.4,606.7 C441.4,607.5 441.5,608.3 441.5,609.1 C441.6,609.9 441.6,610.8 441.7,611.6 C441.7,612.4 441.7,613.3 441.8,614.1 C441.8,615.0 441.9,615.9 441.9,616.8 C442.0,617.6 442.0,618.5 442.1,619.4 C442.1,620.3 442.2,621.2 442.2,622.0 C442.3,622.9 442.3,623.8 442.4,624.7 C442.4,625.6 442.5,626.5 442.5,627.3 C442.6,628.2 442.6,629.1 442.7,629.9 C442.7,630.8 442.8,631.6 442.8,632.5 C442.8,633.3 442.9,634.1 442.9,634.9 C443.0,635.7 443.0,636.6 443.1,637.4 C443.1,638.2 443.2,639.0 443.2,639.8 C443.3,640.6 443.3,641.4 443.3,642.2 C443.4,643.0 443.4,643.8 443.5,644.6 C443.5,645.4 443.5,646.3 443.6,647.1 C443.6,647.9 443.6,648.8 443.6,649.6 C443.7,650.4 443.7,651.3 443.7,652.1 C443.7,653.0 443.8,653.8 443.8,654.7 C443.8,655.5 443.9,656.4 443.9,657.2 C443.9,658.1 444.0,659.0 444.0,659.8 C444.1,660.7 444.1,661.5 444.2,662.4 C444.2,663.2 444.3,664.0 444.3,664.9 C444.4,665.7 444.5,666.6 444.6,667.4 C444.6,668.2 444.7,669.1 444.8,669.9 C444.9,670.7 445.0,671.6 445.1,672.4 C445.2,673.2 445.3,674.0 445.4,674.8 C445.5,675.6 445.6,676.5 445.7,677.3 C445.8,678.1 445.9,678.9 446.1,679.7 C446.2,680.5 446.3,681.2 446.5,682.0 C446.6,682.8 446.8,683.6 446.9,684.4 C447.1,685.1 447.2,685.9 447.4,686.7 C447.5,687.5 447.7,688.2 447.8,689.1 C448.0,690.0 448.1,690.9 448.2,692.0 C448.3,693.0 448.3,694.2 448.3,695.5 C448.3,696.7 448.3,698.1 448.3,699.3 C448.3,700.6 448.3,701.8 448.4,702.7 C448.5,703.6 448.7,704.3 448.9,704.7 C449.2,705.1 449.5,705.1 449.9,705.0 C450.3,704.9 450.7,704.5 451.2,704.0 C451.6,703.6 452.1,702.9 452.5,702.2 C453.0,701.5 453.4,700.7 453.8,700.0 C454.2,699.2 454.5,698.4 454.9,697.5 C455.2,696.7 455.5,695.8 455.8,695.0 C456.1,694.1 456.4,693.2 456.7,692.3 C456.9,691.5 457.2,690.6 457.4,689.7 C457.7,688.8 458.0,688.0 458.2,687.1 C458.4,686.3 458.7,685.5 458.9,684.6 C459.2,683.8 459.4,683.0 459.7,682.2 C459.9,681.4 460.1,680.6 460.4,679.8 C460.6,679.0 460.8,678.2 461.0,677.4 C461.3,676.6 461.5,675.8 461.7,675.0 C461.9,674.2 462.2,673.4 462.4,672.6 C462.6,671.9 462.8,671.1 463.0,670.3 C463.2,669.5 463.4,668.7 463.6,667.9 C463.9,667.1 464.1,666.3 464.3,665.5 C464.5,664.7 464.7,663.9 464.9,663.1 C465.1,662.3 465.3,661.5 465.5,660.7 C465.7,659.9 465.9,659.1 466.0,658.3 C466.2,657.5 466.4,656.7 466.6,655.9 C466.8,655.1 467.0,654.3 467.2,653.5 C467.4,652.7 467.6,651.9 467.8,651.1 C468.0,650.3 468.1,649.4 468.3,648.6 C468.5,647.8 468.7,647.0 468.9,646.2 C469.1,645.4 469.3,644.6 469.5,643.7 C469.6,642.9 469.8,642.1 470.0,641.3 C470.2,640.4 470.4,639.6 470.6,638.8 C470.8,638.0 471.0,637.1 471.1,636.3 C471.3,635.5 471.5,634.6 471.7,633.8 C471.9,632.9 472.1,632.1 472.3,631.3 C472.5,630.4 472.7,629.6 472.9,628.7 C473.0,627.9 473.2,627.0 473.4,626.2 C473.6,625.3 473.8,624.4 474.0,623.6 C474.2,622.7 474.4,621.9 474.6,621.0 C474.8,620.2 475.0,619.4 475.2,618.5 C475.4,617.7 475.6,616.9 475.8,616.0 C476.0,615.2 476.1,614.4 476.3,613.6 C476.5,612.8 476.7,612.0 476.9,611.3 C477.1,610.5 477.3,609.7 477.5,609.0 C477.6,608.2 477.8,607.5 478.0,606.8 C478.2,606.1 478.4,605.4 478.5,604.7 C478.7,604.0 478.9,603.3 479.1,602.6 C479.3,602.0 479.4,601.3 479.6,600.6 C479.8,599.9 480.1,599.2 480.3,598.4 C480.5,597.6 480.8,596.8 481.1,595.9 C481.4,595.0 481.7,594.1 482.0,593.1 C482.4,592.0 482.8,590.9 483.2,589.8 C483.6,588.7 484.0,587.5 484.5,586.4 C484.9,585.4 485.4,584.4 485.9,583.6 C486.3,582.8 486.8,582.1 487.3,581.7 C487.8,581.3 488.3,581.2 488.7,581.2 C489.2,581.3 489.6,581.6 490.1,582.0 C490.5,582.5 490.9,583.1 491.3,583.8 C491.7,584.5 492.1,585.4 492.4,586.2 C492.7,587.1 493.1,588.0 493.3,588.9 C493.6,589.9 493.9,590.8 494.1,591.7 C494.3,592.6 494.5,593.5 494.6,594.3 C494.8,595.2 494.9,596.1 495.0,597.0 C495.1,597.8 495.2,598.7 495.4,599.5 C495.5,600.4 495.5,601.2 495.6,602.1 C495.7,602.9 495.8,603.7 495.9,604.6 C496.0,605.4 496.1,606.2 496.2,607.1 C496.3,607.9 496.3,608.7 496.4,609.5 C496.5,610.4 496.6,611.2 496.7,612.0 C496.7,612.8 496.8,613.6 496.9,614.4 C497.0,615.3 497.0,616.1 497.1,616.9 C497.2,617.7 497.3,618.5 497.4,619.3 C497.4,620.2 497.5,621.0 497.6,621.8 C497.7,622.6 497.7,623.4 497.8,624.2 C497.9,625.1 498.0,625.9 498.0,626.7 C498.1,627.5 498.2,628.4 498.3,629.2 C498.3,630.0 498.4,630.9 498.5,631.7 C498.6,632.5 498.7,633.4 498.7,634.2 C498.8,635.0 498.9,635.9 499.0,636.7 C499.0,637.6 499.1,638.4 499.2,639.3 C499.3,640.1 499.4,640.9 499.5,641.8 C499.5,642.6 499.6,643.5 499.7,644.3 C499.8,645.2 499.9,646.0 499.9,646.9 C500.0,647.7 500.1,648.6 500.2,649.4 C500.3,650.3 500.3,651.1 500.4,652.0 C500.5,652.8 500.6,653.7 500.7,654.5 C500.8,655.4 500.8,656.2 500.9,657.0 C501.0,657.9 501.1,658.7 501.2,659.6 C501.2,660.4 501.3,661.3 501.4,662.1 C501.5,662.9 501.6,663.8 501.7,664.6 C501.7,665.5 501.8,666.3 501.9,667.1 C502.0,668.0 502.1,668.8 502.1,669.6 C502.2,670.5 502.3,671.3 502.4,672.1 C502.5,672.9 502.5,673.8 502.6,674.6 C502.7,675.4 502.8,676.2 502.8,677.0 C502.9,677.8 503.0,678.7 503.1,679.5 C503.1,680.3 503.2,681.1 503.3,681.9 C503.4,682.7 503.5,683.5 503.5,684.3 C503.6,685.1 503.7,685.9 503.8,686.7 C503.9,687.5 503.9,688.3 504.0,689.1 C504.1,689.9 504.2,690.7 504.3,691.5 C504.4,692.3 504.5,693.2 504.7,694.0 C504.8,694.8 504.9,695.7 505.0,696.5 C505.2,697.4 505.3,698.2 505.5,699.1 C505.6,700.0 505.8,700.8 506.0,701.7 C506.2,702.6 506.3,703.6 506.6,704.5 C506.8,705.4 507.0,706.4 507.2,707.3 C507.5,708.3 507.7,709.3 508.0,710.2 C508.3,711.0 508.6,712.0 508.9,712.7 C509.2,713.5 509.6,714.2 510.0,714.7 C510.4,715.2 510.9,715.6 511.4,715.7 C511.9,715.9 512.4,715.9 513.0,715.6 C513.6,715.4 514.3,715.0 514.9,714.5 C515.6,713.9 516.2,713.2 516.9,712.6 C517.6,711.9 518.2,711.1 518.9,710.3 C519.5,709.6 520.1,708.8 520.7,708.1 C521.3,707.4 521.9,706.7 522.4,706.0 C523.0,705.3 523.5,704.7 524.0,704.0 C524.5,703.4 525.0,702.8 525.5,702.1 C526.0,701.5 526.5,700.8 526.9,700.2 C527.4,699.6 527.9,698.9 528.3,698.3 C528.8,697.6 529.3,696.9 529.8,696.3 C530.3,695.6 530.7,694.9 531.2,694.2 C531.7,693.6 532.2,692.9 532.7,692.2 C533.2,691.5 533.7,690.8 534.3,690.2 C534.8,689.5 535.3,688.8 535.8,688.2 C536.4,687.5 536.9,686.9 537.5,686.2 C538.0,685.6 538.6,684.9 539.1,684.3 C539.7,683.7 540.2,683.0 540.8,682.4 C541.4,681.8 541.9,681.2 542.5,680.6 C543.1,679.9 543.7,679.3 544.3,678.7 C544.9,678.1 545.5,677.5 546.1,677.0 C546.7,676.4 547.3,675.8 547.9,675.2 C548.5,674.6 549.1,674.1 549.8,673.5 C550.4,672.9 551.0,672.4 551.6,671.8 C552.3,671.3 552.9,670.7 553.5,670.2 C554.2,669.7 554.8,669.2 555.5,668.6 C556.1,668.1 556.8,667.6 557.4,667.1 C558.1,666.6 558.7,666.1 559.4,665.6 C560.1,665.1 560.7,664.6 561.4,664.1 C562.1,663.6 562.7,663.1 563.4,662.7 C564.1,662.2 564.8,661.7 565.5,661.3 C566.2,660.8 566.8,660.4 567.5,659.9 C568.2,659.5 568.9,659.0 569.6,658.6 C570.3,658.1 571.0,657.7 571.7,657.3 C572.4,656.8 573.2,656.4 573.9,656.0 C574.6,655.6 575.3,655.2 576.0,654.8 C576.7,654.4 577.5,654.0 578.2,653.6 C578.9,653.2 579.6,652.8 580.4,652.4 C581.1,652.0 581.8,651.6 582.6,651.2 C583.3,650.8 584.1,650.5 584.8,650.1 C585.5,649.7 586.3,649.4 587.0,649.0 C587.8,648.7 588.5,648.3 589.3,647.9 C590.0,647.6 590.8,647.2 591.5,646.9 C592.3,646.6 593.1,646.2 593.8,645.9 C594.6,645.5 595.3,645.2 596.1,644.9 C596.9,644.6 597.7,644.2 598.4,643.9 C599.2,643.6 600.0,643.3 600.7,643.0 C601.5,642.6 602.3,642.3 603.1,642.0 C603.8,641.7 604.6,641.4 605.4,641.1 C606.2,640.8 607.0,640.5 607.8,640.2 C608.5,639.9 609.3,639.6 610.1,639.4 C610.9,639.1 611.7,638.8 612.5,638.5 C613.3,638.2 614.1,637.9 614.9,637.7 C615.7,637.4 616.5,637.1 617.2,636.8 C618.0,636.6 618.8,636.3 619.6,636.0 C620.4,635.8 621.2,635.5 622.0,635.2 C622.8,635.0 623.6,634.7 624.4,634.5 C625.2,634.2 626.0,634.0 626.8,633.7 C627.7,633.4 628.5,633.2 629.3,632.9 C630.1,632.7 630.9,632.4 631.7,632.2 C632.5,632.0 633.3,631.7 634.1,631.5 C634.9,631.2 635.7,631.0 636.5,630.7 C637.3,630.5 638.1,630.3 638.9,630.0 C639.8,629.8 640.6,629.6 641.4,629.3 C642.2,629.1 643.0,628.9 643.8,628.6 C644.6,628.4 645.4,628.2 646.2,627.9 C647.0,627.7 647.8,627.5 648.6,627.2 C649.5,627.0 650.3,626.8 651.1,626.6 C651.9,626.3 652.7,626.1 653.5,625.9 C654.3,625.7 655.1,625.5 655.9,625.2 C656.7,625.0 657.6,624.8 658.4,624.6 C659.2,624.4 660.0,624.1 660.8,623.9 C661.6,623.7 662.4,623.5 663.2,623.3 C664.0,623.1 664.9,622.9 665.7,622.6 C666.5,622.4 667.3,622.2 668.1,622.0 C668.9,621.8 669.7,621.6 670.5,621.4 C671.3,621.2 672.2,621.0 673.0,620.8 C673.8,620.6 674.6,620.4 675.4,620.2 C676.2,620.0 677.0,619.8 677.8,619.6 C678.7,619.4 679.5,619.2 680.3,619.0 C681.1,618.8 681.9,618.6 682.7,618.4 C683.5,618.2 684.4,618.0 685.2,617.8 C686.0,617.6 686.8,617.4 687.6,617.2 C688.4,617.0 689.2,616.8 690.0,616.6 C690.9,616.4 691.7,616.3 692.5,616.1 C693.3,615.9 694.1,615.7 694.9,615.5 C695.8,615.3 696.6,615.1 697.4,614.9 C698.2,614.8 699.0,614.6 699.8,614.4 C700.6,614.2 701.5,614.0 702.3,613.9 C703.1,613.7 703.9,613.5 704.7,613.3 C705.5,613.1 706.4,613.0 707.2,612.8 C708.0,612.6 708.8,612.4 709.6,612.3 C710.4,612.1 711.3,611.9 712.1,611.8 C712.9,611.6 713.7,611.4 714.5,611.2 C715.3,611.1 716.2,610.9 717.0,610.7 C717.8,610.6 718.6,610.4 719.4,610.2 C720.3,610.1 721.1,609.9 721.9,609.7 C722.7,609.6 723.5,609.4 724.3,609.3 C725.2,609.1 726.0,608.9 726.8,608.8 C727.6,608.6 728.4,608.5 729.3,608.3 C730.1,608.1 730.9,608.0 731.7,607.8 C732.5,607.7 733.4,607.5 734.2,607.4 C735.0,607.2 735.8,607.1 736.6,606.9 C737.5,606.7 738.3,606.6 739.1,606.4 C739.9,606.3 740.7,606.1 741.6,606.0 C742.4,605.8 743.2,605.7 744.0,605.6 C744.9,605.4 745.7,605.3 746.5,605.1 C747.3,605.0 748.1,604.8 749.0,604.7 C749.8,604.5 750.6,604.4 751.4,604.3 C752.3,604.1 753.1,604.0 753.9,603.8 C754.7,603.7 755.6,603.6 756.4,603.4 C757.2,603.3 758.0,603.1 758.8,603.0 C759.7,602.9 760.5,602.7 761.3,602.6 C762.1,602.5 763.0,602.3 763.8,602.2 C764.6,602.1 765.4,601.9 766.3,601.8 C767.1,601.7 767.9,601.5 768.7,601.4 C769.6,601.3 770.4,601.1 771.2,601.0 C772.0,600.9 772.9,600.8 773.7,600.6 C774.5,600.5 775.4,600.4 776.2,600.3 C777.0,600.1 777.8,600.0 778.7,599.9 C779.5,599.8 780.3,599.6 781.1,599.5 C782.0,599.4 782.8,599.3 783.6,599.2 C784.5,599.0 785.3,598.9 786.1,598.8 C786.9,598.7 787.8,598.6 788.6,598.4 C789.4,598.3 790.3,598.2 791.1,598.1 C791.9,598.0 792.7,597.9 793.6,597.8 C794.4,597.6 795.2,597.5 796.1,597.4 C796.9,597.3 797.7,597.2 798.6,597.1 C799.4,597.0 800.2,596.9 801.1,596.8 C801.9,596.6 802.7,596.5 803.5,596.4 C804.4,596.3 805.2,596.2 806.0,596.1 C806.9,596.0 807.7,595.9 808.5,595.8 C809.4,595.7 810.2,595.6 811.0,595.5 C811.9,595.4 812.7,595.3 813.5,595.2 C814.4,595.1 815.2,595.0 816.0,594.9 C816.9,594.8 817.7,594.7 818.5,594.6 C819.4,594.5 820.2,594.4 821.0,594.3 C821.9,594.2 822.7,594.1 823.5,594.0 C824.4,593.9 825.2,593.8 826.0,593.7 C826.9,593.6 827.7,593.5 828.6,593.4 C829.4,593.3 830.2,593.2 831.1,593.1 C831.9,593.0 832.7,592.9 833.6,592.8 C834.4,592.8 835.3,592.7 836.1,592.6 C836.9,592.5 837.8,592.4 838.6,592.3 C839.4,592.2 840.3,592.1 841.1,592.0 C842.0,592.0 842.8,591.9 843.6,591.8 C844.5,591.7 845.7,591.6 846.1,591.5" stroke="#a8a8a8" stroke-width="1.1" fill="none" stroke-linejoin="round" stroke-linecap="round"/>
<path d="M400.0,574.2 L444.6,574.2 L444.6,804.0" stroke="#25306e" stroke-width="1.6" fill="none" stroke-linejoin="round" stroke-linecap="round"/>
<path d="M400.0,766.7 C400.5,766.5 401.8,766.0 402.7,765.6 C403.5,765.2 404.3,764.7 405.1,764.3 C406.0,763.8 406.7,763.4 407.5,762.9 C408.3,762.4 409.0,762.0 409.7,761.5 C410.4,761.0 411.1,760.4 411.8,759.9 C412.4,759.4 413.1,758.8 413.7,758.3 C414.3,757.7 414.9,757.2 415.5,756.6 C416.1,756.0 416.7,755.4 417.2,754.8 C417.8,754.2 418.3,753.6 418.8,752.9 C419.3,752.3 419.8,751.7 420.3,751.0 C420.7,750.4 421.2,749.7 421.6,749.0 C422.1,748.3 422.5,747.7 422.9,747.0 C423.3,746.3 423.7,745.6 424.1,744.9 C424.4,744.1 424.8,743.4 425.1,742.7 C425.5,742.0 425.8,741.2 426.1,740.5 C426.4,739.7 426.7,739.0 427.0,738.2 C427.3,737.5 427.6,736.7 427.8,735.9 C428.1,735.1 428.4,734.4 428.6,733.6 C428.8,732.8 429.1,732.0 429.3,731.2 C429.5,730.4 429.7,729.6 429.9,728.8 C430.1,728.0 430.3,727.2 430.5,726.3 C430.6,725.5 430.8,724.7 431.0,723.9 C431.1,723.0 431.3,722.2 431.4,721.4 C431.6,720.5 431.7,719.7 431.8,718.9 C432.0,718.0 432.1,717.2 432.2,716.3 C432.3,715.5 432.4,714.7 432.5,713.8 C432.7,713.0 432.8,712.1 432.9,711.3 C433.0,710.4 433.1,709.6 433.1,708.7 C433.2,707.9 433.3,707.0 433.4,706.2 C433.5,705.3 433.6,704.5 433.7,703.6 C433.7,702.8 433.8,701.9 433.9,701.1 C434.0,700.2 434.0,699.4 434.1,698.5 C434.2,697.7 434.3,696.9 434.3,696.0 C434.4,695.2 434.5,694.3 434.5,693.5 C434.6,692.6 434.7,691.8 434.7,691.0 C434.8,690.1 434.9,689.3 434.9,688.5 C435.0,687.6 435.0,686.8 435.1,685.9 C435.2,685.1 435.2,684.3 435.3,683.4 C435.3,682.6 435.4,681.8 435.4,680.9 C435.5,680.1 435.5,679.3 435.6,678.4 C435.6,677.6 435.7,676.8 435.7,675.9 C435.8,675.1 435.8,674.3 435.9,673.4 C435.9,672.6 436.0,671.8 436.0,670.9 C436.1,670.1 436.1,669.3 436.2,668.4 C436.2,667.6 436.3,666.8 436.3,666.0 C436.4,665.1 436.4,664.3 436.4,663.5 C436.5,662.6 436.5,661.8 436.6,661.0 C436.6,660.2 436.7,659.3 436.7,658.5 C436.7,657.7 436.8,656.8 436.8,656.0 C436.9,655.2 436.9,654.4 437.0,653.5 C437.0,652.7 437.0,651.9 437.1,651.1 C437.1,650.2 437.2,649.4 437.2,648.6 C437.3,647.7 437.3,646.9 437.4,646.1 C437.4,645.3 437.4,644.4 437.5,643.6 C437.5,642.8 437.6,642.0 437.6,641.1 C437.7,640.3 437.7,639.5 437.8,638.6 C437.8,637.8 437.9,637.0 437.9,636.2 C438.0,635.3 438.0,634.5 438.1,633.7 C438.1,632.8 438.2,632.0 438.2,631.2 C438.3,630.3 438.3,629.5 438.4,628.7 C438.4,627.9 438.5,627.0 438.5,626.2 C438.6,625.4 438.6,624.5 438.7,623.7 C438.8,622.9 438.8,622.0 438.9,621.2 C438.9,620.4 439.0,619.5 439.1,618.7 C439.1,617.9 439.2,617.0 439.2,616.2 C439.3,615.4 439.4,614.5 439.4,613.7 C439.5,612.8 439.5,612.0 439.6,611.2 C439.7,610.3 439.7,609.5 439.8,608.6 C439.8,607.8 439.9,607.0 439.9,606.1 C440.0,605.3 440.1,604.4 440.1,603.6 C440.2,602.7 440.2,601.9 440.3,601.1 C440.3,600.2 440.4,599.4 440.4,598.5 C440.5,597.7 440.5,596.8 440.6,596.0 C440.6,595.1 440.7,594.3 440.7,593.4 C440.8,592.5 440.8,591.7 440.8,590.8 C440.9,590.0 440.9,589.1 441.0,588.3 C441.0,587.4 441.0,586.5 441.1,585.7 C441.1,584.8 441.1,583.9 441.2,583.1 C441.2,582.2 441.3,581.3 441.3,580.5 C441.4,579.6 441.5,578.7 441.6,577.9 C441.6,577.0 441.7,576.1 441.8,575.2 C441.9,574.4 442.0,573.5 442.2,572.6 C442.3,571.7 442.4,570.8 442.6,570.0 C442.7,569.1 442.9,568.3 443.1,567.7 C443.3,567.0 443.4,566.4 443.6,566.2 C443.8,565.9 443.9,565.8 444.1,566.0 C444.2,566.2 444.4,566.8 444.5,567.6 C444.6,568.4 444.7,569.5 444.8,570.7 C444.9,571.8 445.0,573.1 445.0,574.3 C445.1,575.5 445.2,576.7 445.3,577.9 C445.4,579.0 445.5,580.0 445.5,581.0 C445.6,582.0 445.7,583.0 445.7,583.9 C445.8,584.8 445.9,585.7 445.9,586.6 C446.0,587.4 446.0,588.2 446.1,589.0 C446.1,589.8 446.2,590.5 446.2,591.3 C446.2,592.1 446.3,592.8 446.3,593.6 C446.3,594.4 446.4,595.2 446.4,596.0 C446.5,596.8 446.5,597.6 446.6,598.4 C446.6,599.3 446.7,600.1 446.7,601.0 C446.8,601.8 446.8,602.7 446.9,603.6 C446.9,604.4 447.0,605.3 447.0,606.1 C447.0,607.0 447.1,607.8 447.1,608.7 C447.1,609.5 447.1,610.4 447.2,611.2 C447.2,612.0 447.2,612.8 447.2,613.7 C447.2,614.5 447.3,615.3 447.3,616.2 C447.3,617.0 447.3,617.8 447.4,618.7 C447.4,619.5 447.5,620.3 447.5,621.1 C447.5,622.0 447.6,622.8 447.6,623.6 C447.7,624.5 447.7,625.3 447.8,626.2 C447.8,627.0 447.9,627.8 447.9,628.7 C448.0,629.5 448.0,630.3 448.1,631.2 C448.2,632.0 448.2,632.8 448.3,633.7 C448.3,634.5 448.4,635.4 448.5,636.2 C448.5,637.0 448.6,637.9 448.7,638.7 C448.7,639.6 448.8,640.4 448.9,641.2 C448.9,642.1 449.0,642.9 449.1,643.8 C449.1,644.6 449.2,645.4 449.2,646.3 C449.3,647.1 449.4,648.0 449.4,648.8 C449.5,649.6 449.5,650.5 449.6,651.3 C449.7,652.1 449.7,653.0 449.8,653.8 C449.8,654.6 449.9,655.5 449.9,656.3 C450.0,657.2 450.0,658.0 450.1,658.8 C450.1,659.7 450.2,660.5 450.2,661.3 C450.3,662.2 450.3,663.0 450.3,663.8 C450.4,664.7 450.4,665.5 450.5,666.3 C450.5,667.2 450.5,668.0 450.6,668.8 C450.6,669.7 450.7,670.5 450.7,671.3 C450.7,672.1 450.8,673.0 450.8,673.8 C450.8,674.6 450.9,675.5 450.9,676.3 C450.9,677.1 451.0,678.0 451.0,678.8 C451.0,679.6 451.1,680.5 451.1,681.3 C451.1,682.1 451.2,682.9 451.2,683.8 C451.2,684.6 451.3,685.4 451.3,686.3 C451.3,687.1 451.4,687.9 451.4,688.8 C451.5,689.6 451.5,690.4 451.5,691.3 C451.6,692.1 451.6,692.9 451.7,693.7 C451.7,694.6 451.7,695.4 451.8,696.2 C451.8,697.1 451.9,697.9 451.9,698.7 C452.0,699.6 452.0,700.4 452.1,701.2 C452.1,702.1 452.2,702.9 452.2,703.7 C452.3,704.6 452.3,705.4 452.4,706.3 C452.4,707.1 452.5,707.9 452.6,708.8 C452.6,709.6 452.7,710.4 452.8,711.3 C452.8,712.1 452.9,713.0 453.0,713.8 C453.0,714.6 453.1,715.5 453.2,716.3 C453.3,717.2 453.4,718.0 453.4,718.9 C453.5,719.7 453.6,720.5 453.7,721.4 C453.8,722.2 453.9,723.1 454.0,723.9 C454.1,724.8 454.2,725.6 454.3,726.5 C454.4,727.3 454.5,728.2 454.6,729.0 C454.7,729.9 454.9,730.7 455.0,731.6 C455.1,732.4 455.2,733.3 455.4,734.1 C455.5,734.9 455.6,735.8 455.8,736.6 C455.9,737.5 456.0,738.3 456.2,739.1 C456.3,739.9 456.5,740.7 456.6,741.5 C456.8,742.3 457.0,743.1 457.1,743.8 C457.3,744.6 457.5,745.4 457.6,746.1 C457.8,746.8 458.0,747.5 458.2,748.2 C458.4,748.9 458.6,749.6 458.8,750.3 C459.0,751.0 459.2,751.8 459.4,752.6 C459.7,753.3 459.9,754.2 460.2,755.1 C460.5,756.0 460.8,757.0 461.1,758.0 C461.5,759.0 461.8,760.2 462.2,761.3 C462.6,762.4 463.0,763.6 463.5,764.5 C463.9,765.5 464.4,766.4 465.0,767.0 C465.5,767.7 466.0,768.2 466.6,768.5 C467.2,768.8 467.8,769.0 468.4,769.0 C469.0,769.1 469.6,768.9 470.2,768.7 C470.9,768.5 471.5,768.1 472.1,767.7 C472.7,767.3 473.3,766.8 473.9,766.2 C474.5,765.6 475.1,764.9 475.6,764.3 C476.2,763.6 476.7,762.8 477.1,762.1 C477.6,761.3 478.1,760.6 478.5,759.8 C478.9,759.0 479.2,758.2 479.6,757.4 C479.9,756.6 480.2,755.8 480.5,754.9 C480.8,754.1 481.1,753.3 481.3,752.4 C481.6,751.6 481.8,750.7 482.0,749.9 C482.2,749.0 482.4,748.2 482.6,747.3 C482.7,746.5 482.9,745.6 483.1,744.8 C483.2,743.9 483.4,743.1 483.6,742.2 C483.7,741.4 483.9,740.5 484.0,739.7 C484.2,738.9 484.3,738.0 484.4,737.2 C484.6,736.4 484.7,735.5 484.9,734.7 C485.0,733.9 485.1,733.1 485.3,732.2 C485.4,731.4 485.5,730.6 485.6,729.8 C485.8,729.0 485.9,728.2 486.0,727.3 C486.1,726.5 486.2,725.7 486.3,724.9 C486.4,724.1 486.6,723.3 486.7,722.5 C486.8,721.7 486.9,720.9 487.0,720.0 C487.1,719.2 487.2,718.4 487.3,717.6 C487.4,716.8 487.5,716.0 487.6,715.2 C487.7,714.4 487.8,713.6 487.8,712.7 C487.9,711.9 488.0,711.1 488.1,710.3 C488.2,709.5 488.3,708.7 488.4,707.8 C488.4,707.0 488.5,706.2 488.6,705.4 C488.7,704.5 488.8,703.7 488.8,702.9 C488.9,702.0 489.0,701.2 489.1,700.4 C489.1,699.5 489.2,698.7 489.3,697.8 C489.4,697.0 489.4,696.1 489.5,695.3 C489.6,694.5 489.6,693.6 489.7,692.8 C489.8,691.9 489.8,691.1 489.9,690.2 C490.0,689.4 490.0,688.5 490.1,687.7 C490.2,686.8 490.2,686.0 490.3,685.1 C490.3,684.3 490.4,683.4 490.5,682.6 C490.5,681.7 490.6,680.9 490.6,680.0 C490.7,679.2 490.8,678.3 490.8,677.5 C490.9,676.6 490.9,675.8 491.0,674.9 C491.0,674.1 491.1,673.3 491.1,672.4 C491.2,671.6 491.2,670.7 491.3,669.9 C491.3,669.1 491.4,668.2 491.4,667.4 C491.5,666.6 491.5,665.7 491.6,664.9 C491.6,664.1 491.7,663.3 491.7,662.4 C491.8,661.6 491.8,660.8 491.9,660.0 C491.9,659.2 492.0,658.3 492.0,657.5 C492.1,656.7 492.1,655.9 492.1,655.1 C492.2,654.3 492.2,653.4 492.3,652.6 C492.3,651.8 492.4,651.0 492.4,650.2 C492.4,649.4 492.5,648.6 492.5,647.8 C492.6,646.9 492.6,646.1 492.7,645.3 C492.7,644.5 492.7,643.7 492.8,642.8 C492.8,642.0 492.9,641.2 492.9,640.4 C493.0,639.6 493.0,638.7 493.0,637.9 C493.1,637.1 493.1,636.2 493.2,635.4 C493.2,634.6 493.2,633.7 493.3,632.9 C493.3,632.0 493.4,631.2 493.4,630.4 C493.4,629.5 493.5,628.6 493.5,627.8 C493.6,626.9 493.6,626.1 493.6,625.2 C493.7,624.3 493.7,623.5 493.8,622.6 C493.8,621.7 493.8,620.8 493.9,620.0 C493.9,619.1 494.0,618.2 494.0,617.4 C494.0,616.5 494.1,615.6 494.1,614.7 C494.2,613.9 494.2,613.0 494.2,612.1 C494.3,611.2 494.3,610.4 494.4,609.5 C494.4,608.7 494.4,607.8 494.5,606.9 C494.5,606.1 494.6,605.2 494.6,604.4 C494.6,603.6 494.7,602.7 494.7,601.9 C494.8,601.1 494.8,600.2 494.9,599.4 C494.9,598.6 494.9,597.8 495.0,597.0 C495.0,596.2 495.1,595.4 495.1,594.6 C495.1,593.8 495.2,593.1 495.2,592.3 C495.3,591.6 495.3,590.8 495.4,590.1 C495.4,589.4 495.4,588.6 495.5,587.9 C495.5,587.2 495.6,586.5 495.6,585.8 C495.7,585.1 495.7,584.4 495.8,583.7 C495.8,582.9 495.8,582.2 495.9,581.5 C495.9,580.7 496.0,580.0 496.0,579.2 C496.1,578.4 496.1,577.5 496.1,576.7 C496.2,575.8 496.2,574.9 496.3,574.0 C496.3,573.1 496.4,572.1 496.4,571.0 C496.4,570.0 496.5,568.9 496.5,567.8 C496.6,566.7 496.6,565.5 496.6,564.4 C496.7,563.2 496.7,562.1 496.8,560.9 C496.8,559.8 496.9,558.6 496.9,557.6 C497.0,556.5 497.1,555.4 497.1,554.5 C497.2,553.5 497.3,552.6 497.4,551.8 C497.4,551.0 497.5,550.3 497.6,549.7 C497.7,549.1 497.9,548.6 498.0,548.3 C498.1,548.0 498.2,547.8 498.3,547.7 C498.5,547.7 498.6,547.8 498.7,548.0 C498.9,548.3 499.0,548.7 499.1,549.3 C499.3,549.9 499.4,550.7 499.5,551.6 C499.6,552.6 499.8,553.7 499.9,554.9 C500.0,556.1 500.1,557.4 500.2,558.6 C500.3,559.8 500.4,561.1 500.5,562.3 C500.5,563.4 500.6,564.5 500.7,565.6 C500.8,566.7 500.9,567.7 500.9,568.7 C501.0,569.6 501.1,570.6 501.1,571.5 C501.2,572.4 501.3,573.2 501.3,574.1 C501.4,574.9 501.4,575.7 501.5,576.5 C501.6,577.3 501.6,578.1 501.7,578.9 C501.7,579.7 501.8,580.4 501.8,581.2 C501.9,582.0 501.9,582.7 502.0,583.5 C502.0,584.3 502.1,585.1 502.1,585.8 C502.2,586.6 502.2,587.4 502.3,588.2 C502.3,589.0 502.4,589.8 502.4,590.6 C502.5,591.3 502.5,592.1 502.6,592.9 C502.6,593.7 502.7,594.5 502.7,595.3 C502.8,596.1 502.8,596.9 502.9,597.8 C502.9,598.6 503.0,599.4 503.0,600.2 C503.1,601.0 503.1,601.8 503.2,602.6 C503.2,603.5 503.2,604.3 503.3,605.1 C503.3,605.9 503.4,606.7 503.4,607.6 C503.5,608.4 503.5,609.2 503.6,610.0 C503.6,610.9 503.7,611.7 503.7,612.5 C503.8,613.4 503.8,614.2 503.9,615.0 C503.9,615.9 504.0,616.7 504.0,617.6 C504.1,618.4 504.1,619.2 504.2,620.1 C504.2,620.9 504.3,621.8 504.3,622.6 C504.4,623.4 504.4,624.3 504.5,625.1 C504.5,626.0 504.6,626.8 504.6,627.7 C504.7,628.5 504.7,629.4 504.8,630.2 C504.8,631.0 504.9,631.9 504.9,632.7 C505.0,633.6 505.0,634.4 505.1,635.3 C505.1,636.1 505.2,637.0 505.2,637.8 C505.3,638.7 505.3,639.5 505.4,640.4 C505.4,641.2 505.5,642.1 505.5,642.9 C505.6,643.8 505.6,644.6 505.7,645.5 C505.8,646.3 505.8,647.2 505.9,648.0 C505.9,648.8 506.0,649.7 506.0,650.5 C506.1,651.4 506.1,652.2 506.2,653.1 C506.3,653.9 506.3,654.8 506.4,655.6 C506.4,656.4 506.5,657.3 506.5,658.1 C506.6,659.0 506.7,659.8 506.7,660.6 C506.8,661.5 506.8,662.3 506.9,663.1 C507.0,664.0 507.0,664.8 507.1,665.6 C507.1,666.5 507.2,667.3 507.3,668.1 C507.3,668.9 507.4,669.8 507.4,670.6 C507.5,671.4 507.6,672.3 507.6,673.1 C507.7,673.9 507.7,674.7 507.8,675.6 C507.9,676.4 507.9,677.2 508.0,678.0 C508.0,678.9 508.1,679.7 508.2,680.5 C508.2,681.3 508.3,682.2 508.3,683.0 C508.4,683.8 508.5,684.7 508.5,685.5 C508.6,686.3 508.6,687.1 508.7,688.0 C508.7,688.8 508.8,689.6 508.8,690.4 C508.9,691.3 509.0,692.1 509.0,692.9 C509.1,693.7 509.1,694.6 509.2,695.4 C509.2,696.2 509.3,697.1 509.3,697.9 C509.4,698.7 509.4,699.6 509.4,700.4 C509.5,701.2 509.5,702.1 509.6,702.9 C509.6,703.7 509.7,704.6 509.7,705.4 C509.8,706.2 509.8,707.1 509.9,707.9 C509.9,708.7 510.0,709.6 510.1,710.4 C510.1,711.3 510.2,712.1 510.3,712.9 C510.3,713.8 510.4,714.6 510.5,715.4 C510.6,716.3 510.7,717.1 510.8,717.9 C510.9,718.8 511.0,719.6 511.1,720.4 C511.2,721.2 511.3,722.1 511.5,722.9 C511.6,723.7 511.7,724.5 511.9,725.4 C512.1,726.2 512.2,727.0 512.4,727.8 C512.6,728.6 512.8,729.5 513.0,730.3 C513.2,731.1 513.4,731.9 513.6,732.7 C513.9,733.5 514.1,734.3 514.4,735.1 C514.6,735.9 514.9,736.7 515.2,737.5 C515.5,738.3 515.8,739.1 516.1,739.9 C516.4,740.7 516.8,741.5 517.1,742.2 C517.5,743.0 517.9,743.8 518.3,744.5 C518.7,745.3 519.1,746.0 519.5,746.8 C519.9,747.5 520.3,748.3 520.8,749.0 C521.2,749.7 521.7,750.4 522.2,751.1 C522.7,751.8 523.2,752.5 523.7,753.1 C524.2,753.8 524.7,754.5 525.3,755.1 C525.8,755.7 526.4,756.4 526.9,757.0 C527.5,757.6 528.1,758.1 528.7,758.7 C529.3,759.3 529.9,759.8 530.5,760.3 C531.1,760.9 531.8,761.4 532.4,761.8 C533.1,762.3 533.8,762.8 534.4,763.2 C535.1,763.6 535.8,764.0 536.5,764.4 C537.2,764.8 538.0,765.2 538.7,765.5 C539.4,765.8 540.2,766.2 540.9,766.5 C541.7,766.8 542.4,767.0 543.2,767.3 C544.0,767.5 544.8,767.8 545.5,768.0 C546.3,768.2 547.1,768.4 547.9,768.6 C548.7,768.8 549.6,769.0 550.4,769.1 C551.2,769.3 552.0,769.4 552.9,769.5 C553.7,769.7 554.5,769.8 555.4,769.9 C556.2,770.0 557.0,770.1 557.9,770.2 C558.7,770.2 559.6,770.3 560.4,770.4 C561.3,770.4 562.2,770.5 563.0,770.5 C563.9,770.6 564.7,770.6 565.6,770.6 C566.4,770.7 567.3,770.7 568.2,770.7 C569.0,770.7 569.9,770.7 570.7,770.7 C571.6,770.7 572.4,770.8 573.3,770.8 C574.1,770.8 575.0,770.8 575.8,770.8 C576.7,770.8 577.5,770.7 578.4,770.7 C579.2,770.7 580.1,770.7 580.9,770.7 C581.8,770.7 582.6,770.6 583.5,770.6 C584.3,770.6 585.2,770.6 586.0,770.5 C586.8,770.5 587.7,770.5 588.5,770.4 C589.4,770.4 590.2,770.3 591.0,770.3 C591.9,770.3 592.7,770.2 593.6,770.2 C594.4,770.1 595.2,770.1 596.1,770.0 C596.9,769.9 597.7,769.9 598.6,769.8 C599.4,769.8 600.2,769.7 601.1,769.6 C601.9,769.6 602.7,769.5 603.6,769.4 C604.4,769.4 605.2,769.3 606.0,769.2 C606.9,769.1 607.7,769.1 608.5,769.0 C609.4,768.9 610.2,768.8 611.0,768.7 C611.8,768.6 612.7,768.6 613.5,768.5 C614.3,768.4 615.2,768.3 616.0,768.2 C616.8,768.1 617.6,768.0 618.5,767.9 C619.3,767.8 620.1,767.7 620.9,767.6 C621.8,767.5 622.6,767.4 623.4,767.3 C624.2,767.2 625.1,767.1 625.9,767.0 C626.7,766.9 627.5,766.8 628.4,766.7 C629.2,766.6 630.0,766.5 630.8,766.4 C631.7,766.3 632.5,766.2 633.3,766.1 C634.1,766.0 635.0,765.9 635.8,765.8 C636.6,765.7 637.4,765.6 638.3,765.4 C639.1,765.3 639.9,765.2 640.7,765.1 C641.6,765.0 642.4,764.9 643.2,764.8 C644.0,764.7 644.9,764.6 645.7,764.4 C646.5,764.3 647.3,764.2 648.2,764.1 C649.0,764.0 649.8,763.9 650.6,763.8 C651.5,763.6 652.3,763.5 653.1,763.4 C654.0,763.3 654.8,763.2 655.6,763.1 C656.4,763.0 657.3,762.8 658.1,762.7 C658.9,762.6 659.8,762.5 660.6,762.4 C661.4,762.2 662.2,762.1 663.1,762.0 C663.9,761.9 664.7,761.8 665.6,761.6 C666.4,761.5 667.2,761.4 668.0,761.3 C668.9,761.1 669.7,761.0 670.5,760.9 C671.4,760.8 672.2,760.6 673.0,760.5 C673.8,760.4 674.7,760.2 675.5,760.1 C676.3,760.0 677.1,759.8 678.0,759.7 C678.8,759.6 679.6,759.4 680.5,759.3 C681.3,759.1 682.1,759.0 682.9,758.9 C683.8,758.7 684.6,758.6 685.4,758.4 C686.2,758.3 687.1,758.1 687.9,758.0 C688.7,757.8 689.5,757.7 690.4,757.5 C691.2,757.4 692.0,757.2 692.8,757.0 C693.7,756.9 694.5,756.7 695.3,756.5 C696.1,756.4 696.9,756.2 697.8,756.0 C698.6,755.9 699.4,755.7 700.2,755.5 C701.0,755.4 701.9,755.2 702.7,755.0 C703.5,754.8 704.3,754.6 705.1,754.5 C705.9,754.3 706.8,754.1 707.6,753.9 C708.4,753.7 709.2,753.5 710.0,753.3 C710.8,753.1 711.7,752.9 712.5,752.7 C713.3,752.5 714.1,752.3 714.9,752.1 C715.7,751.9 716.5,751.7 717.3,751.5 C718.1,751.2 718.9,751.0 719.8,750.8 C720.6,750.6 721.4,750.4 722.2,750.1 C723.0,749.9 723.8,749.7 724.6,749.4 C725.4,749.2 726.2,749.0 727.0,748.7 C727.8,748.5 728.6,748.2 729.4,748.0 C730.2,747.8 731.0,747.5 731.8,747.2 C732.6,747.0 733.4,746.7 734.2,746.5 C735.0,746.2 735.8,746.0 736.6,745.7 C737.4,745.4 738.1,745.2 738.9,744.9 C739.7,744.6 740.5,744.3 741.3,744.1 C742.1,743.8 742.9,743.5 743.7,743.2 C744.5,742.9 745.2,742.6 746.0,742.3 C746.8,742.0 747.6,741.8 748.4,741.5 C749.1,741.2 749.9,740.9 750.7,740.6 C751.5,740.2 752.3,739.9 753.0,739.6 C753.8,739.3 754.6,739.0 755.4,738.7 C756.1,738.4 756.9,738.1 757.7,737.7 C758.5,737.4 759.2,737.1 760.0,736.7 C760.8,736.4 761.5,736.1 762.3,735.8 C763.1,735.4 763.8,735.1 764.6,734.7 C765.3,734.4 766.1,734.0 766.9,733.7 C767.6,733.4 768.4,733.0 769.1,732.6 C769.9,732.3 770.7,731.9 771.4,731.6 C772.2,731.2 772.9,730.9 773.7,730.5 C774.4,730.1 775.2,729.7 775.9,729.4 C776.7,729.0 777.4,728.6 778.2,728.2 C778.9,727.9 779.6,727.5 780.4,727.1 C781.1,726.7 781.9,726.3 782.6,725.9 C783.4,725.5 784.1,725.2 784.8,724.8 C785.6,724.4 786.3,724.0 787.0,723.6 C787.8,723.2 788.5,722.7 789.2,722.3 C789.9,721.9 790.7,721.5 791.4,721.1 C792.1,720.7 792.8,720.3 793.6,719.8 C794.3,719.4 795.0,719.0 795.7,718.6 C796.4,718.1 797.2,717.7 797.9,717.3 C798.6,716.8 799.3,716.4 800.0,716.0 C800.7,715.5 801.4,715.1 802.1,714.6 C802.8,714.2 803.6,713.8 804.3,713.3 C805.0,712.9 805.7,712.4 806.4,711.9 C807.1,711.5 807.8,711.0 808.5,710.6 C809.2,710.1 809.8,709.6 810.5,709.2 C811.2,708.7 811.9,708.2 812.6,707.7 C813.3,707.3 814.0,706.8 814.7,706.3 C815.4,705.8 816.0,705.3 816.7,704.9 C817.4,704.4 818.1,703.9 818.7,703.4 C819.4,702.9 820.1,702.4 820.8,701.9 C821.4,701.4 822.1,700.9 822.8,700.4 C823.4,699.9 824.1,699.4 824.8,698.9 C825.4,698.4 826.1,697.9 826.8,697.3 C827.4,696.8 828.1,696.3 828.7,695.8 C829.4,695.3 830.0,694.7 830.7,694.2 C831.3,693.7 832.0,693.2 832.6,692.6 C833.3,692.1 833.9,691.6 834.6,691.0 C835.2,690.5 835.8,689.9 836.5,689.4 C837.1,688.9 837.8,688.3 838.4,687.8 C839.0,687.2 839.6,686.7 840.3,686.1 C840.9,685.5 841.5,685.0 842.2,684.4 C842.8,683.9 843.4,683.3 844.0,682.7 C844.6,682.2 845.6,681.3 845.9,681.0" stroke="#000000" stroke-width="3" fill="none" stroke-linejoin="round" stroke-linecap="round"/>
</g>
<rect x="400.5" y="487.5" width="445" height="316" fill="none" stroke="#000" stroke-width="1"/>
<text transform="translate(396.5,807.1) scale(0.86,1)" text-anchor="end" font-size="12" fill="#000">0</text>
<text transform="translate(396.5,767.6) scale(0.86,1)" text-anchor="end" font-size="12" fill="#000">10</text>
<text transform="translate(396.5,728.1) scale(0.86,1)" text-anchor="end" font-size="12" fill="#000">20</text>
<text transform="translate(396.5,688.6) scale(0.86,1)" text-anchor="end" font-size="12" fill="#000">30</text>
<text transform="translate(396.5,649.1) scale(0.86,1)" text-anchor="end" font-size="12" fill="#000">40</text>
<text transform="translate(396.5,609.6) scale(0.86,1)" text-anchor="end" font-size="12" fill="#000">50</text>
<text transform="translate(396.5,570.1) scale(0.86,1)" text-anchor="end" font-size="12" fill="#000">60</text>
<text transform="translate(396.5,530.6) scale(0.86,1)" text-anchor="end" font-size="12" fill="#000">70</text>
<text transform="translate(396.5,491.1) scale(0.86,1)" text-anchor="end" font-size="12" fill="#000">80</text>
<text transform="translate(863.5,491.1) scale(0.86,1)" text-anchor="middle" font-size="12" fill="#000">120</text>
<text transform="translate(863.5,530.6) scale(0.86,1)" text-anchor="middle" font-size="12" fill="#000">90</text>
<text transform="translate(863.5,570.1) scale(0.86,1)" text-anchor="middle" font-size="12" fill="#000">60</text>
<text transform="translate(863.5,609.6) scale(0.86,1)" text-anchor="middle" font-size="12" fill="#000">30</text>
<text transform="translate(863.5,649.1) scale(0.86,1)" text-anchor="middle" font-size="12" fill="#000">0</text>
<text transform="translate(863.5,688.6) scale(0.86,1)" text-anchor="middle" font-size="12" fill="#000">-30</text>
<text transform="translate(863.5,728.1) scale(0.86,1)" text-anchor="middle" font-size="12" fill="#000">-60</text>
<text transform="translate(863.5,767.6) scale(0.86,1)" text-anchor="middle" font-size="12" fill="#000">-90</text>
<text transform="translate(863.5,807.1) scale(0.86,1)" text-anchor="middle" font-size="12" fill="#000">-120</text>
<text transform="translate(441.1,814.5) scale(0.86,1)" text-anchor="middle" font-size="12" fill="#000">20</text>
<text transform="translate(494.7,814.5) scale(0.86,1)" text-anchor="middle" font-size="12" fill="#000">50</text>
<text transform="translate(535.3,814.5) scale(0.86,1)" text-anchor="middle" font-size="12" fill="#000">100</text>
<text transform="translate(575.9,814.5) scale(0.86,1)" text-anchor="middle" font-size="12" fill="#000">200</text>
<text transform="translate(629.5,814.5) scale(0.86,1)" text-anchor="middle" font-size="12" fill="#000">500</text>
<text transform="translate(670.1,814.5) scale(0.86,1)" text-anchor="middle" font-size="12" fill="#000">1k</text>
<text transform="translate(710.7,814.5) scale(0.86,1)" text-anchor="middle" font-size="12" fill="#000">2k</text>
<text transform="translate(764.3,814.5) scale(0.86,1)" text-anchor="middle" font-size="12" fill="#000">5k</text>
<text transform="translate(804.9,814.5) scale(0.86,1)" text-anchor="middle" font-size="12" fill="#000">10k</text>
<text transform="translate(845.5,814.5) scale(0.86,1)" text-anchor="middle" font-size="12" fill="#000">20k</text>
<text transform="translate(395.5,814.5) scale(0.86,1)" text-anchor="start" font-size="12" fill="#000">10Hz</text>
<text x="623.0" y="483.6" text-anchor="middle" font-size="12" fill="#000">Impedance</text>
<text transform="translate(401.5,482.2) scale(0.95,1)" font-size="11" fill="#000">ohm</text>
<text transform="translate(843,482.2) scale(0.95,1)" text-anchor="end" font-size="11" fill="#000">deg</text>
<line x1="926" y1="792.5" x2="1354" y2="792.5" stroke="#dadada" stroke-width="1"/>
<line x1="926" y1="781.5" x2="1354" y2="781.5" stroke="#dadada" stroke-width="1"/>
<line x1="926" y1="771.5" x2="1354" y2="771.5" stroke="#dadada" stroke-width="1"/>
<line x1="926" y1="760.5" x2="1354" y2="760.5" stroke="#dadada" stroke-width="1"/>
<line x1="926" y1="739.5" x2="1354" y2="739.5" stroke="#dadada" stroke-width="1"/>
<line x1="926" y1="729.5" x2="1354" y2="729.5" stroke="#dadada" stroke-width="1"/>
<line x1="926" y1="718.5" x2="1354" y2="718.5" stroke="#dadada" stroke-width="1"/>
<line x1="926" y1="708.5" x2="1354" y2="708.5" stroke="#dadada" stroke-width="1"/>
<line x1="926" y1="687.5" x2="1354" y2="687.5" stroke="#dadada" stroke-width="1"/>
<line x1="926" y1="676.5" x2="1354" y2="676.5" stroke="#dadada" stroke-width="1"/>
<line x1="926" y1="666.5" x2="1354" y2="666.5" stroke="#dadada" stroke-width="1"/>
<line x1="926" y1="655.5" x2="1354" y2="655.5" stroke="#dadada" stroke-width="1"/>
<line x1="926" y1="634.5" x2="1354" y2="634.5" stroke="#dadada" stroke-width="1"/>
<line x1="926" y1="623.5" x2="1354" y2="623.5" stroke="#dadada" stroke-width="1"/>
<line x1="926" y1="613.5" x2="1354" y2="613.5" stroke="#dadada" stroke-width="1"/>
<line x1="926" y1="602.5" x2="1354" y2="602.5" stroke="#dadada" stroke-width="1"/>
<line x1="926" y1="581.5" x2="1354" y2="581.5" stroke="#dadada" stroke-width="1"/>
<line x1="926" y1="571.5" x2="1354" y2="571.5" stroke="#dadada" stroke-width="1"/>
<line x1="926" y1="560.5" x2="1354" y2="560.5" stroke="#dadada" stroke-width="1"/>
<line x1="926" y1="550.5" x2="1354" y2="550.5" stroke="#dadada" stroke-width="1"/>
<line x1="926" y1="529.5" x2="1354" y2="529.5" stroke="#dadada" stroke-width="1"/>
<line x1="926" y1="518.5" x2="1354" y2="518.5" stroke="#dadada" stroke-width="1"/>
<line x1="926" y1="508.5" x2="1354" y2="508.5" stroke="#dadada" stroke-width="1"/>
<line x1="926" y1="497.5" x2="1354" y2="497.5" stroke="#dadada" stroke-width="1"/>
<line x1="964.5" y1="488" x2="964.5" y2="803" stroke="#cacaca" stroke-width="1"/>
<line x1="987.5" y1="488" x2="987.5" y2="803" stroke="#cacaca" stroke-width="1"/>
<line x1="1003.5" y1="488" x2="1003.5" y2="803" stroke="#cacaca" stroke-width="1"/>
<line x1="1015.5" y1="488" x2="1015.5" y2="803" stroke="#cacaca" stroke-width="1"/>
<line x1="1026.5" y1="488" x2="1026.5" y2="803" stroke="#cacaca" stroke-width="1"/>
<line x1="1034.5" y1="488" x2="1034.5" y2="803" stroke="#cacaca" stroke-width="1"/>
<line x1="1042.5" y1="488" x2="1042.5" y2="803" stroke="#cacaca" stroke-width="1"/>
<line x1="1049.5" y1="488" x2="1049.5" y2="803" stroke="#cacaca" stroke-width="1"/>
<line x1="1094.5" y1="488" x2="1094.5" y2="803" stroke="#cacaca" stroke-width="1"/>
<line x1="1116.5" y1="488" x2="1116.5" y2="803" stroke="#cacaca" stroke-width="1"/>
<line x1="1133.5" y1="488" x2="1133.5" y2="803" stroke="#cacaca" stroke-width="1"/>
<line x1="1145.5" y1="488" x2="1145.5" y2="803" stroke="#cacaca" stroke-width="1"/>
<line x1="1156.5" y1="488" x2="1156.5" y2="803" stroke="#cacaca" stroke-width="1"/>
<line x1="1164.5" y1="488" x2="1164.5" y2="803" stroke="#cacaca" stroke-width="1"/>
<line x1="1172.5" y1="488" x2="1172.5" y2="803" stroke="#cacaca" stroke-width="1"/>
<line x1="1178.5" y1="488" x2="1178.5" y2="803" stroke="#cacaca" stroke-width="1"/>
<line x1="1224.5" y1="488" x2="1224.5" y2="803" stroke="#cacaca" stroke-width="1"/>
<line x1="1246.5" y1="488" x2="1246.5" y2="803" stroke="#cacaca" stroke-width="1"/>
<line x1="1263.5" y1="488" x2="1263.5" y2="803" stroke="#cacaca" stroke-width="1"/>
<line x1="1275.5" y1="488" x2="1275.5" y2="803" stroke="#cacaca" stroke-width="1"/>
<line x1="1286.5" y1="488" x2="1286.5" y2="803" stroke="#cacaca" stroke-width="1"/>
<line x1="1294.5" y1="488" x2="1294.5" y2="803" stroke="#cacaca" stroke-width="1"/>
<line x1="1302.5" y1="488" x2="1302.5" y2="803" stroke="#cacaca" stroke-width="1"/>
<line x1="1308.5" y1="488" x2="1308.5" y2="803" stroke="#cacaca" stroke-width="1"/>
<line x1="926" y1="750.5" x2="1354" y2="750.5" stroke="#6e6e6e" stroke-width="1"/>
<line x1="926" y1="697.5" x2="1354" y2="697.5" stroke="#6e6e6e" stroke-width="1"/>
<line x1="926" y1="645.5" x2="1354" y2="645.5" stroke="#6e6e6e" stroke-width="1"/>
<line x1="926" y1="592.5" x2="1354" y2="592.5" stroke="#6e6e6e" stroke-width="1"/>
<line x1="926" y1="539.5" x2="1354" y2="539.5" stroke="#6e6e6e" stroke-width="1"/>
<line x1="1054.5" y1="488" x2="1054.5" y2="803" stroke="#6e6e6e" stroke-width="1"/>
<line x1="1184.5" y1="488" x2="1184.5" y2="803" stroke="#6e6e6e" stroke-width="1"/>
<line x1="1314.5" y1="488" x2="1314.5" y2="803" stroke="#6e6e6e" stroke-width="1"/>
<clipPath id="clip11"><rect x="926" y="488" width="428" height="315"/></clipPath>
<g clip-path="url(#clip11)">
<path d="M925.0,519.2 L1355.0,519.2" stroke="#e2b050" stroke-width="1.6" fill="none" stroke-linejoin="round" stroke-linecap="round"/>
<path d="M925.4,662.5 C925.7,662.2 926.6,661.3 927.2,660.7 C927.8,660.1 928.4,659.5 929.0,658.8 C929.5,658.2 930.1,657.6 930.7,657.0 C931.3,656.4 931.9,655.7 932.4,655.1 C933.0,654.5 933.6,653.9 934.1,653.2 C934.7,652.6 935.3,652.0 935.8,651.4 C936.4,650.7 936.9,650.1 937.5,649.5 C938.0,648.8 938.6,648.2 939.1,647.5 C939.7,646.9 940.2,646.3 940.7,645.6 C941.3,645.0 941.8,644.3 942.3,643.7 C942.9,643.0 943.4,642.4 943.9,641.7 C944.4,641.1 944.9,640.4 945.5,639.7 C946.0,639.1 946.5,638.4 947.0,637.8 C947.5,637.1 948.0,636.4 948.4,635.7 C948.9,635.1 949.4,634.4 949.9,633.7 C950.4,633.0 950.9,632.4 951.3,631.7 C951.8,631.0 952.3,630.3 952.7,629.6 C953.2,628.9 953.6,628.2 954.1,627.5 C954.5,626.8 955.0,626.1 955.4,625.4 C955.8,624.7 956.3,624.0 956.7,623.3 C957.1,622.6 957.5,621.9 957.9,621.2 C958.4,620.5 958.8,619.7 959.2,619.0 C959.6,618.3 960.0,617.6 960.3,616.8 C960.7,616.1 961.1,615.4 961.5,614.6 C961.8,613.9 962.2,613.2 962.6,612.4 C962.9,611.7 963.3,610.9 963.6,610.2 C964.0,609.4 964.3,608.7 964.6,607.9 C965.0,607.1 965.3,606.4 965.6,605.6 C965.9,604.8 966.2,604.1 966.5,603.3 C966.8,602.5 967.1,601.7 967.4,600.9 C967.7,600.1 968.0,599.4 968.3,598.6 C968.5,597.8 968.8,597.0 969.0,596.2 C969.3,595.4 969.5,594.6 969.8,593.7 C970.0,592.9 970.3,592.1 970.5,591.3 C970.7,590.5 970.9,589.6 971.1,588.8 C971.3,588.0 971.5,587.2 971.7,586.3 C971.9,585.5 972.1,584.7 972.3,583.8 C972.5,583.0 972.7,582.2 972.8,581.3 C973.0,580.5 973.2,579.7 973.4,578.8 C973.5,578.0 973.7,577.1 973.8,576.3 C974.0,575.5 974.2,574.6 974.3,573.8 C974.5,572.9 974.6,572.1 974.8,571.3 C974.9,570.4 975.1,569.6 975.2,568.8 C975.3,567.9 975.5,567.1 975.6,566.3 C975.8,565.5 975.9,564.6 976.0,563.8 C976.2,563.0 976.3,562.2 976.5,561.4 C976.6,560.6 976.7,559.8 976.9,558.9 C977.0,558.1 977.2,557.3 977.3,556.6 C977.4,555.8 977.6,555.0 977.7,554.2 C977.9,553.4 978.0,552.6 978.2,551.9 C978.3,551.1 978.5,550.3 978.6,549.6 C978.8,548.8 978.9,548.1 979.1,547.3 C979.3,546.6 979.4,545.8 979.6,545.0 C979.8,544.3 979.9,543.5 980.1,542.7 C980.3,541.9 980.4,541.1 980.6,540.3 C980.8,539.5 981.0,538.7 981.1,537.8 C981.3,537.0 981.5,536.1 981.7,535.2 C981.9,534.3 982.0,533.4 982.2,532.4 C982.4,531.4 982.6,530.5 982.8,529.4 C983.0,528.4 983.1,527.3 983.3,526.3 C983.5,525.2 983.7,524.1 983.9,523.0 C984.1,521.9 984.3,520.9 984.5,519.9 C984.7,518.8 984.9,517.9 985.2,517.0 C985.4,516.1 985.6,515.2 985.9,514.5 C986.1,513.8 986.4,513.2 986.6,512.7 C986.9,512.3 987.2,511.9 987.5,511.7 C987.8,511.5 988.1,511.5 988.4,511.7 C988.7,511.8 989.1,512.2 989.4,512.7 C989.8,513.1 990.1,513.7 990.4,514.4 C990.7,515.1 991.0,515.9 991.3,516.7 C991.5,517.6 991.8,518.5 991.9,519.4 C992.1,520.3 992.3,521.3 992.4,522.2 C992.6,523.2 992.7,524.2 992.8,525.2 C992.9,526.2 993.0,527.2 993.1,528.2 C993.1,529.2 993.2,530.2 993.3,531.2 C993.4,532.1 993.5,533.1 993.5,534.0 C993.6,534.9 993.7,535.8 993.8,536.7 C993.9,537.6 993.9,538.4 994.0,539.3 C994.1,540.2 994.2,541.0 994.3,541.8 C994.4,542.7 994.5,543.5 994.6,544.3 C994.6,545.1 994.7,545.9 994.8,546.7 C994.9,547.5 995.0,548.3 995.1,549.1 C995.2,549.9 995.3,550.7 995.4,551.5 C995.5,552.3 995.6,553.0 995.7,553.8 C995.8,554.6 995.8,555.4 995.9,556.2 C996.0,557.0 996.1,557.8 996.2,558.6 C996.3,559.5 996.4,560.3 996.5,561.1 C996.6,561.9 996.7,562.7 996.8,563.5 C996.9,564.3 997.0,565.2 997.1,566.0 C997.2,566.8 997.3,567.6 997.4,568.5 C997.5,569.3 997.6,570.1 997.7,570.9 C997.8,571.8 997.9,572.6 998.0,573.4 C998.2,574.3 998.3,575.1 998.4,575.9 C998.5,576.8 998.6,577.6 998.7,578.5 C998.8,579.3 998.9,580.1 999.0,581.0 C999.1,581.8 999.2,582.7 999.3,583.5 C999.4,584.4 999.5,585.2 999.6,586.0 C999.7,586.9 999.8,587.7 999.9,588.6 C1000.0,589.4 1000.1,590.3 1000.2,591.1 C1000.3,591.9 1000.4,592.8 1000.5,593.6 C1000.6,594.5 1000.7,595.3 1000.8,596.2 C1000.9,597.0 1001.0,597.8 1001.1,598.7 C1001.2,599.5 1001.3,600.4 1001.4,601.2 C1001.5,602.1 1001.6,602.9 1001.7,603.7 C1001.8,604.6 1001.9,605.4 1002.0,606.2 C1002.1,607.1 1002.2,607.9 1002.3,608.7 C1002.4,609.6 1002.5,610.4 1002.6,611.2 C1002.7,612.1 1002.8,612.9 1002.9,613.7 C1003.0,614.6 1003.1,615.4 1003.2,616.2 C1003.3,617.1 1003.4,617.9 1003.5,618.7 C1003.6,619.5 1003.7,620.4 1003.8,621.2 C1003.9,622.0 1004.0,622.8 1004.1,623.7 C1004.2,624.5 1004.3,625.3 1004.4,626.1 C1004.5,627.0 1004.6,627.8 1004.7,628.6 C1004.8,629.4 1004.9,630.3 1005.0,631.1 C1005.2,631.9 1005.3,632.7 1005.4,633.5 C1005.5,634.4 1005.6,635.2 1005.7,636.0 C1005.8,636.8 1006.0,637.6 1006.1,638.5 C1006.2,639.3 1006.3,640.1 1006.4,640.9 C1006.6,641.7 1006.7,642.6 1006.8,643.4 C1006.9,644.2 1007.1,645.0 1007.2,645.8 C1007.3,646.6 1007.5,647.5 1007.6,648.3 C1007.8,649.1 1007.9,649.9 1008.0,650.7 C1008.2,651.5 1008.3,652.3 1008.5,653.2 C1008.6,654.0 1008.8,654.8 1008.9,655.6 C1009.1,656.4 1009.2,657.2 1009.4,658.0 C1009.6,658.9 1009.7,659.7 1009.9,660.5 C1010.1,661.3 1010.2,662.1 1010.4,662.9 C1010.6,663.7 1010.7,664.6 1010.9,665.4 C1011.1,666.2 1011.3,667.0 1011.5,667.8 C1011.7,668.6 1011.9,669.4 1012.1,670.2 C1012.2,671.1 1012.4,671.9 1012.7,672.7 C1012.9,673.5 1013.1,674.3 1013.3,675.1 C1013.5,675.9 1013.7,676.8 1013.9,677.6 C1014.1,678.4 1014.4,679.2 1014.6,680.0 C1014.8,680.8 1015.1,681.6 1015.3,682.4 C1015.5,683.3 1015.8,684.1 1016.0,684.9 C1016.3,685.7 1016.5,686.5 1016.8,687.3 C1017.0,688.1 1017.3,689.0 1017.6,689.8 C1017.8,690.6 1018.1,691.4 1018.4,692.2 C1018.7,693.0 1018.9,693.8 1019.2,694.6 C1019.5,695.5 1019.8,696.3 1020.1,697.1 C1020.4,697.9 1020.7,698.7 1021.1,699.5 C1021.4,700.2 1021.7,701.0 1022.0,701.8 C1022.4,702.6 1022.7,703.4 1023.1,704.2 C1023.4,704.9 1023.8,705.7 1024.2,706.5 C1024.5,707.2 1024.9,708.0 1025.3,708.7 C1025.7,709.5 1026.1,710.2 1026.5,710.9 C1026.9,711.7 1027.3,712.4 1027.8,713.1 C1028.2,713.8 1028.6,714.5 1029.1,715.2 C1029.5,715.9 1030.0,716.6 1030.5,717.2 C1030.9,717.9 1031.4,718.6 1031.9,719.2 C1032.4,719.9 1032.9,720.5 1033.5,721.1 C1034.0,721.7 1034.5,722.3 1035.1,722.9 C1035.6,723.5 1036.2,724.1 1036.7,724.7 C1037.3,725.2 1037.9,725.8 1038.5,726.3 C1039.1,726.9 1039.7,727.4 1040.4,727.9 C1041.0,728.4 1041.6,728.9 1042.3,729.4 C1042.9,729.9 1043.6,730.3 1044.3,730.8 C1045.0,731.2 1045.7,731.7 1046.4,732.1 C1047.1,732.5 1047.8,732.9 1048.5,733.3 C1049.2,733.8 1049.9,734.1 1050.7,734.5 C1051.4,734.9 1052.1,735.3 1052.9,735.6 C1053.6,736.0 1054.4,736.3 1055.2,736.7 C1055.9,737.0 1056.7,737.3 1057.5,737.7 C1058.3,738.0 1059.0,738.3 1059.8,738.6 C1060.6,738.9 1061.4,739.2 1062.2,739.4 C1063.0,739.7 1063.8,740.0 1064.6,740.3 C1065.5,740.5 1066.3,740.8 1067.1,741.0 C1067.9,741.3 1068.7,741.5 1069.5,741.7 C1070.4,742.0 1071.2,742.2 1072.0,742.4 C1072.8,742.6 1073.6,742.8 1074.5,743.0 C1075.3,743.3 1076.1,743.5 1076.9,743.6 C1077.8,743.8 1078.6,744.0 1079.4,744.2 C1080.3,744.4 1081.1,744.6 1081.9,744.7 C1082.7,744.9 1083.6,745.1 1084.4,745.2 C1085.2,745.4 1086.0,745.6 1086.9,745.7 C1087.7,745.9 1088.5,746.0 1089.4,746.1 C1090.2,746.3 1091.0,746.4 1091.8,746.5 C1092.7,746.7 1093.5,746.8 1094.3,746.9 C1095.2,747.0 1096.0,747.2 1096.8,747.3 C1097.6,747.4 1098.5,747.5 1099.3,747.6 C1100.1,747.7 1101.0,747.8 1101.8,747.9 C1102.6,748.0 1103.4,748.1 1104.3,748.2 C1105.1,748.3 1105.9,748.3 1106.8,748.4 C1107.6,748.5 1108.4,748.6 1109.3,748.6 C1110.1,748.7 1110.9,748.8 1111.8,748.8 C1112.6,748.9 1113.4,749.0 1114.2,749.0 C1115.1,749.1 1115.9,749.1 1116.7,749.2 C1117.6,749.3 1118.4,749.3 1119.2,749.3 C1120.1,749.4 1120.9,749.4 1121.7,749.5 C1122.6,749.5 1123.4,749.6 1124.2,749.6 C1125.1,749.6 1125.9,749.7 1126.7,749.7 C1127.6,749.7 1128.4,749.7 1129.2,749.8 C1130.1,749.8 1130.9,749.8 1131.7,749.8 C1132.6,749.9 1133.4,749.9 1134.2,749.9 C1135.1,749.9 1135.9,749.9 1136.7,749.9 C1137.6,749.9 1138.4,750.0 1139.2,750.0 C1140.1,750.0 1140.9,750.0 1141.7,750.0 C1142.6,750.0 1143.4,750.0 1144.2,750.0 C1145.1,750.0 1145.9,750.0 1146.7,750.0 C1147.6,750.0 1148.4,750.0 1149.3,750.0 C1150.1,750.0 1150.9,750.0 1151.8,750.0 C1152.6,750.0 1153.4,750.0 1154.3,750.0 C1155.1,750.0 1155.9,750.0 1156.8,750.0 C1157.6,750.0 1158.4,750.0 1159.3,750.0 C1160.1,750.0 1160.9,750.0 1161.8,750.0 C1162.6,750.0 1163.5,749.9 1164.3,749.9 C1165.1,749.9 1166.0,749.9 1166.8,749.9 C1167.6,749.9 1168.5,749.9 1169.3,749.9 C1170.1,749.9 1171.0,749.9 1171.8,749.9 C1172.6,749.9 1173.5,749.9 1174.3,749.9 C1175.2,749.9 1176.0,749.9 1176.8,749.9 C1177.7,749.9 1178.5,749.9 1179.3,749.9 C1180.2,749.9 1181.0,749.9 1181.8,749.9 C1182.7,749.9 1183.5,749.9 1184.4,749.9 C1185.2,749.9 1186.0,749.9 1186.9,749.9 C1187.7,749.9 1188.5,749.9 1189.4,749.9 C1190.2,749.9 1191.0,749.9 1191.9,749.9 C1192.7,749.9 1193.6,749.9 1194.4,749.9 C1195.2,749.9 1196.1,749.9 1196.9,749.9 C1197.7,749.9 1198.6,749.9 1199.4,749.9 C1200.2,749.9 1201.1,749.9 1201.9,749.9 C1202.8,749.9 1203.6,749.9 1204.4,749.9 C1205.3,749.9 1206.1,749.9 1206.9,749.9 C1207.8,749.9 1208.6,749.9 1209.4,749.9 C1210.3,749.9 1211.1,749.9 1212.0,749.9 C1212.8,749.9 1213.6,749.9 1214.5,749.9 C1215.3,749.9 1216.1,749.9 1217.0,749.9 C1217.8,749.9 1218.7,749.9 1219.5,749.9 C1220.3,749.9 1221.2,749.9 1222.0,749.9 C1222.8,750.0 1223.7,750.0 1224.5,750.0 C1225.3,750.0 1226.2,750.0 1227.0,750.0 C1227.9,750.0 1228.7,750.0 1229.5,750.0 C1230.4,750.0 1231.2,750.0 1232.0,750.0 C1232.9,750.0 1233.7,750.0 1234.6,750.0 C1235.4,750.0 1236.2,750.0 1237.1,750.0 C1237.9,750.0 1238.7,750.1 1239.6,750.1 C1240.4,750.1 1241.2,750.1 1242.1,750.1 C1242.9,750.1 1243.8,750.1 1244.6,750.1 C1245.4,750.1 1246.3,750.1 1247.1,750.1 C1247.9,750.1 1248.8,750.1 1249.6,750.1 C1250.5,750.1 1251.3,750.1 1252.1,750.1 C1253.0,750.2 1253.8,750.2 1254.6,750.2 C1255.5,750.2 1256.3,750.2 1257.2,750.2 C1258.0,750.2 1258.8,750.2 1259.7,750.2 C1260.5,750.2 1261.3,750.2 1262.2,750.2 C1263.0,750.2 1263.8,750.2 1264.7,750.2 C1265.5,750.2 1266.4,750.2 1267.2,750.3 C1268.0,750.3 1268.9,750.3 1269.7,750.3 C1270.5,750.3 1271.4,750.3 1272.2,750.3 C1273.1,750.3 1273.9,750.3 1274.7,750.3 C1275.6,750.3 1276.4,750.3 1277.2,750.3 C1278.1,750.3 1278.9,750.3 1279.7,750.3 C1280.6,750.3 1281.4,750.3 1282.3,750.3 C1283.1,750.4 1283.9,750.4 1284.8,750.4 C1285.6,750.4 1286.4,750.4 1287.3,750.4 C1288.1,750.4 1289.0,750.4 1289.8,750.4 C1290.6,750.4 1291.5,750.4 1292.3,750.4 C1293.1,750.4 1294.0,750.4 1294.8,750.4 C1295.6,750.4 1296.5,750.4 1297.3,750.4 C1298.2,750.4 1299.0,750.4 1299.8,750.4 C1300.7,750.4 1301.5,750.4 1302.3,750.4 C1303.2,750.4 1304.0,750.4 1304.8,750.4 C1305.7,750.4 1306.5,750.4 1307.4,750.4 C1308.2,750.5 1309.0,750.5 1309.9,750.5 C1310.7,750.5 1311.5,750.5 1312.4,750.5 C1313.2,750.5 1314.0,750.5 1314.9,750.5 C1315.7,750.5 1316.6,750.5 1317.4,750.5 C1318.2,750.5 1319.1,750.5 1319.9,750.5 C1320.7,750.5 1321.6,750.5 1322.4,750.5 C1323.2,750.5 1324.1,750.5 1324.9,750.4 C1325.7,750.4 1326.6,750.4 1327.4,750.4 C1328.3,750.4 1329.1,750.4 1329.9,750.4 C1330.8,750.4 1331.6,750.4 1332.4,750.4 C1333.3,750.4 1334.1,750.4 1334.9,750.4 C1335.8,750.4 1336.6,750.4 1337.4,750.4 C1338.3,750.4 1339.1,750.4 1339.9,750.4 C1340.8,750.4 1341.6,750.4 1342.5,750.4 C1343.3,750.4 1344.1,750.4 1345.0,750.4 C1345.8,750.3 1346.6,750.3 1347.5,750.3 C1348.3,750.3 1349.1,750.3 1350.0,750.3 C1350.8,750.3 1351.6,750.3 1352.5,750.3 C1353.3,750.3 1354.6,750.3 1355.0,750.3" stroke="#000000" stroke-width="3" fill="none" stroke-linejoin="round" stroke-linecap="round"/>
</g>
<rect x="925.5" y="487.5" width="429" height="316" fill="none" stroke="#000" stroke-width="1"/>
<text transform="translate(921.5,807.1) scale(0.86,1)" text-anchor="end" font-size="12" fill="#000">-5</text>
<text transform="translate(921.5,754.4) scale(0.86,1)" text-anchor="end" font-size="12" fill="#000">0</text>
<text transform="translate(921.5,701.8) scale(0.86,1)" text-anchor="end" font-size="12" fill="#000">5</text>
<text transform="translate(921.5,649.1) scale(0.86,1)" text-anchor="end" font-size="12" fill="#000">10</text>
<text transform="translate(921.5,596.4) scale(0.86,1)" text-anchor="end" font-size="12" fill="#000">15</text>
<text transform="translate(921.5,543.8) scale(0.86,1)" text-anchor="end" font-size="12" fill="#000">20</text>
<text transform="translate(921.5,491.1) scale(0.86,1)" text-anchor="end" font-size="12" fill="#000">25</text>
<text transform="translate(1372.5,491.1) scale(0.86,1)" text-anchor="middle" font-size="12" fill="#000">5</text>
<text transform="translate(1372.5,543.8) scale(0.86,1)" text-anchor="middle" font-size="12" fill="#000">-3.33</text>
<text transform="translate(1372.5,596.4) scale(0.86,1)" text-anchor="middle" font-size="12" fill="#000">-11.67</text>
<text transform="translate(1372.5,649.1) scale(0.86,1)" text-anchor="middle" font-size="12" fill="#000">-20</text>
<text transform="translate(1372.5,701.8) scale(0.86,1)" text-anchor="middle" font-size="12" fill="#000">-28.33</text>
<text transform="translate(1372.5,754.4) scale(0.86,1)" text-anchor="middle" font-size="12" fill="#000">-36.67</text>
<text transform="translate(1372.5,807.1) scale(0.86,1)" text-anchor="middle" font-size="12" fill="#000">-45</text>
<text transform="translate(964.6,814.5) scale(0.86,1)" text-anchor="middle" font-size="12" fill="#000">20</text>
<text transform="translate(1016.3,814.5) scale(0.86,1)" text-anchor="middle" font-size="12" fill="#000">50</text>
<text transform="translate(1055.5,814.5) scale(0.86,1)" text-anchor="middle" font-size="12" fill="#000">100</text>
<text transform="translate(1094.6,814.5) scale(0.86,1)" text-anchor="middle" font-size="12" fill="#000">200</text>
<text transform="translate(1146.3,814.5) scale(0.86,1)" text-anchor="middle" font-size="12" fill="#000">500</text>
<text transform="translate(1185.4,814.5) scale(0.86,1)" text-anchor="middle" font-size="12" fill="#000">1k</text>
<text transform="translate(1224.5,814.5) scale(0.86,1)" text-anchor="middle" font-size="12" fill="#000">2k</text>
<text transform="translate(1276.3,814.5) scale(0.86,1)" text-anchor="middle" font-size="12" fill="#000">5k</text>
<text transform="translate(1315.4,814.5) scale(0.86,1)" text-anchor="middle" font-size="12" fill="#000">10k</text>
<text transform="translate(1354.5,814.5) scale(0.86,1)" text-anchor="middle" font-size="12" fill="#000">20k</text>
<text transform="translate(920.5,814.5) scale(0.86,1)" text-anchor="start" font-size="12" fill="#000">10Hz</text>
<text x="1140.0" y="483.6" text-anchor="middle" font-size="12" fill="#000">Group delay</text>
<text transform="translate(926.5,482.2) scale(0.95,1)" font-size="11" fill="#000">ms</text>
<text transform="translate(1352,482.2) scale(0.95,1)" text-anchor="end" font-size="11" fill="#000">dB</text>
<line x1="1435" y1="795.5" x2="1865" y2="795.5" stroke="#dadada" stroke-width="1"/>
<line x1="1435" y1="787.5" x2="1865" y2="787.5" stroke="#dadada" stroke-width="1"/>
<line x1="1435" y1="779.5" x2="1865" y2="779.5" stroke="#dadada" stroke-width="1"/>
<line x1="1435" y1="771.5" x2="1865" y2="771.5" stroke="#dadada" stroke-width="1"/>
<line x1="1435" y1="755.5" x2="1865" y2="755.5" stroke="#dadada" stroke-width="1"/>
<line x1="1435" y1="747.5" x2="1865" y2="747.5" stroke="#dadada" stroke-width="1"/>
<line x1="1435" y1="739.5" x2="1865" y2="739.5" stroke="#dadada" stroke-width="1"/>
<line x1="1435" y1="731.5" x2="1865" y2="731.5" stroke="#dadada" stroke-width="1"/>
<line x1="1435" y1="716.5" x2="1865" y2="716.5" stroke="#dadada" stroke-width="1"/>
<line x1="1435" y1="708.5" x2="1865" y2="708.5" stroke="#dadada" stroke-width="1"/>
<line x1="1435" y1="700.5" x2="1865" y2="700.5" stroke="#dadada" stroke-width="1"/>
<line x1="1435" y1="692.5" x2="1865" y2="692.5" stroke="#dadada" stroke-width="1"/>
<line x1="1435" y1="676.5" x2="1865" y2="676.5" stroke="#dadada" stroke-width="1"/>
<line x1="1435" y1="668.5" x2="1865" y2="668.5" stroke="#dadada" stroke-width="1"/>
<line x1="1435" y1="660.5" x2="1865" y2="660.5" stroke="#dadada" stroke-width="1"/>
<line x1="1435" y1="652.5" x2="1865" y2="652.5" stroke="#dadada" stroke-width="1"/>
<line x1="1435" y1="637.5" x2="1865" y2="637.5" stroke="#dadada" stroke-width="1"/>
<line x1="1435" y1="629.5" x2="1865" y2="629.5" stroke="#dadada" stroke-width="1"/>
<line x1="1435" y1="621.5" x2="1865" y2="621.5" stroke="#dadada" stroke-width="1"/>
<line x1="1435" y1="613.5" x2="1865" y2="613.5" stroke="#dadada" stroke-width="1"/>
<line x1="1435" y1="597.5" x2="1865" y2="597.5" stroke="#dadada" stroke-width="1"/>
<line x1="1435" y1="589.5" x2="1865" y2="589.5" stroke="#dadada" stroke-width="1"/>
<line x1="1435" y1="581.5" x2="1865" y2="581.5" stroke="#dadada" stroke-width="1"/>
<line x1="1435" y1="573.5" x2="1865" y2="573.5" stroke="#dadada" stroke-width="1"/>
<line x1="1435" y1="558.5" x2="1865" y2="558.5" stroke="#dadada" stroke-width="1"/>
<line x1="1435" y1="550.5" x2="1865" y2="550.5" stroke="#dadada" stroke-width="1"/>
<line x1="1435" y1="542.5" x2="1865" y2="542.5" stroke="#dadada" stroke-width="1"/>
<line x1="1435" y1="534.5" x2="1865" y2="534.5" stroke="#dadada" stroke-width="1"/>
<line x1="1435" y1="518.5" x2="1865" y2="518.5" stroke="#dadada" stroke-width="1"/>
<line x1="1435" y1="510.5" x2="1865" y2="510.5" stroke="#dadada" stroke-width="1"/>
<line x1="1435" y1="502.5" x2="1865" y2="502.5" stroke="#dadada" stroke-width="1"/>
<line x1="1435" y1="494.5" x2="1865" y2="494.5" stroke="#dadada" stroke-width="1"/>
<line x1="1473.5" y1="488" x2="1473.5" y2="803" stroke="#cacaca" stroke-width="1"/>
<line x1="1496.5" y1="488" x2="1496.5" y2="803" stroke="#cacaca" stroke-width="1"/>
<line x1="1512.5" y1="488" x2="1512.5" y2="803" stroke="#cacaca" stroke-width="1"/>
<line x1="1525.5" y1="488" x2="1525.5" y2="803" stroke="#cacaca" stroke-width="1"/>
<line x1="1535.5" y1="488" x2="1535.5" y2="803" stroke="#cacaca" stroke-width="1"/>
<line x1="1544.5" y1="488" x2="1544.5" y2="803" stroke="#cacaca" stroke-width="1"/>
<line x1="1551.5" y1="488" x2="1551.5" y2="803" stroke="#cacaca" stroke-width="1"/>
<line x1="1558.5" y1="488" x2="1558.5" y2="803" stroke="#cacaca" stroke-width="1"/>
<line x1="1603.5" y1="488" x2="1603.5" y2="803" stroke="#cacaca" stroke-width="1"/>
<line x1="1626.5" y1="488" x2="1626.5" y2="803" stroke="#cacaca" stroke-width="1"/>
<line x1="1643.5" y1="488" x2="1643.5" y2="803" stroke="#cacaca" stroke-width="1"/>
<line x1="1655.5" y1="488" x2="1655.5" y2="803" stroke="#cacaca" stroke-width="1"/>
<line x1="1666.5" y1="488" x2="1666.5" y2="803" stroke="#cacaca" stroke-width="1"/>
<line x1="1674.5" y1="488" x2="1674.5" y2="803" stroke="#cacaca" stroke-width="1"/>
<line x1="1682.5" y1="488" x2="1682.5" y2="803" stroke="#cacaca" stroke-width="1"/>
<line x1="1689.5" y1="488" x2="1689.5" y2="803" stroke="#cacaca" stroke-width="1"/>
<line x1="1734.5" y1="488" x2="1734.5" y2="803" stroke="#cacaca" stroke-width="1"/>
<line x1="1757.5" y1="488" x2="1757.5" y2="803" stroke="#cacaca" stroke-width="1"/>
<line x1="1773.5" y1="488" x2="1773.5" y2="803" stroke="#cacaca" stroke-width="1"/>
<line x1="1786.5" y1="488" x2="1786.5" y2="803" stroke="#cacaca" stroke-width="1"/>
<line x1="1796.5" y1="488" x2="1796.5" y2="803" stroke="#cacaca" stroke-width="1"/>
<line x1="1805.5" y1="488" x2="1805.5" y2="803" stroke="#cacaca" stroke-width="1"/>
<line x1="1813.5" y1="488" x2="1813.5" y2="803" stroke="#cacaca" stroke-width="1"/>
<line x1="1819.5" y1="488" x2="1819.5" y2="803" stroke="#cacaca" stroke-width="1"/>
<line x1="1435" y1="763.5" x2="1865" y2="763.5" stroke="#6e6e6e" stroke-width="1"/>
<line x1="1435" y1="724.5" x2="1865" y2="724.5" stroke="#6e6e6e" stroke-width="1"/>
<line x1="1435" y1="684.5" x2="1865" y2="684.5" stroke="#6e6e6e" stroke-width="1"/>
<line x1="1435" y1="645.5" x2="1865" y2="645.5" stroke="#6e6e6e" stroke-width="1"/>
<line x1="1435" y1="605.5" x2="1865" y2="605.5" stroke="#6e6e6e" stroke-width="1"/>
<line x1="1435" y1="566.5" x2="1865" y2="566.5" stroke="#6e6e6e" stroke-width="1"/>
<line x1="1435" y1="526.5" x2="1865" y2="526.5" stroke="#6e6e6e" stroke-width="1"/>
<line x1="1564.5" y1="488" x2="1564.5" y2="803" stroke="#6e6e6e" stroke-width="1"/>
<line x1="1695.5" y1="488" x2="1695.5" y2="803" stroke="#6e6e6e" stroke-width="1"/>
<line x1="1825.5" y1="488" x2="1825.5" y2="803" stroke="#6e6e6e" stroke-width="1"/>
<clipPath id="clip21"><rect x="1435" y="488" width="430" height="315"/></clipPath>
<g clip-path="url(#clip21)">
<path d="M1434.0,531.7 L1866.0,531.7" stroke="#e2b050" stroke-width="2.2" fill="none" stroke-linejoin="round" stroke-linecap="round"/>
<path d="M1434.0,667.8 L1866.0,667.8" stroke="#e2b050" stroke-width="1.6" fill="none" stroke-linejoin="round" stroke-linecap="round"/>
<path d="M1434.6,751.3 C1437.2,748.1 1445.6,738.7 1450.4,732.2 C1455.2,725.8 1459.5,719.6 1463.4,712.6 C1467.3,705.6 1470.8,697.3 1473.9,690.3 C1477.0,683.3 1479.4,677.2 1481.8,670.7 C1484.2,664.2 1485.9,656.3 1488.3,651.0 C1490.7,645.7 1493.8,639.1 1496.2,638.7 C1498.6,638.3 1500.8,642.6 1502.7,648.4 C1504.7,654.2 1506.2,663.9 1507.9,673.3 C1509.7,682.7 1511.5,695.1 1513.2,704.7 C1515.0,714.3 1516.2,722.2 1518.4,730.9 C1520.6,739.6 1523.2,749.2 1526.3,757.1 C1529.3,765.0 1532.8,772.1 1536.7,778.0 C1540.6,783.9 1545.0,788.9 1549.8,792.4 C1554.6,795.9 1559.4,797.4 1565.5,799.0 C1571.6,800.6 1579.5,801.5 1586.5,802.1 C1593.5,802.8 1588.5,802.7 1607.4,802.9 C1626.3,803.1 1656.9,803.2 1700.0,803.2 C1743.1,803.2 1838.3,803.2 1866.0,803.2" stroke="#e60000" stroke-width="2.2" fill="none" stroke-linejoin="round" stroke-linecap="round"/>
<path d="M1434.6,793.8 C1435.0,793.8 1436.2,793.5 1437.0,793.3 C1437.9,793.1 1438.7,792.9 1439.5,792.8 C1440.3,792.6 1441.2,792.4 1442.0,792.2 C1442.8,792.0 1443.7,791.8 1444.5,791.6 C1445.3,791.5 1446.2,791.3 1447.0,791.1 C1447.8,790.9 1448.7,790.8 1449.5,790.6 C1450.3,790.4 1451.2,790.3 1452.0,790.1 C1452.8,790.0 1453.7,789.8 1454.5,789.7 C1455.3,789.6 1456.2,789.4 1457.0,789.3 C1457.8,789.2 1458.7,789.1 1459.5,789.0 C1460.3,788.9 1461.2,788.8 1462.0,788.8 C1462.8,788.7 1463.7,788.7 1464.5,788.6 C1465.3,788.6 1466.1,788.6 1467.0,788.6 C1467.8,788.6 1468.6,788.6 1469.4,788.6 C1470.2,788.7 1471.1,788.7 1471.9,788.8 C1472.7,788.9 1473.5,789.0 1474.3,789.1 C1475.1,789.3 1475.9,789.4 1476.7,789.6 C1477.5,789.7 1478.3,789.9 1479.1,790.2 C1479.9,790.4 1480.7,790.6 1481.5,790.9 C1482.2,791.2 1483.0,791.5 1483.8,791.8 C1484.6,792.2 1485.4,792.5 1486.1,792.9 C1486.9,793.3 1487.6,793.8 1488.4,794.2 C1489.2,794.7 1489.9,795.2 1490.7,795.6 C1491.4,796.1 1492.1,796.6 1492.9,797.0 C1493.6,797.4 1494.4,797.9 1495.1,798.2 C1495.8,798.6 1496.5,798.9 1497.3,799.1 C1498.0,799.4 1498.7,799.5 1499.4,799.6 C1500.2,799.7 1500.9,799.7 1501.6,799.6 C1502.3,799.6 1503.0,799.4 1503.8,799.2 C1504.5,799.0 1505.2,798.8 1505.9,798.5 C1506.6,798.2 1507.4,797.8 1508.1,797.4 C1508.8,797.0 1509.6,796.6 1510.3,796.1 C1511.0,795.7 1511.8,795.2 1512.5,794.7 C1513.3,794.3 1514.0,793.8 1514.8,793.3 C1515.5,792.8 1516.3,792.3 1517.1,791.9 C1517.8,791.5 1518.6,791.1 1519.4,790.7 C1520.2,790.3 1521.0,790.0 1521.8,789.7 C1522.6,789.5 1523.4,789.3 1524.2,789.1 C1525.0,788.9 1525.8,788.8 1526.6,788.7 C1527.4,788.6 1528.3,788.6 1529.1,788.5 C1529.9,788.5 1530.7,788.5 1531.6,788.5 C1532.4,788.5 1533.2,788.5 1534.1,788.6 C1534.9,788.6 1535.7,788.6 1536.6,788.6 C1537.4,788.7 1538.2,788.7 1539.1,788.8 C1539.9,788.8 1540.7,788.9 1541.5,788.9 C1542.4,789.0 1543.2,789.1 1544.0,789.1 C1544.9,789.2 1545.7,789.3 1546.5,789.4 C1547.4,789.5 1548.2,789.6 1549.0,789.6 C1549.9,789.7 1550.7,789.8 1551.5,789.9 C1552.3,790.0 1553.2,790.1 1554.0,790.3 C1554.8,790.4 1555.7,790.5 1556.5,790.6 C1557.3,790.7 1558.2,790.8 1559.0,790.9 C1559.8,791.1 1560.7,791.2 1561.5,791.3 C1562.3,791.4 1563.2,791.6 1564.0,791.7 C1564.8,791.8 1565.7,792.0 1566.5,792.1 C1567.3,792.2 1568.1,792.3 1569.0,792.5 C1569.8,792.6 1570.6,792.8 1571.5,792.9 C1572.3,793.0 1573.1,793.2 1574.0,793.3 C1574.8,793.4 1575.6,793.6 1576.5,793.7 C1577.3,793.8 1578.1,794.0 1579.0,794.1 C1579.8,794.2 1580.6,794.4 1581.5,794.5 C1582.3,794.6 1583.1,794.7 1584.0,794.9 C1584.8,795.0 1585.6,795.1 1586.5,795.2 C1587.3,795.4 1588.1,795.5 1589.0,795.6 C1589.8,795.7 1590.6,795.8 1591.5,795.9 C1592.3,796.1 1593.1,796.2 1594.0,796.3 C1594.8,796.4 1595.7,796.5 1596.5,796.6 C1597.3,796.7 1598.2,796.8 1599.0,796.9 C1599.8,797.0 1600.7,797.1 1601.5,797.2 C1602.3,797.2 1603.2,797.3 1604.0,797.4 C1604.8,797.5 1605.7,797.6 1606.5,797.7 C1607.4,797.8 1608.2,797.8 1609.0,797.9 C1609.9,798.0 1610.7,798.1 1611.5,798.1 C1612.4,798.2 1613.2,798.3 1614.0,798.4 C1614.9,798.4 1615.7,798.5 1616.6,798.6 C1617.4,798.6 1618.2,798.7 1619.1,798.8 C1619.9,798.8 1620.7,798.9 1621.6,799.0 C1622.4,799.0 1623.3,799.1 1624.1,799.1 C1624.9,799.2 1625.8,799.3 1626.6,799.3 C1627.4,799.4 1628.3,799.4 1629.1,799.5 C1630.0,799.5 1630.8,799.6 1631.6,799.6 C1632.5,799.7 1633.3,799.7 1634.2,799.8 C1635.0,799.8 1635.8,799.9 1636.7,799.9 C1637.5,800.0 1638.3,800.0 1639.2,800.0 C1640.0,800.1 1640.9,800.1 1641.7,800.2 C1642.5,800.2 1643.4,800.3 1644.2,800.3 C1645.1,800.3 1645.9,800.4 1646.7,800.4 C1647.6,800.5 1648.4,800.5 1649.2,800.5 C1650.1,800.6 1650.9,800.6 1651.8,800.7 C1652.6,800.7 1653.4,800.7 1654.3,800.8 C1655.1,800.8 1656.0,800.8 1656.8,800.9 C1657.6,800.9 1658.5,800.9 1659.3,801.0 C1660.2,801.0 1661.0,801.0 1661.8,801.1 C1662.7,801.1 1663.5,801.1 1664.3,801.2 C1665.2,801.2 1666.0,801.2 1666.9,801.3 C1667.7,801.3 1668.5,801.3 1669.4,801.3 C1670.2,801.4 1671.1,801.4 1671.9,801.4 C1672.7,801.5 1673.6,801.5 1674.4,801.5 C1675.3,801.5 1676.1,801.6 1676.9,801.6 C1677.8,801.6 1678.6,801.6 1679.5,801.7 C1680.3,801.7 1681.1,801.7 1682.0,801.7 C1682.8,801.8 1683.7,801.8 1684.5,801.8 C1685.3,801.8 1686.2,801.8 1687.0,801.9 C1687.9,801.9 1688.7,801.9 1689.5,801.9 C1690.4,801.9 1691.2,802.0 1692.1,802.0 C1692.9,802.0 1693.7,802.0 1694.6,802.0 C1695.4,802.1 1696.3,802.1 1697.1,802.1 C1697.9,802.1 1698.8,802.1 1699.6,802.1 C1700.5,802.2 1701.3,802.2 1702.1,802.2 C1703.0,802.2 1703.8,802.2 1704.7,802.2 C1705.5,802.2 1706.3,802.3 1707.2,802.3 C1708.0,802.3 1708.9,802.3 1709.7,802.3 C1710.5,802.3 1711.4,802.3 1712.2,802.4 C1713.1,802.4 1713.9,802.4 1714.7,802.4 C1715.6,802.4 1716.4,802.4 1717.3,802.4 C1718.1,802.4 1718.9,802.4 1719.8,802.5 C1720.6,802.5 1721.5,802.5 1722.3,802.5 C1723.1,802.5 1724.0,802.5 1724.8,802.5 C1725.7,802.5 1726.5,802.5 1727.3,802.5 C1728.2,802.5 1729.0,802.6 1729.9,802.6 C1730.7,802.6 1731.5,802.6 1732.4,802.6 C1733.2,802.6 1734.1,802.6 1734.9,802.6 C1735.7,802.6 1736.6,802.6 1737.4,802.6 C1738.3,802.6 1739.1,802.6 1739.9,802.6 C1740.8,802.6 1741.6,802.6 1742.5,802.6 C1743.3,802.7 1744.2,802.7 1745.0,802.7 C1745.8,802.7 1746.7,802.7 1747.5,802.7 C1748.4,802.7 1749.2,802.7 1750.0,802.7 C1750.9,802.7 1751.7,802.7 1752.6,802.7 C1753.4,802.7 1754.2,802.7 1755.1,802.7 C1755.9,802.7 1756.8,802.7 1757.6,802.7 C1758.4,802.7 1759.3,802.7 1760.1,802.7 C1761.0,802.7 1761.8,802.7 1762.6,802.7 C1763.5,802.7 1764.3,802.7 1765.2,802.7 C1766.0,802.7 1766.8,802.7 1767.7,802.7 C1768.5,802.7 1769.4,802.7 1770.2,802.7 C1771.0,802.7 1771.9,802.7 1772.7,802.7 C1773.6,802.7 1774.4,802.7 1775.3,802.7 C1776.1,802.7 1776.9,802.7 1777.8,802.7 C1778.6,802.7 1779.5,802.7 1780.3,802.8 C1781.1,802.8 1782.0,802.8 1782.8,802.8 C1783.7,802.8 1784.5,802.8 1785.3,802.8 C1786.2,802.8 1787.0,802.8 1787.9,802.8 C1788.7,802.8 1789.5,802.8 1790.4,802.8 C1791.2,802.8 1792.1,802.8 1792.9,802.8 C1793.7,802.8 1794.6,802.8 1795.4,802.8 C1796.3,802.8 1797.1,802.8 1797.9,802.8 C1798.8,802.8 1799.6,802.8 1800.5,802.8 C1801.3,802.8 1802.1,802.8 1803.0,802.8 C1803.8,802.8 1804.7,802.8 1805.5,802.8 C1806.4,802.8 1807.2,802.8 1808.0,802.8 C1808.9,802.8 1809.7,802.8 1810.6,802.8 C1811.4,802.8 1812.2,802.8 1813.1,802.8 C1813.9,802.8 1814.8,802.8 1815.6,802.8 C1816.4,802.8 1817.3,802.8 1818.1,802.8 C1819.0,802.8 1819.8,802.8 1820.6,802.8 C1821.5,802.8 1822.3,802.8 1823.2,802.8 C1824.0,802.8 1824.8,802.8 1825.7,802.8 C1826.5,802.8 1827.4,802.8 1828.2,802.8 C1829.0,802.8 1829.9,802.8 1830.7,802.8 C1831.6,802.8 1832.4,802.8 1833.2,802.8 C1834.1,802.8 1834.9,802.8 1835.8,802.8 C1836.6,802.8 1837.4,802.8 1838.3,802.9 C1839.1,802.9 1840.0,802.9 1840.8,802.9 C1841.6,802.9 1842.5,802.9 1843.3,802.9 C1844.2,802.9 1845.0,802.9 1845.8,802.9 C1846.7,802.9 1847.5,802.9 1848.4,802.9 C1849.2,802.9 1850.0,802.9 1850.9,802.9 C1851.7,802.9 1852.6,803.0 1853.4,803.0 C1854.2,803.0 1855.1,803.0 1855.9,803.0 C1856.8,803.0 1857.6,803.0 1858.4,803.0 C1859.3,803.0 1860.1,803.0 1861.0,803.0 C1861.8,803.1 1862.6,803.1 1863.5,803.1 C1864.3,803.1 1865.6,803.1 1866.0,803.1" stroke="#0000cd" stroke-width="2.2" fill="none" stroke-linejoin="round" stroke-linecap="round"/>
</g>
<rect x="1434.5" y="487.5" width="431" height="316" fill="none" stroke="#000" stroke-width="1"/>
<text transform="translate(1430.5,807.1) scale(0.86,1)" text-anchor="end" font-size="12" fill="#000">0</text>
<text transform="translate(1430.5,767.6) scale(0.86,1)" text-anchor="end" font-size="12" fill="#000">5</text>
<text transform="translate(1430.5,728.1) scale(0.86,1)" text-anchor="end" font-size="12" fill="#000">10</text>
<text transform="translate(1430.5,688.6) scale(0.86,1)" text-anchor="end" font-size="12" fill="#000">15</text>
<text transform="translate(1430.5,649.1) scale(0.86,1)" text-anchor="end" font-size="12" fill="#000">20</text>
<text transform="translate(1430.5,609.6) scale(0.86,1)" text-anchor="end" font-size="12" fill="#000">25</text>
<text transform="translate(1430.5,570.1) scale(0.86,1)" text-anchor="end" font-size="12" fill="#000">30</text>
<text transform="translate(1430.5,530.6) scale(0.86,1)" text-anchor="end" font-size="12" fill="#000">35</text>
<text transform="translate(1430.5,491.1) scale(0.86,1)" text-anchor="end" font-size="12" fill="#000">40</text>
<text transform="translate(1473.8,814.5) scale(0.86,1)" text-anchor="middle" font-size="12" fill="#000">20</text>
<text transform="translate(1525.8,814.5) scale(0.86,1)" text-anchor="middle" font-size="12" fill="#000">50</text>
<text transform="translate(1565.1,814.5) scale(0.86,1)" text-anchor="middle" font-size="12" fill="#000">100</text>
<text transform="translate(1604.4,814.5) scale(0.86,1)" text-anchor="middle" font-size="12" fill="#000">200</text>
<text transform="translate(1656.3,814.5) scale(0.86,1)" text-anchor="middle" font-size="12" fill="#000">500</text>
<text transform="translate(1695.6,814.5) scale(0.86,1)" text-anchor="middle" font-size="12" fill="#000">1k</text>
<text transform="translate(1734.9,814.5) scale(0.86,1)" text-anchor="middle" font-size="12" fill="#000">2k</text>
<text transform="translate(1786.9,814.5) scale(0.86,1)" text-anchor="middle" font-size="12" fill="#000">5k</text>
<text transform="translate(1826.2,814.5) scale(0.86,1)" text-anchor="middle" font-size="12" fill="#000">10k</text>
<text transform="translate(1865.5,814.5) scale(0.86,1)" text-anchor="middle" font-size="12" fill="#000">20k</text>
<text transform="translate(1429.5,814.5) scale(0.86,1)" text-anchor="start" font-size="12" fill="#000">10Hz</text>
<text x="1650.0" y="483.6" text-anchor="middle" font-size="12" fill="#000">Velocity</text>
<text transform="translate(1435.5,482.2) scale(0.95,1)" font-size="11" fill="#000">m/s</text>
</svg>
</body></html>
